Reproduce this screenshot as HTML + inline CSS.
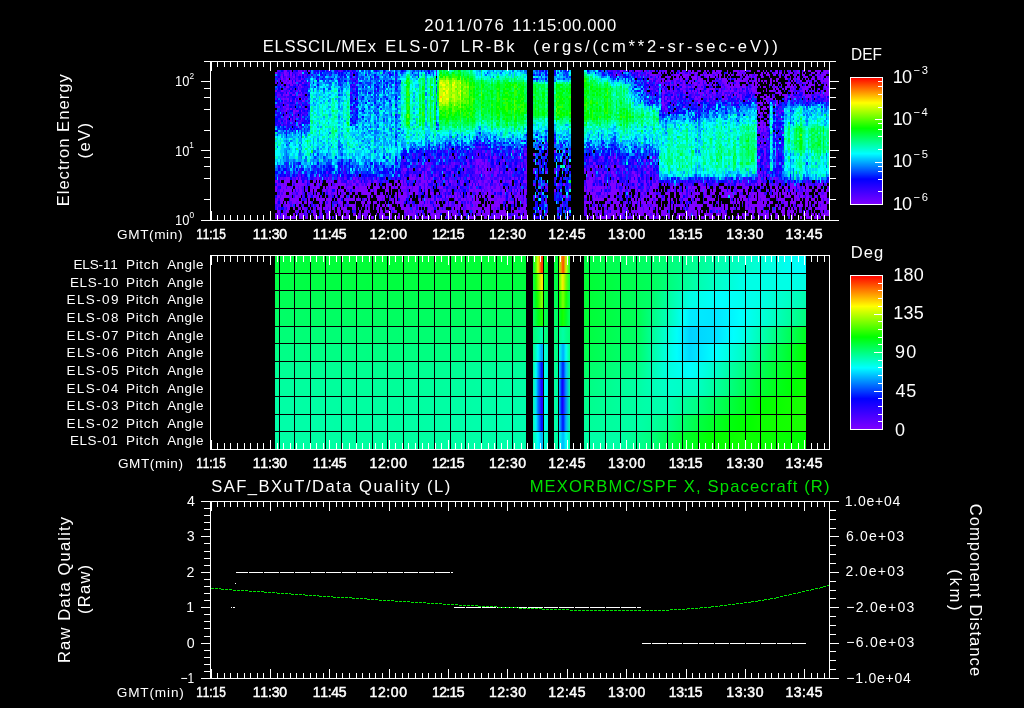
<!DOCTYPE html>
<html lang="en"><head><meta charset="utf-8"><title>ELS plot</title>
<style>html,body{margin:0;padding:0;background:#000;overflow:hidden}svg{display:block}text{font-family:"Liberation Sans",sans-serif;font-kerning:none;white-space:pre}</style>
</head><body>
<svg width="1024" height="708" viewBox="0 0 1024 708">
<rect width="1024" height="708" fill="#000"/><g fill="#fff">
<g shape-rendering="crispEdges" fill="none">
<path stroke="#8000ff" stroke-width="2" d="M284 71h2h1m11 0h1m2 0h1m2 0h1m3 0h2m310 0h2h1m8 0h1m3 0h2h1h2m4 0h2m3 0h1m2 0h1m12 0h2m4 0h2m9 0h1m5 0h1h2m1 0h2m4 0h2m4 0h2m7 0h2m1 0h2h1h2m6 0h1m5 0h1h2h1h2m1 0h2h1h2m4 0h2m6 0h1h2m3 0h1m2 0h1m9 0h2m9 0h1m2 0h1m6 0h2m4 0h2m3 0h1h2m4 0h2m1 0h2h1m3 0h2h1h2M275 73h2m7 0h2m4 0h2m7 0h2h1m50 0h1m83 0h1m209 0h1m2 0h1m8 0h1h2m4 0h2m9 0h1m2 0h1h2m6 0h1m2 0h1h2m1 0h2h1m5 0h1m2 0h1m5 0h1h2h1m2 0h1h2m6 0h1m2 0h1m6 0h2h1m5 0h1m8 0h1m6 0h2m1 0h2m1 0h2m3 0h1m3 0h2m1 0h2h1m2 0h1m5 0h1h2m4 0h2h1m2 0h1m2 0h1m5 0h1h2h1m2 0h1h2m3 0h1h2h1M284 75h2h1m3 0h2m6 0h1m2 0h1m315 0h2m19 0h2m6 0h1m3 0h2h1h2h1m18 0h2h1h2h1m3 0h2h1h2h1m6 0h2m3 0h1h2m1 0h2m1 0h2h1h2m3 0h1h2m1 0h2m3 0h1m3 0h2m1 0h2m3 0h1h2m1 0h2m1 0h2m1 0h2m1 0h2h1m3 0h2h1m2 0h1h2m3 0h1h2h1m3 0h2h1m3 0h2m4 0h2h1h2m3 0h1m2 0h1m5 0h1h2m6 0h1m5 0h1m3 0h2h1h2M281 77h2m3 0h1m6 0h2m354 0h1m6 0h2m1 0h2m4 0h2h1h2h1m2 0h1m3 0h2m1 0h2m1 0h2h1m2 0h1m2 0h1h2h1h2m1 0h2m6 0h1h2m1 0h2m1 0h2m4 0h2m3 0h1m20 0h1h2h1m2 0h1m2 0h1m6 0h2m6 0h1m9 0h2m4 0h2m3 0h1m6 0h2m6 0h1h2m4 0h2m3 0h1h2m1 0h2m3 0h1M281 79h2m3 0h1h2m12 0h1m347 0h1h2h1m5 0h1m3 0h2m9 0h1m2 0h1h2m1 0h2m4 0h2m4 0h2h1h2m1 0h2h1h2m12 0h1m3 0h2m1 0h2h1h2m3 0h1m6 0h2h1m3 0h2h1h2m7 0h2m1 0h2m10 0h2m4 0h2h1m6 0h2h1m2 0h1m2 0h1m3 0h2h1m5 0h1m2 0h1m2 0h1h2m4 0h2m1 0h2m1 0h2h1h2M283 81h1m2 0h1m2 0h1h2m1 0h2m4 0h2m3 0h1m347 0h1m3 0h2m4 0h2m1 0h2m1 0h2h1m3 0h2m4 0h2m1 0h2m4 0h2m7 0h2h1h2m1 0h2m1 0h2m3 0h1m9 0h2h1h2h1m6 0h2h1h2h1h2h1h2m4 0h2m3 0h1h2m1 0h2m1 0h2m1 0h2h1m3 0h2m1 0h2m1 0h2m13 0h2m1 0h2m4 0h2m4 0h2m6 0h1m6 0h2h1h2h1h2M284 83h2m1 0h2h1h2m1 0h2h1m6 0h2m343 0h2m12 0h1m8 0h1m3 0h2m7 0h2m3 0h1h2m1 0h2h1h2m3 0h1h2m1 0h2m3 0h1m2 0h1m2 0h1m8 0h1h2m3 0h1h2m3 0h1h2m7 0h2m4 0h2m1 0h2h1m5 0h1m2 0h1m3 0h2m6 0h1m6 0h2h1h2h1m11 0h1h2m1 0h2m1 0h2h1m5 0h1m3 0h2m4 0h2M281 85h2m7 0h2h1m6 0h2m354 0h1m11 0h1m2 0h1m3 0h2h1m3 0h2m1 0h2m9 0h1h2m1 0h2h1h2m3 0h1h2m4 0h2h1m5 0h1m3 0h2h1m3 0h2m1 0h2h1h2h1m2 0h1h2m6 0h1h2m1 0h2m1 0h2m9 0h1m3 0h2m3 0h1m2 0h1m5 0h1h2m1 0h2m1 0h2m3 0h1m5 0h1m3 0h2h1h2h1m3 0h2m4 0h2m1 0h2M283 87h1m2 0h1h2m9 0h1m2 0h1m359 0h1m2 0h1m5 0h1m6 0h2m3 0h1h2h1m2 0h1h2m1 0h2m6 0h1m2 0h1m11 0h1m5 0h1m5 0h1h2h1h2h1m2 0h1h2h1m2 0h1h2h1m6 0h2h1h2m3 0h1m2 0h1h2m9 0h1m9 0h2h1m2 0h1h2h1m2 0h1m5 0h1m2 0h1h2h1h2m13 0h2h1M298 89h1m363 0h2m6 0h1m9 0h2m16 0h2h1h2m4 0h2m1 0h2h1h2m4 0h2m7 0h2m1 0h2m7 0h2m3 0h1m2 0h1m2 0h1h2h1m11 0h1m6 0h2m1 0h2h1m6 0h2m3 0h1m2 0h1m8 0h1h2h1h2m3 0h1m2 0h1m3 0h2m6 0h1h2M275 91h2m4 0h2m6 0h1m9 0h2m355 0h2m4 0h2h1m2 0h1m15 0h2h1m3 0h2m1 0h2m1 0h2m9 0h1h2m4 0h2m4 0h2m3 0h1h2h1m2 0h1h2h1m3 0h2m4 0h2h1m6 0h2h1h2m6 0h1m2 0h1m2 0h1h2h1m5 0h1m11 0h1h2m10 0h2m1 0h2m9 0h1m3 0h2m3 0h1h2M287 93h2m6 0h1m5 0h1m350 0h1m9 0h2h1m8 0h1m11 0h1m8 0h1m3 0h2h1h2h1m2 0h1m5 0h1h2h1m6 0h2m6 0h1m3 0h2h1m18 0h2h1h2h1m15 0h2h1h2h1m15 0h2m4 0h2m6 0h1m5 0h1m6 0h2h1h2M283 95h1m2 0h1h2m3 0h1h2m3 0h1h2m372 0h1m14 0h1m11 0h1m21 0h2m1 0h2m1 0h2m4 0h2m1 0h2m1 0h2m9 0h1m5 0h1m6 0h2h1m5 0h1m9 0h2h1h2m3 0h1h2m10 0h2m1 0h2h1h2m9 0h1h2m3 0h1h2M662 97h2m1 0h2m4 0h2h1m2 0h1m6 0h2m10 0h2m1 0h2h1m9 0h2m19 0h2m4 0h2m1 0h2m9 0h1m2 0h1h2m3 0h1h2h1m2 0h1h2h1m15 0h2h1m2 0h1m2 0h1m8 0h1m2 0h1h2h1h2m3 0h1m11 0h1M283 99h1m3 0h2m6 0h1m2 0h1m2 0h1m2 0h1m360 0h2m21 0h1m6 0h2h1m2 0h1m12 0h2m7 0h2m3 0h1m8 0h1m3 0h2m7 0h2m12 0h1h2h1m3 0h2h1m2 0h1m9 0h2m24 0h1M283 101h1m6 0h2m3 0h1m6 0h2m348 0h1m9 0h2m3 0h1h2m28 0h2m7 0h2m51 0h1m5 0h1m9 0h2m28 0h2M283 103h1m11 0h1m366 0h2m34 0h2m57 0h1h2h1h2m1 0h2m1 0h2m7 0h2M287 105h2m12 0h1m360 0h2h1m92 0h1m18 0h2M283 107h1m399 0h2m72 0h1h2m3 0h1h2m1 0h2M286 109h1h2m1 0h2m373 0h2m90 0h1h2m1 0h2h1h2h1M286 111h1m6 0h2m1 0h2h1m2 0h1m365 0h1m90 0h2m22 0h2M293 113h2m463 0h2h1h2m1 0h2h1M301 115h1m455 0h1m18 0h2M286 117h1m473 0h1m6 0h2M286 119h1m3 0h2m9 0h1m458 0h1m20 0h1M286 121h1m470 0h1m3 0h2m4 0h2M286 123h1m5 0h1m465 0h2h1h2m1 0h2M298 125h1m458 0h1m2 0h1h2m1 0h2M758 127h2h1h2h1h2M758 129h2m1 0h2m1 0h2M760 131h1h2m1 0h2M757 133h1m2 0h1M763 135h1M764 137h2M758 139h2M761 143h2M764 145h2M760 147h1M449 149h2m307 0h2m4 0h2"/>
<path stroke="#8000ff" stroke-width="3" d="M512 151.5h2m40 0h2m208 0h2M485 154.5h2m37 0h2m7 0h2m229 0h2M490 157.5h1m2 0h1h2m22 0h2m1 0h2m78 0h1m6 0h2m4 0h2m144 0h1M466 160.5h1m9 0h2h1h2h1m3 0h2m16 0h2m84 0h1m21 0h2m4 0h2m25 0h2m111 0h1h2M418 163.5h1m6 0h2m27 0h1m12 0h2m7 0h2h1m2 0h1h2m1 0h2m7 0h2m97 0h2m168 0h1M421 166.5h1m21 0h2m34 0h2m3 0h1h2m9 0h1m20 0h1m3 0h2m3 0h1m14 0h1m53 0h1h2m13 0h2h1m3 0h2m28 0h2m118 0h2M403 169.5h1h2h1m12 0h2m6 0h1h2m46 0h2m4 0h2m1 0h2m4 0h2m4 0h2m10 0h2m15 0h1m6 0h2m27 0h1m21 0h2m6 0h1m29 0h1m2 0h1m18 0h2m6 0h1M422 172.5h2m1 0h2m24 0h1h2m21 0h1h2m1 0h2m3 0h1h2h1m6 0h2h1m3 0h2m6 0h1m2 0h1m12 0h2h1m18 0h2m40 0h2m3 0h1m11 0h1m6 0h2h1m8 0h1m9 0h2h1m12 0h2m108 0h1m2 0h1m3 0h2M403 175.5h1m6 0h2m3 0h1m5 0h1h2m1 0h2m6 0h1m2 0h1m14 0h1m33 0h2m7 0h2h1m90 0h2m4 0h2m6 0h1h2m9 0h1h2m18 0h1h2m1 0h2m118 0h2m7 0h2M286 178.5h1h2h1m6 0h2m1 0h2m16 0h2m9 0h1m9 0h2m13 0h2m54 0h1h2h1h2m3 0h1m2 0h1h2m3 0h1m3 0h2m6 0h1m2 0h1h2m22 0h2h1m5 0h1m11 0h1h2m9 0h1m12 0h2m3 0h1m2 0h1m68 0h1h2m6 0h1h2m1 0h2m13 0h2m12 0h1h2m1 0h2m3 0h1m11 0h1m105 0h2h1m3 0h2m9 0h1M275 181.5h2h1m6 0h2h1h2h1m8 0h1h2h1m3 0h2m6 0h1m3 0h2m1 0h2m4 0h2m3 0h1m6 0h2h1m6 0h2m3 0h1m3 0h2h1m15 0h2h1m18 0h2m3 0h1h2m1 0h2m15 0h1h2h1h2m1 0h2h1m5 0h1m12 0h2h1m8 0h1m2 0h1m8 0h1m5 0h1h2m3 0h1h2m3 0h1m2 0h1h2h1m2 0h1m3 0h2m4 0h2h1m6 0h2m3 0h1h2h1m59 0h1h2h1h2h1m9 0h2m7 0h2m1 0h2h1m14 0h1h2h1h2h1m6 0h2m3 0h1m2 0h1m3 0h2m84 0h1m15 0h2h1M277 184.5h1m3 0h2m1 0h2h1m5 0h1m2 0h1h2h1h2h1h2m6 0h1h2h1m3 0h2m1 0h2m6 0h1h2m4 0h2m1 0h2h1h2h1h2m6 0h1h2h1m3 0h2m3 0h1m2 0h1h2h1m2 0h1m2 0h1m9 0h2m1 0h2h1m2 0h1m2 0h1h2m1 0h2m3 0h1m8 0h1m3 0h2h1m3 0h2h1m5 0h1m5 0h1m6 0h2m3 0h1m9 0h2m7 0h2m1 0h2m1 0h2m1 0h2m3 0h1m3 0h2m7 0h2m1 0h2m12 0h1m42 0h2m4 0h2m22 0h2h1h2m3 0h1m14 0h1h2h1h2m4 0h2m13 0h2m1 0h2m4 0h2m6 0h1h2h1m2 0h1m3 0h2m9 0h1m2 0h1m21 0h2h1m24 0h2m9 0h1h2m1 0h2m1 0h2m10 0h2m1 0h2h1m3 0h2m9 0h1m11 0h1m2 0h1h2h1m3 0h2m7 0h2m10 0h2m1 0h2m3 0h1M275 187.5h2m4 0h2h1h2m1 0h2h1m5 0h1h2m1 0h2m12 0h1m2 0h1h2m4 0h2m1 0h2m1 0h2h1h2h1h2h1m6 0h2m1 0h2h1h2m3 0h1h2m1 0h2h1h2h1h2m1 0h2m4 0h2h1h2m4 0h2m1 0h2m3 0h1h2m1 0h2h1m3 0h2h1h2m3 0h1h2m1 0h2h1h2h1m2 0h1h2m1 0h2m12 0h1h2h1m15 0h2m9 0h1m3 0h2h1m8 0h1m2 0h1h2m1 0h2m3 0h1h2h1m17 0h1m29 0h1m36 0h2m1 0h2h1h2m1 0h2m1 0h2h1h2h1h2m1 0h2m4 0h2h1h2m7 0h2m10 0h2m7 0h2m4 0h2m1 0h2h1m8 0h1m6 0h2m6 0h1m3 0h2m3 0h1h2m1 0h2h1h2m4 0h2h1h2m1 0h2m6 0h1m5 0h1h2m6 0h1m5 0h1m8 0h1h2h1m3 0h2m6 0h1m9 0h2m3 0h1h2m6 0h1h2h1m2 0h1h2h1h2m1 0h2h1m2 0h1m3 0h2m9 0h1h2M275 190.5h2m3 0h1h2m1 0h2h1h2h1h2m1 0h2m1 0h2m1 0h2h1m8 0h1h2m1 0h2h1m6 0h2h1m2 0h1h2m4 0h2m1 0h2m1 0h2h1m2 0h1m2 0h1m2 0h1m2 0h1h2h1h2h1h2h1h2h1m3 0h2m1 0h2h1m8 0h1h2h1m2 0h1m21 0h2h1h2m4 0h2m1 0h2h1m15 0h2h1m2 0h1m20 0h1h2h1m2 0h1h2h1h2m1 0h2m4 0h2h1m2 0h1h2h1h2h1m2 0h1h2m1 0h2m4 0h2m1 0h2m1 0h2m4 0h2h1m20 0h1m6 0h2m28 0h2m1 0h2h1m5 0h1h2h1h2m1 0h2m7 0h2h1h2h1h2m3 0h1h2m3 0h1m6 0h2m1 0h2m4 0h2m3 0h1m2 0h1m2 0h1m2 0h1m2 0h1m9 0h2h1m9 0h2h1m2 0h1m2 0h1m2 0h1m2 0h1m2 0h1h2m1 0h2h1m3 0h2m1 0h2h1m6 0h2h1h2m1 0h2m7 0h2h1h2h1m2 0h1h2m3 0h1m6 0h2m6 0h1m5 0h1h2m1 0h2m4 0h2m3 0h1m2 0h1h2m1 0h2m3 0h1m3 0h2m1 0h2m1 0h2m4 0h2h1m3 0h2m3 0h1M280 193.5h1m2 0h1h2m3 0h1h2m6 0h1h2h1m5 0h1m9 0h2h1m8 0h1h2m3 0h1h2m1 0h2m4 0h2m4 0h2m3 0h1m6 0h2h1h2h1h2h1m3 0h2h1m5 0h1m2 0h1m9 0h2m1 0h2m3 0h1h2m3 0h1h2m3 0h1h2m7 0h2m3 0h1h2m4 0h2m3 0h1m8 0h1m2 0h1h2m4 0h2m4 0h2m7 0h2m6 0h1h2m1 0h2h1m2 0h1m2 0h1m5 0h1h2m4 0h2m6 0h1h2m4 0h2m61 0h2m1 0h2h1h2h1m5 0h1h2m1 0h2m1 0h2h1h2h1h2h1m2 0h1m2 0h1m5 0h1m2 0h1m5 0h1m3 0h2m3 0h1m2 0h1h2h1m12 0h2h1h2m4 0h2m3 0h1h2m1 0h2h1m2 0h1m6 0h2h1h2m4 0h2m6 0h1h2m4 0h2h1m3 0h2h1h2h1h2m1 0h2m3 0h1m6 0h2m1 0h2m1 0h2h1h2m1 0h2h1h2h1m5 0h1m6 0h2m1 0h2m1 0h2h1h2m1 0h2m1 0h2h1m3 0h2m6 0h1m8 0h1m5 0h1m3 0h2h1M277 196.5h1h2m1 0h2h1h2h1h2m6 0h1h2m1 0h2m7 0h2m3 0h1h2m1 0h2m6 0h1m9 0h2m3 0h1h2h1m5 0h1m3 0h2m3 0h1m9 0h2m7 0h2h1h2h1h2m10 0h2m1 0h2h1h2h1h2h1m26 0h1m2 0h1m5 0h1h2m1 0h2m1 0h2m1 0h2m1 0h2m1 0h2m7 0h2m4 0h2m1 0h2m1 0h2m1 0h2h1m3 0h2h1m3 0h2h1m2 0h1m2 0h1m6 0h2m4 0h2h1m2 0h1m3 0h2m37 0h2m3 0h1m15 0h2h1m2 0h1m3 0h2m1 0h2m7 0h2m4 0h2h1m11 0h1m2 0h1m5 0h1h2m6 0h1m2 0h1m2 0h1m2 0h1h2h1m2 0h1h2m3 0h1m3 0h2m4 0h2m4 0h2h1m5 0h1h2m1 0h2h1m2 0h1m6 0h2h1h2h1m12 0h2h1h2h1m2 0h1h2h1m5 0h1h2h1h2h1m5 0h1h2m1 0h2m1 0h2h1h2h1h2m4 0h2h1h2m1 0h2m6 0h1h2h1h2h1m3 0h2h1h2m1 0h2h1m3 0h2h1m6 0h2m3 0h1h2h1h2h1M277 199.5h1m2 0h1h2h1m6 0h2h1h2h1h2h1m2 0h1m6 0h2m3 0h1m2 0h1h2h1h2h1h2m1 0h2h1h2m6 0h1h2h1m3 0h2h1h2h1h2h1h2m1 0h2h1m5 0h1m3 0h2m7 0h2h1h2m1 0h2m6 0h1m3 0h2m3 0h1h2h1h2m4 0h2m7 0h2m4 0h2m1 0h2m1 0h2h1m2 0h1h2m1 0h2m6 0h1m6 0h2h1m3 0h2m1 0h2m3 0h1h2m1 0h2m1 0h2h1m9 0h2h1h2h1m3 0h2h1h2h1h2m3 0h1m6 0h2m1 0h2m4 0h2m63 0h1m3 0h2h1h2h1h2h1h2m3 0h1h2h1h2h1h2h1m14 0h1h2m4 0h2m1 0h2h1m6 0h2h1m2 0h1h2m10 0h2m1 0h2m3 0h1m6 0h2h1h2m3 0h1m3 0h2h1h2m7 0h2h1h2h1h2m3 0h1m11 0h1m3 0h2m1 0h2m1 0h2m1 0h2h1h2m1 0h2h1h2h1h2m1 0h2m1 0h2h1h2m12 0h1h2h1h2h1m6 0h2m1 0h2m1 0h2h1m2 0h1m2 0h1h2h1m2 0h1h2h1m2 0h1m3 0h2m1 0h2h1M275 202.5h2m4 0h2m1 0h2m1 0h2m3 0h1h2h1m2 0h1h2h1m2 0h1h2m1 0h2h1m9 0h2m3 0h1m2 0h1h2m7 0h2h1h2m4 0h2m6 0h1m5 0h1h2h1m2 0h1h2h1m2 0h1h2h1m8 0h1m6 0h2m1 0h2h1h2h1h2h1m15 0h2h1h2m1 0h2m1 0h2m4 0h2m1 0h2m7 0h2m1 0h2m7 0h2h1m5 0h1m2 0h1m2 0h1h2h1h2h1h2m3 0h1m2 0h1m2 0h1m3 0h2h1h2m1 0h2h1m5 0h1h2h1h2m10 0h2m58 0h2h1h2m1 0h2m6 0h1m6 0h2m6 0h1h2m1 0h2h1m5 0h1m6 0h2h1h2m1 0h2m1 0h2h1h2m1 0h2h1h2m1 0h2m6 0h1m6 0h2m3 0h1m2 0h1m8 0h1m6 0h2h1h2m7 0h2m1 0h2m3 0h1m5 0h1m11 0h1h2m1 0h2m1 0h2h1m2 0h1m3 0h2m1 0h2h1m5 0h1h2h1h2m1 0h2h1m2 0h1h2h1m8 0h1m2 0h1h2h1m2 0h1h2h1h2m4 0h2m3 0h1h2m1 0h2m3 0h1h2m1 0h2h1h2m3 0h1h2M280 205.5h1m5 0h1h2h1m2 0h1m3 0h2h1m14 0h1m3 0h2m1 0h2m4 0h2h1h2m3 0h1h2m4 0h2m6 0h1h2h1h2m7 0h2m1 0h2m6 0h1m3 0h2h1m2 0h1h2m1 0h2m1 0h2h1m5 0h1m2 0h1h2m3 0h1h2m3 0h1m2 0h1m2 0h1m2 0h1m2 0h1h2h1h2m6 0h1m2 0h1m5 0h1m3 0h2m4 0h2m1 0h2h1m5 0h1h2h1m3 0h2m1 0h2m4 0h2m3 0h1h2m1 0h2h1h2h1h2h1m6 0h2m16 0h2h1m62 0h1m5 0h1h2m6 0h1h2m4 0h2h1m2 0h1h2m4 0h2m7 0h2h1m3 0h2m3 0h1h2h1m2 0h1m2 0h1h2h1h2m3 0h1m9 0h2m3 0h1m2 0h1m2 0h1m6 0h2h1h2h1h2h1h2h1h2m4 0h2h1h2m6 0h1m2 0h1h2m1 0h2h1m8 0h1m2 0h1m5 0h1h2m1 0h2h1h2h1h2h1h2h1h2h1h2m3 0h1m5 0h1h2m7 0h2m3 0h1m2 0h1m3 0h2h1h2h1m2 0h1h2m6 0h1m3 0h2m1 0h2h1h2h1M277 208.5h1m9 0h2h1m3 0h2m3 0h1h2m1 0h2m6 0h1m6 0h2h1h2m1 0h2m1 0h2m1 0h2m1 0h2m3 0h1h2m1 0h2h1h2h1m5 0h1m2 0h1m2 0h1m9 0h2m3 0h1m3 0h2m1 0h2m3 0h1m3 0h2m1 0h2h1m6 0h2h1h2h1h2h1m3 0h2h1m2 0h1m5 0h1m3 0h2h1h2h1m2 0h1m2 0h1m12 0h2m1 0h2m1 0h2m1 0h2m4 0h2h1m2 0h1h2h1h2h1h2h1m2 0h1h2h1h2m1 0h2h1m2 0h1m6 0h2m12 0h1m2 0h1h2h1h2m60 0h1m5 0h1h2m1 0h2m3 0h1m8 0h1h2m9 0h1m3 0h2m3 0h1m2 0h1m2 0h1h2h1h2m1 0h2h1h2m1 0h2h1m3 0h2m1 0h2m3 0h1h2h1m6 0h2m4 0h2m3 0h1m3 0h2h1h2h1m3 0h2h1m8 0h1h2m3 0h1h2h1h2m1 0h2m1 0h2h1m2 0h1h2h1m5 0h1m5 0h1h2m1 0h2m1 0h2m3 0h1h2h1h2m6 0h1m2 0h1m2 0h1m3 0h2m1 0h2h1m3 0h2m1 0h2m3 0h1m8 0h1m3 0h2h1m3 0h2m1 0h2h1h2h1h2h1M277 211.5h1h2m6 0h1h2m6 0h1m5 0h1m11 0h1h2m4 0h2m6 0h1h2m3 0h1m2 0h1h2h1m2 0h1h2h1m2 0h1m9 0h2m3 0h1h2h1h2m7 0h2m1 0h2m4 0h2h1m2 0h1m2 0h1h2m7 0h2h1m2 0h1m3 0h2m3 0h1m2 0h1m5 0h1h2h1m5 0h1m3 0h2h1h2h1h2m6 0h1m8 0h1h2m7 0h2h1m2 0h1h2m4 0h2h1h2m3 0h1h2m3 0h1h2h1h2h1m8 0h1h2h1h2h1m3 0h2m13 0h2m24 0h1m27 0h2h1m2 0h1m2 0h1m3 0h2m4 0h2h1m2 0h1h2m4 0h2m3 0h1m3 0h2h1m2 0h1h2h1h2m1 0h2h1m2 0h1h2h1m3 0h2m3 0h1h2h1h2m7 0h2m9 0h1m2 0h1h2m3 0h1h2m1 0h2m1 0h2m3 0h1m2 0h1m5 0h1m2 0h1m2 0h1h2h1m6 0h2m15 0h1h2h1h2h1m2 0h1h2h1m2 0h1h2m6 0h1m2 0h1m5 0h1h2h1m2 0h1m2 0h1h2h1m2 0h1m2 0h1m6 0h2m6 0h1m6 0h2m4 0h2M275 214.5h2m1 0h2m1 0h2h1m2 0h1m6 0h2m4 0h2h1h2m9 0h1h2m4 0h2m4 0h2h1m6 0h2m1 0h2h1m2 0h1m2 0h1h2m4 0h2h1m2 0h1m3 0h2h1m2 0h1m2 0h1m9 0h2h1h2m4 0h2h1m6 0h2m6 0h1m2 0h1h2h1h2h1m3 0h2m10 0h2h1h2m1 0h2h1m6 0h2h1m3 0h2h1h2h1m6 0h2m12 0h1h2m1 0h2h1m2 0h1h2m6 0h1m2 0h1h2h1h2h1h2m9 0h1m6 0h2h1m18 0h2m39 0h1m2 0h1m2 0h1m2 0h1m3 0h2h1m6 0h2h1h2m1 0h2m1 0h2m1 0h2h1m12 0h2m1 0h2h1h2h1m2 0h1h2h1m2 0h1h2m1 0h2m3 0h1h2h1h2h1h2m3 0h1m3 0h2h1h2h1h2m3 0h1h2m4 0h2m1 0h2m4 0h2h1h2h1h2h1m3 0h2h1h2m1 0h2h1h2m10 0h2m3 0h1h2m3 0h1m9 0h2m1 0h2h1h2h1h2m1 0h2m4 0h2m4 0h2h1m2 0h1h2m1 0h2m1 0h2m7 0h2h1h2h1m2 0h1h2m1 0h2m4 0h2h1h2h1h2M275 217.5h2m1 0h2m3 0h1h2m6 0h1h2m6 0h1h2m3 0h1m6 0h2h1h2m1 0h2m4 0h2m1 0h2m10 0h2m1 0h2h1h2m7 0h2h1m6 0h2m1 0h2m1 0h2m7 0h2h1h2h1m3 0h2h1m5 0h1h2m4 0h2m3 0h1m5 0h1h2h1m2 0h1m3 0h2h1m3 0h2h1m2 0h1h2m6 0h1m2 0h1h2h1m8 0h1h2m6 0h1h2h1h2h1m5 0h1m2 0h1h2m3 0h1m2 0h1h2h1h2h1m2 0h1m2 0h1m3 0h2m7 0h2m1 0h2h1h2m61 0h2m1 0h2m4 0h2h1h2m1 0h2h1h2h1h2m3 0h1h2h1m3 0h2h1m2 0h1h2h1m2 0h1h2m3 0h1m6 0h2m3 0h1h2h1m3 0h2h1h2m7 0h2m7 0h2m3 0h1m2 0h1h2m1 0h2m4 0h2m4 0h2h1m5 0h1h2h1h2m3 0h1m3 0h2m4 0h2m7 0h2h1h2m10 0h2m4 0h2m4 0h2h1h2m6 0h1h2m6 0h1m6 0h2m7 0h2m4 0h2h1h2h1m2 0h1h2h1h2h1m2 0h1"/>
<path stroke="#6600ff" stroke-width="2" d="M290 71h2m7 0h2m39 0h1m288 0h2m9 0h1m12 0h2m4 0h2m1 0h2m36 0h1m6 0h2m66 0h1m5 0h1m2 0h1m11 0h1m20 0h1M286 73h1h2m9 0h1m314 0h1m18 0h2m13 0h2m1 0h2m18 0h1m11 0h1h2m24 0h1m30 0h2h1m32 0h1M281 75h2m4 0h2m4 0h2m9 0h1m131 0h1m173 0h1m3 0h2m27 0h1m5 0h1m6 0h2m31 0h2m15 0h1m5 0h1m8 0h1m11 0h1m5 0h1m54 0h2m19 0h2M290 77h2m9 0h1m2 0h1m47 0h1m282 0h2m16 0h2m21 0h1m9 0h2m24 0h1m3 0h2m9 0h1m2 0h1m9 0h2m13 0h2m37 0h2m3 0h1m3 0h2m18 0h1M292 79h1m3 0h2m361 0h2m3 0h1m9 0h2m6 0h1m51 0h2m12 0h1m2 0h1m42 0h2m6 0h1m11 0h1m5 0h1M284 81h2m10 0h2h1m359 0h1h2m31 0h2m3 0h1m47 0h1h2m4 0h2m57 0h1m3 0h2M275 83h2m3 0h1m27 0h2m345 0h1h2m4 0h2m13 0h2h1m17 0h1m24 0h2m69 0h1m3 0h2m6 0h1m18 0h2h1M296 85h2m54 0h1m296 0h1m12 0h2m1 0h2m4 0h2m9 0h1m2 0h1m24 0h2m12 0h1m3 0h2m70 0h2m6 0h1M658 87h1m35 0h1m3 0h2m22 0h2m1 0h2m7 0h2m12 0h1m8 0h1m14 0h1m3 0h2m3 0h1m6 0h2m10 0h2m1 0h2m9 0h1M277 89h1m6 0h2h1m3 0h2m61 0h2m294 0h1h2h1m14 0h1m14 0h1h2m3 0h1m8 0h1m11 0h1m15 0h2h1m9 0h2m16 0h2m25 0h2M283 91h1m12 0h2m372 0h1h2m1 0h2h1m11 0h1m9 0h2m22 0h2m4 0h2m10 0h2m7 0h2m22 0h2m4 0h2m19 0h2h1M284 93h2m4 0h2m58 0h2m306 0h1m24 0h2m4 0h2m16 0h2m9 0h1m18 0h2m6 0h1m3 0h2m1 0h2h1m36 0h2m22 0h2m1 0h2m1 0h2M277 95h1h2h1m3 0h2m15 0h1m360 0h2m12 0h1m2 0h1m6 0h2m6 0h1m6 0h2m1 0h2m1 0h2h1h2m1 0h2h1m23 0h1m5 0h1m23 0h1m9 0h2m6 0h1m36 0h2M277 97h1m8 0h1m11 0h1m350 0h1m42 0h2m13 0h2m15 0h1h2m45 0h1h2m19 0h2m3 0h1m15 0h2m4 0h2h1M281 99h2m1 0h2h1m20 0h1m48 0h2m300 0h1m2 0h1h2m7 0h2m3 0h1h2m15 0h1m3 0h2m7 0h2m15 0h1h2m66 0h1m32 0h1M287 101h2m15 0h1m462 0h2m57 0h1M298 103h1m8 0h1m353 0h1m3 0h2m6 0h1m2 0h1m12 0h2m3 0h1m42 0h2M286 105h1m384 0h2m27 0h1m24 0h2m34 0h2M277 107h1h2m4 0h2m1 0h2m13 0h2m48 0h1m309 0h2m1 0h2M295 109h1m9 0h2m360 0h1m110 0h1M284 111h2m9 0h1m378 0h2m87 0h1M779 113h2M287 115h2m471 0h1m6 0h2M283 117h1m3 0h2m4 0h2m1 0h2h1m2 0h1m456 0h2m1 0h2M284 119h2m7 0h2M283 121h1m6 0h2m468 0h1M280 123h1m17 0h1h2m462 0h1m3 0h2M281 125h2M286 127h1m12 0h2m456 0h1m9 0h2m12 0h1M766 129h1M766 133h1h2m9 0h1m3 0h2M766 135h1M760 137h1m6 0h2M764 139h2M757 141h1m2 0h1h2m1 0h2M479 143h2m64 0h2m211 0h2M760 145h1M439 147h1m39 0h2m280 0h2M500 149h2m21 0h1m2 0h1m236 0h1"/>
<path stroke="#6600ff" stroke-width="3" d="M469 151.5h1m12 0h2h1M412 154.5h1m17 0h1m20 0h1m3 0h2m19 0h2m12 0h1m3 0h2m30 0h1m18 0h2m67 0h2m33 0h1m107 0h1m18 0h2M425 157.5h2m6 0h1m6 0h2m7 0h2m45 0h1m105 0h2m49 0h2m109 0h2M404 160.5h2m61 0h2m6 0h1m11 0h1m6 0h2m28 0h2m42 0h1m17 0h1m3 0h2m10 0h2m160 0h2M412 163.5h1m17 0h1m20 0h1h2m19 0h2m4 0h2m7 0h2m10 0h2m10 0h2m7 0h2m3 0h1m38 0h1m29 0h1m14 0h1m2 0h1m20 0h1h2m12 0h1M422 166.5h2m4 0h2h1m5 0h1m12 0h2m1 0h2m7 0h2m4 0h2h1m5 0h1h2m3 0h1m6 0h2m7 0h2m19 0h2m70 0h2h1m26 0h1m17 0h1m14 0h1m104 0h1M409 169.5h1m2 0h1m33 0h2m1 0h2m6 0h1m6 0h2m9 0h1m20 0h1m114 0h2m1 0h2m33 0h1M326 172.5h2m73 0h2m1 0h2m37 0h2m19 0h2m12 0h1m3 0h2m4 0h2h1m6 0h2m3 0h1m2 0h1m48 0h2m28 0h2m3 0h1h2m7 0h2h1m3 0h2m19 0h2m18 0h1m2 0h1m128 0h1M298 175.5h1m18 0h2m90 0h1m3 0h2m42 0h1m11 0h1m8 0h1m3 0h2m3 0h1m2 0h1m17 0h1m2 0h1m53 0h1m23 0h1m32 0h1m21 0h2m3 0h1m2 0h1m3 0h2m103 0h2M280 178.5h1h2m1 0h2m6 0h1m32 0h1m18 0h2m10 0h2m9 0h1m9 0h2m6 0h1m18 0h2m9 0h1m3 0h2m4 0h2m3 0h1m18 0h2m7 0h2m1 0h2m16 0h2m4 0h2m6 0h1m6 0h2m1 0h2m6 0h1m3 0h2m7 0h2m60 0h1m5 0h1h2m19 0h2m28 0h2m9 0h1m2 0h1m111 0h2m1 0h2m1 0h2M280 181.5h1m11 0h1h2h1m18 0h2m13 0h2m1 0h2m16 0h2m10 0h2m4 0h2h1m26 0h1m18 0h2m27 0h1h2m4 0h2m1 0h2m4 0h2m7 0h2m9 0h1m5 0h1m18 0h2h1m116 0h1m78 0h2m9 0h1m12 0h2m1 0h2m4 0h2m18 0h1m20 0h1m14 0h1M278 184.5h2h1m2 0h1m20 0h1h2m30 0h1m11 0h1m11 0h1m15 0h2m25 0h2m3 0h1m6 0h2m4 0h2m30 0h1h2m3 0h1m8 0h1m11 0h1h2m9 0h1m2 0h1m5 0h1m6 0h2h1m14 0h1m6 0h2m10 0h2m51 0h1m18 0h2h1m8 0h1m17 0h1m2 0h1m6 0h2m7 0h2m24 0h1m9 0h2m12 0h1h2m12 0h1m11 0h1m8 0h1m11 0h1m5 0h1h2M290 187.5h2h1m5 0h1m2 0h1m8 0h1h2m1 0h2m24 0h1m17 0h1m14 0h1m5 0h1m20 0h1m5 0h1h2m19 0h2h1m6 0h2m46 0h2m6 0h1m8 0h1m2 0h1m35 0h1m3 0h2m22 0h2m21 0h1m2 0h1m12 0h2m7 0h2m12 0h1h2m3 0h1m14 0h1m3 0h2m12 0h1m48 0h2m22 0h2m18 0h1m15 0h2m22 0h2m3 0h1m3 0h2m13 0h2M305 190.5h2h1m23 0h1m66 0h2m1 0h2h1h2h1m3 0h2h1m5 0h1m11 0h1m18 0h2m6 0h1m2 0h1m5 0h1m6 0h2m10 0h2h1m33 0h2m67 0h2m1 0h2m34 0h2m12 0h1m6 0h2m12 0h1m3 0h2m7 0h2h1m41 0h1m11 0h1m23 0h1m27 0h2m21 0h1m2 0h1m11 0h1m3 0h2M293 193.5h2h1m15 0h2m12 0h1m6 0h2m9 0h1m12 0h2m22 0h2m9 0h1m8 0h1m5 0h1m5 0h1m14 0h1m5 0h1m2 0h1m21 0h2m9 0h1m11 0h1m9 0h2m19 0h2m129 0h1m9 0h2h1m36 0h2h1m15 0h2m39 0h1m21 0h2h1m18 0h2m3 0h1h2h1m3 0h2h1m9 0h2M289 196.5h1h2m6 0h1m30 0h2h1m14 0h1m24 0h2m3 0h1m9 0h2m72 0h1m8 0h1h2m15 0h1m9 0h2m4 0h2m3 0h1m9 0h2m1 0h2m13 0h2m54 0h1m6 0h2h1m2 0h1m5 0h1m5 0h1m14 0h1m12 0h2m1 0h2m12 0h1m53 0h1m5 0h1m57 0h2m22 0h2M275 199.5h2m54 0h1m2 0h1m24 0h2m4 0h2m25 0h2m24 0h1m8 0h1m35 0h1m3 0h2m15 0h1m9 0h2h1m23 0h1h2m22 0h2m88 0h2m9 0h1m2 0h1m12 0h2h1m14 0h1m86 0h1h2M280 202.5h1m15 0h2m21 0h1m59 0h1m30 0h2m42 0h1m44 0h1m21 0h2h1m21 0h2m15 0h1m30 0h2m13 0h2m6 0h1m65 0h1m5 0h1m17 0h1m38 0h1m2 0h1M284 205.5h2m22 0h2m6 0h1m8 0h1m14 0h1m5 0h1m8 0h1m12 0h2m49 0h2m9 0h1h2m1 0h2m1 0h2m4 0h2m1 0h2m15 0h1m11 0h1m84 0h2m22 0h2m6 0h1m17 0h1m9 0h2m3 0h1m38 0h1m3 0h2m4 0h2m1 0h2m1 0h2m1 0h2m48 0h1m50 0h1m2 0h1m21 0h2M304 208.5h1h2m6 0h1m11 0h1m8 0h1m18 0h2m6 0h1m3 0h2m9 0h1m35 0h1m27 0h2m1 0h2m12 0h1m8 0h1m3 0h2m22 0h2m3 0h1m11 0h1h2m55 0h2m13 0h2m3 0h1h2m12 0h1m3 0h2m3 0h1m3 0h2m49 0h2m1 0h2m15 0h1m8 0h1m14 0h1h2m22 0h2m9 0h1m45 0h2m3 0h1m17 0h1M296 211.5h2m7 0h2m18 0h1m21 0h2m33 0h1m2 0h1m21 0h2m1 0h2m4 0h2m15 0h1m3 0h2h1m11 0h1h2m1 0h2m12 0h1m12 0h2m27 0h1m9 0h2m3 0h1m20 0h1m36 0h2m6 0h1m3 0h2m6 0h1m9 0h2m3 0h1m2 0h1m8 0h1m3 0h2m6 0h1m3 0h2m42 0h1h2m73 0h2m4 0h2m13 0h2m10 0h2m9 0h1m12 0h2M284 214.5h2m21 0h1m8 0h1m42 0h2m4 0h2m9 0h1m2 0h1m27 0h2m15 0h1m11 0h1m12 0h2m15 0h1m6 0h2m1 0h2m7 0h2m6 0h1m3 0h2m15 0h1m90 0h2m6 0h1m18 0h2m24 0h1m27 0h2m4 0h2h1m51 0h2m4 0h2m21 0h1m42 0h2M277 217.5h1m3 0h2m4 0h2h1h2m3 0h1m3 0h2m4 0h2m36 0h1m15 0h2m3 0h1m21 0h2m6 0h1m27 0h2h1m3 0h2m4 0h2m3 0h1m14 0h1h2m51 0h1m17 0h1m39 0h2m24 0h1m8 0h1m27 0h2m22 0h2m81 0h1m6 0h2"/>
<path stroke="#4d00ff" stroke-width="2" d="M277 71h1h2m48 0h1m9 0h2m1 0h2m7 0h2m84 0h1m164 0h1m6 0h2h1m2 0h1h2h1m8 0h1m15 0h2m3 0h1m17 0h1m14 0h1m3 0h2h1m11 0h1m23 0h1m24 0h2m22 0h2m21 0h1h2m27 0h1M277 73h1m3 0h2h1m12 0h2m57 0h1m258 0h2m3 0h1m18 0h2h1m21 0h2m9 0h1m20 0h1m9 0h2m10 0h2m25 0h2m28 0h2m13 0h2m4 0h2h1m24 0h2m4 0h2M296 75h2m1 0h2m4 0h2m45 0h1m266 0h1m2 0h1m8 0h1m12 0h2m12 0h1h2h1m9 0h2h1m8 0h1m11 0h1m57 0h2m64 0h2h1M280 77h1m3 0h2m1 0h2m3 0h1m3 0h2m57 0h1m282 0h2m4 0h2m6 0h1m51 0h2m36 0h1m6 0h2m1 0h2m9 0h1m56 0h1m6 0h2M278 79h2m3 0h1h2m4 0h2m1 0h2m7 0h2m46 0h2m3 0h1m297 0h2m1 0h2m10 0h2m15 0h1m21 0h2m31 0h2m75 0h1M275 81h2m1 0h2m1 0h2m4 0h2m16 0h2m49 0h2m309 0h1m5 0h1m2 0h1m5 0h1m8 0h1m21 0h2h1h2h1m2 0h1m29 0h1m45 0h2m9 0h1h2M283 83h1m2 0h1m68 0h1m303 0h2m6 0h1m14 0h1m36 0h2h1m6 0h2m49 0h2M286 85h1h2m12 0h1m6 0h2m45 0h1m39 0h2m264 0h1m29 0h1h2m3 0h1m5 0h1m5 0h1m35 0h1m3 0h2m19 0h2M299 87h2m1 0h2m342 0h1m3 0h2h1m3 0h2m16 0h2m10 0h2m9 0h1m42 0h2m9 0h1m21 0h2m52 0h2M299 89h2m354 0h1m15 0h2m1 0h2h1m8 0h1m9 0h2m6 0h1m2 0h1m15 0h2m9 0h1m5 0h1m9 0h2m40 0h2m1 0h2m27 0h1h2M284 91h2m1 0h2m4 0h2m60 0h1m288 0h2m22 0h2m10 0h2m22 0h2m9 0h1m23 0h1m11 0h1m23 0h1m17 0h1m2 0h1m12 0h2m1 0h2h1M277 93h1h2m24 0h1h2m340 0h2m16 0h2m3 0h1h2m1 0h2m3 0h1m11 0h1h2m1 0h2m22 0h2m3 0h1m2 0h1m14 0h1h2m30 0h1m18 0h2m12 0h1m5 0h1M302 95h2m3 0h1m47 0h1m296 0h1m21 0h2m9 0h1m6 0h2m24 0h1m2 0h1m9 0h2m69 0h1m8 0h1m3 0h2m1 0h2M278 97h2h1h2h1m12 0h2m3 0h1m3 0h2m345 0h1m14 0h1m11 0h1m11 0h1m5 0h1m3 0h2m1 0h2h1m6 0h2h1m3 0h2h1m11 0h1m5 0h1m3 0h2m46 0h2m3 0h1m14 0h1m8 0h1M275 99h2m13 0h2m376 0h2m3 0h1m12 0h2m42 0h1m17 0h1m18 0h2h1m26 0h1m8 0h1h2m1 0h2m7 0h2m7 0h2M298 101h1m371 0h1m3 0h2m18 0h1h2m3 0h1h2m3 0h1m5 0h1m9 0h2m21 0h1h2m15 0h1m5 0h1m15 0h2m3 0h1m2 0h1m15 0h2m4 0h2m6 0h1h2M277 103h1m2 0h1m3 0h2h1m12 0h2m363 0h1m18 0h2m25 0h2m1 0h2m16 0h2m3 0h1m36 0h2m18 0h1M293 105h2m13 0h2m45 0h1m318 0h2m84 0h1m8 0h1m3 0h2m31 0h2M286 107h1m377 0h1m35 0h1m36 0h2m30 0h1m9 0h2h1M283 109h1h2m7 0h2m12 0h1m44 0h1m2 0h1m306 0h2m105 0h1m11 0h1M281 111h2h1m68 0h1m311 0h1h2m109 0h2m1 0h2h1M284 113h2m9 0h1m6 0h2m3 0h1m357 0h2m28 0h2m72 0h1M286 115h1m3 0h2m1 0h2m10 0h2m454 0h2m18 0h1M284 117h2M764 119h2h1m11 0h1h2M278 121h2h1m12 0h2m4 0h2h1m461 0h1M284 123h2M277 125h1m8 0h1M296 127h2m478 0h2M286 129h1m5 0h1m8 0h1m465 0h2h1M757 131h1h2m3 0h1m2 0h1M763 133h1h2m7 0h2M760 135h1h2m1 0h2M757 137h1m3 0h2m3 0h1M761 139h2m3 0h1m9 0h2M521 141h2m240 0h1m3 0h2M554 143h2m201 0h1m9 0h2m7 0h2m3 0h1M766 145h1m2 0h1M476 147h2h1m3 0h2h1m53 0h1m5 0h1m212 0h1m5 0h1m3 0h2h1M473 149h2m15 0h1m33 0h2m15 0h1m47 0h1m12 0h2m40 0h2m111 0h1"/>
<path stroke="#4d00ff" stroke-width="3" d="M439 151.5h1m6 0h2m16 0h2m10 0h2h1m8 0h1h2h1m24 0h2m7 0h2m21 0h1m14 0h1m213 0h2M418 154.5h1m17 0h1m42 0h2m6 0h1m15 0h2m7 0h2m3 0h1m21 0h2m220 0h2M413 157.5h2m16 0h2m10 0h2m6 0h1h2m1 0h2m18 0h1m2 0h1h2m6 0h1m20 0h1m35 0h1m44 0h1h2h1m6 0h2m10 0h2m9 0h1m26 0h1m2 0h1m2 0h1m120 0h2m4 0h2M403 160.5h1m17 0h1m5 0h1m8 0h1m5 0h1m8 0h1m20 0h1m9 0h2m6 0h1m9 0h2h1m11 0h1m11 0h1m38 0h1m26 0h1m5 0h1h2m33 0h1m3 0h2m3 0h1m3 0h2m1 0h2h1m5 0h1m104 0h1m2 0h1M415 163.5h1m3 0h2m6 0h1h2m1 0h2m9 0h1m2 0h1m9 0h2h1h2m9 0h1m2 0h1m2 0h1m8 0h1m2 0h1m18 0h2h1m9 0h2m4 0h2m63 0h1m26 0h1h2m25 0h2m115 0h2m4 0h2m7 0h2h1m2 0h1M403 166.5h1m21 0h2h1m14 0h1m3 0h2m3 0h1m2 0h1m9 0h2h1m15 0h2m3 0h1m2 0h1m9 0h2m3 0h1m6 0h2m52 0h2m1 0h2m16 0h2m10 0h2m1 0h2m4 0h2m10 0h2h1h2m4 0h2m12 0h1m5 0h1m8 0h1m105 0h2h1m2 0h1M401 169.5h2m7 0h2m6 0h1m6 0h2m21 0h1m17 0h1m6 0h2m4 0h2h1m6 0h2m4 0h2m6 0h1m44 0h1m6 0h2m1 0h2m28 0h2h1m3 0h2m1 0h2m3 0h1h2m16 0h2m10 0h2m4 0h2m3 0h1m6 0h2m106 0h2M283 172.5h1m14 0h1m44 0h1m51 0h2m6 0h1m8 0h1m5 0h1m14 0h1m2 0h1h2m6 0h1m45 0h2m13 0h2m1 0h2m1 0h2m3 0h1m15 0h2m58 0h2m13 0h2m4 0h2m15 0h1m3 0h2m1 0h2h1m2 0h1m8 0h1m2 0h1m105 0h2M286 175.5h1m12 0h2m1 0h2m9 0h1m15 0h2h1m6 0h2m4 0h2m42 0h1m38 0h1m6 0h2m1 0h2m16 0h2m6 0h1m8 0h1h2h1h2m10 0h2m3 0h1m5 0h1m9 0h2m10 0h2m1 0h2h1m9 0h2m52 0h2m12 0h1m6 0h2m3 0h1m6 0h2m6 0h1h2m21 0h1m2 0h1m105 0h2M283 178.5h1m9 0h2m19 0h2h1m12 0h2h1m2 0h1m5 0h1m5 0h1m8 0h1m3 0h2m13 0h2m18 0h1m2 0h1m3 0h2m13 0h2m33 0h1h2m3 0h1m18 0h2m6 0h1m5 0h1h2m4 0h2m9 0h1m17 0h1m33 0h2m3 0h1m21 0h2m7 0h2m3 0h1m26 0h1m8 0h1m11 0h1m6 0h2m87 0h1m32 0h1M304 181.5h1m3 0h2m18 0h1m20 0h1m5 0h1m3 0h2m12 0h1m3 0h2m4 0h2m1 0h2m6 0h1m15 0h2h1m5 0h1m18 0h2h1h2m12 0h1m20 0h1h2m4 0h2m4 0h2m7 0h2m94 0h2m3 0h1m9 0h2m3 0h1m15 0h2m10 0h2h1m3 0h2m9 0h1m5 0h1m21 0h2m7 0h2m1 0h2m43 0h2h1h2m1 0h2m10 0h2m1 0h2m9 0h1m3 0h2m6 0h1m2 0h1m15 0h2m7 0h2m4 0h2M316 184.5h1m15 0h2h1m12 0h2m1 0h2m6 0h1m3 0h2m24 0h1m14 0h1m14 0h1m29 0h1m3 0h2m31 0h2h1m6 0h2m22 0h2m1 0h2m15 0h1h2m18 0h1m24 0h2h1m5 0h1m9 0h2m1 0h2m16 0h2h1m5 0h1m2 0h1m35 0h1h2m4 0h2m4 0h2h1m2 0h1h2m16 0h2m4 0h2m9 0h1m2 0h1m11 0h1m8 0h1m3 0h2m19 0h2m1 0h2m3 0h1m23 0h1m2 0h1h2h1m3 0h2h1m2 0h1M277 187.5h1m24 0h2m1 0h2h1m11 0h1m8 0h1m17 0h1m5 0h1m35 0h1m23 0h1m14 0h1m17 0h1m3 0h2h1m3 0h2m7 0h2h1m5 0h1m5 0h1m3 0h2m6 0h1m3 0h2m4 0h2m4 0h2m4 0h2m4 0h2h1m3 0h2m78 0h1m21 0h2m1 0h2m15 0h1h2m25 0h2m15 0h1m8 0h1m12 0h2m19 0h2m6 0h1m23 0h1m53 0h1M278 190.5h2m3 0h1m14 0h1m3 0h2m18 0h1m3 0h2m12 0h1m6 0h2m4 0h2m15 0h1m60 0h2m7 0h2h1m41 0h1m15 0h2m39 0h1m26 0h1m17 0h1m20 0h1m11 0h1m20 0h1m5 0h1m23 0h1m3 0h2m13 0h2m1 0h2m36 0h1m3 0h2m31 0h2m9 0h1m21 0h2M277 193.5h1m3 0h2m9 0h1m9 0h2m4 0h2h1m3 0h2m15 0h1m9 0h2m18 0h1m26 0h1m18 0h2m9 0h1h2h1m18 0h2m1 0h2m1 0h2m9 0h1m14 0h1m2 0h1m2 0h1m29 0h1m12 0h2m3 0h1m14 0h1m62 0h1m15 0h2m13 0h2m21 0h1h2m21 0h1m6 0h2m12 0h1m2 0h1m17 0h1m11 0h1m3 0h2m79 0h2h1M280 196.5h1m21 0h2m6 0h1m5 0h1m3 0h2m45 0h1m21 0h2m16 0h2m6 0h1m9 0h2h1m3 0h2m15 0h1m51 0h2m3 0h1m8 0h1m18 0h2m30 0h1m29 0h1m6 0h2m16 0h2m18 0h1h2m42 0h1m5 0h1m18 0h2m6 0h1m30 0h2m58 0h2h1M305 199.5h2m75 0h1m6 0h2m39 0h1m8 0h1m3 0h2m1 0h2m6 0h1m11 0h1m38 0h1m3 0h2m55 0h2m16 0h2h1m33 0h2m45 0h1m12 0h2m21 0h1m56 0h1m8 0h1m6 0h2m18 0h1m30 0h2M277 202.5h1m12 0h2m135 0h1m5 0h1m8 0h1m8 0h1m11 0h1m51 0h2m72 0h1m17 0h1m15 0h2m1 0h2m27 0h1m47 0h1m12 0h2m3 0h1m60 0h2m39 0h1M277 205.5h1h2m3 0h1m18 0h2m40 0h2m57 0h1m5 0h1m12 0h2m27 0h1h2h1m2 0h1m6 0h2m4 0h2m12 0h1m30 0h2m3 0h1m2 0h1m123 0h2m1 0h2m15 0h1m44 0h1m54 0h2m10 0h2m31 0h2M284 208.5h2m28 0h2m12 0h1m62 0h1m29 0h1m23 0h1m18 0h2m31 0h2m48 0h1m57 0h2m12 0h1m3 0h2h1m17 0h1m77 0h1m12 0h2m18 0h1m23 0h1m21 0h2m6 0h1M283 211.5h1h2m12 0h1m5 0h1m107 0h1m2 0h1m3 0h2m10 0h2m15 0h1h2m21 0h1m50 0h1m17 0h1m15 0h2m9 0h1m17 0h1m12 0h2m6 0h1h2m16 0h2m58 0h2m25 0h2m111 0h1M277 214.5h1m27 0h2m3 0h1m93 0h2m16 0h2m3 0h1m2 0h1m32 0h1m6 0h2m19 0h2m1 0h2m15 0h1h2m1 0h2m4 0h2m61 0h2m10 0h2m9 0h1m11 0h1m3 0h2m1 0h2m1 0h2m19 0h2m108 0h1M280 217.5h1m5 0h1m35 0h1m5 0h1m3 0h2m39 0h1m38 0h1h2m52 0h2m22 0h2m18 0h1m5 0h1m2 0h1m15 0h2m1 0h2m45 0h1m51 0h2m36 0h1m27 0h2m27 0h1m20 0h1m8 0h1m24 0h2"/>
<path stroke="#3300ff" stroke-width="2" d="M283 71h1m5 0h1m3 0h2m7 0h2m1 0h2m13 0h2m12 0h1m23 0h1m180 0h2m70 0h2m6 0h1m3 0h2m1 0h2m22 0h2m21 0h1m3 0h2m33 0h1m26 0h1m8 0h1m30 0h2m7 0h2m12 0h1M280 73h1m11 0h1h2h1m8 0h1m78 0h2m4 0h2m226 0h2m15 0h1h2m6 0h1h2m39 0h1h2m1 0h2m42 0h1M308 75h2m1 0h2m16 0h2m19 0h2m43 0h2m216 0h1m21 0h2m3 0h1h2m70 0h2m39 0h1m27 0h2m25 0h2M275 77h2h1m27 0h2m6 0h1m299 0h1h2m25 0h2m4 0h2m48 0h1m86 0h1m29 0h1M295 79h1m2 0h1m18 0h2m33 0h1h2m40 0h2m237 0h1m26 0h1m5 0h1m11 0h1m38 0h1m2 0h1m6 0h2M346 81h1m5 0h1m278 0h1m8 0h1m3 0h2m3 0h1h2m3 0h1m15 0h2m4 0h2h1m23 0h1m15 0h2m9 0h1m57 0h2m9 0h1m20 0h1M278 83h2m18 0h1m5 0h1h2h1m48 0h2m12 0h1m275 0h1m3 0h2h1m5 0h1m5 0h1m8 0h1m2 0h1m8 0h1m12 0h2m6 0h1m3 0h2m22 0h2m12 0h1m47 0h1m2 0h1h2m12 0h1M278 85h2m13 0h2m58 0h2m283 0h2m13 0h2m13 0h2m3 0h1m5 0h1m6 0h2h1m15 0h2m16 0h2m24 0h1M289 87h1m2 0h1m3 0h2m7 0h2m1 0h2m40 0h2m3 0h1m291 0h2m4 0h2m24 0h1m11 0h1m9 0h2m6 0h1m2 0h1m11 0h1m21 0h2m21 0h1m24 0h2m27 0h1M287 89h2m4 0h2m6 0h1m2 0h1h2m337 0h2h1m6 0h2m1 0h2m7 0h2m19 0h2m28 0h2m3 0h1m12 0h2m7 0h2m54 0h1h2M280 91h1m5 0h1m17 0h1m347 0h1h2m3 0h1m18 0h2m3 0h1m11 0h1m6 0h2m6 0h1m11 0h1m12 0h2h1m5 0h1m5 0h1m35 0h1m3 0h2m4 0h2m3 0h1m11 0h1m11 0h1M283 93h1m8 0h1m6 0h2m51 0h1m300 0h2m12 0h1m8 0h1h2m9 0h1m15 0h2m4 0h2m9 0h1m3 0h2m1 0h2m1 0h2m7 0h2m4 0h2m39 0h1m11 0h1M289 95h1m5 0h1m357 0h2m3 0h1m5 0h1m5 0h1m20 0h1m3 0h2h1h2m12 0h1m3 0h2m1 0h2m3 0h1m2 0h1m14 0h1h2m7 0h2m19 0h2m21 0h1h2m6 0h1m6 0h2h1m8 0h1M284 97h2m1 0h2h1h2m10 0h2m46 0h2h1m3 0h2m300 0h1m9 0h2m12 0h1m11 0h1m8 0h1m5 0h1m6 0h2m9 0h1m8 0h1m47 0h1m12 0h2m1 0h2m22 0h2M305 99h2m45 0h1m296 0h1m2 0h1m11 0h1m18 0h2m25 0h2h1m5 0h1m15 0h2m3 0h1m2 0h1h2m39 0h1m6 0h2m4 0h2m21 0h1m3 0h2M284 101h2h1m6 0h2m1 0h2m10 0h2m355 0h2m9 0h1m11 0h1m2 0h1m5 0h1m15 0h2m1 0h2m3 0h1m2 0h1m2 0h1m8 0h1m3 0h2h1m9 0h2m25 0h2m3 0h1m9 0h2m7 0h2m9 0h1m5 0h1m6 0h2M281 103h2m4 0h2h1m11 0h1m2 0h1m362 0h1m18 0h2m67 0h2m22 0h2m4 0h2m16 0h2m3 0h1M275 105h2h1m2 0h1m9 0h2h1m6 0h2m6 0h1m357 0h2m18 0h1m6 0h2m3 0h1m3 0h2m9 0h1m18 0h2m45 0h1m47 0h1M275 107h2m4 0h2m9 0h1m392 0h1m9 0h2m1 0h2m1 0h2m4 0h2m1 0h2m114 0h1M280 109h1h2m6 0h1m8 0h1m2 0h1m2 0h1m45 0h2m312 0h1m8 0h1m2 0h1m21 0h2M275 111h2m10 0h2h1m15 0h2m48 0h1m306 0h2m73 0h2m39 0h1m11 0h1M281 113h2m4 0h2m7 0h2m3 0h1m2 0h1h2m355 0h2m7 0h2h1m102 0h2M277 115h1m6 0h2m10 0h2m6 0h1M295 117h1m480 0h2M280 119h1h2m12 0h1m6 0h2m51 0h1M284 121h2m1 0h2m9 0h1m3 0h2m472 0h2M283 123h1m24 0h2M284 125h2m3 0h1h2m1 0h2h1m8 0h1m458 0h1m9 0h2m6 0h1M301 127h1M760 129h1m2 0h1m12 0h2M295 131h1m485 0h1M286 133h1m471 0h2m1 0h2m18 0h1M767 135h2m7 0h2m1 0h2M758 137h2m13 0h2m1 0h2M758 141h2m18 0h1m2 0h1M482 143h2m282 0h1m2 0h1M475 145h1m84 0h2m199 0h2h1m14 0h1m2 0h1h2M455 147h2m18 0h1m9 0h2h1m12 0h2m15 0h1m6 0h2m232 0h2m4 0h2M445 149h1m32 0h1h2m13 0h2m51 0h1m21 0h2m48 0h1m147 0h2h1m6 0h2m3 0h1"/>
<path stroke="#3300ff" stroke-width="3" d="M421 151.5h1m3 0h2m10 0h2m6 0h1m9 0h2m1 0h2m13 0h2h1m3 0h2m12 0h1m14 0h1m9 0h2m6 0h1m38 0h1m47 0h1m144 0h2m21 0h1M407 154.5h2m4 0h2m4 0h2m7 0h2m24 0h1m14 0h1m3 0h2m7 0h2m4 0h2m10 0h2m6 0h1m56 0h1m45 0h2m22 0h2m142 0h2h1M418 157.5h1m2 0h1m14 0h1m8 0h1m15 0h2h1m5 0h1h2m4 0h2m6 0h1h2m10 0h2h1m3 0h2m4 0h2m4 0h2h1m8 0h1m38 0h1m44 0h1m2 0h1m3 0h2m144 0h1m3 0h2M401 160.5h2m42 0h1m2 0h1m3 0h2m3 0h1m15 0h2m33 0h1m9 0h2m3 0h1m9 0h2m9 0h1m18 0h2m36 0h1m6 0h2m3 0h1m5 0h1m5 0h1m3 0h2h1m23 0h1m120 0h2M286 163.5h1m114 0h2m10 0h2m33 0h1h2m10 0h2m27 0h1m11 0h1m14 0h1m2 0h1m15 0h2m1 0h2m57 0h1m2 0h1m3 0h2m4 0h2m18 0h1m126 0h2m4 0h2M286 166.5h1m14 0h1m39 0h2m58 0h2m1 0h2m6 0h1m5 0h1m18 0h2h1h2m3 0h1m12 0h2m3 0h1m8 0h1m21 0h2m3 0h1m8 0h1m5 0h1m9 0h2m60 0h1m2 0h1m14 0h1m5 0h1m27 0h2m1 0h2m1 0h2m135 0h1M299 169.5h2m12 0h1m27 0h2m1 0h2m69 0h1h2m3 0h1m9 0h2m3 0h1m2 0h1h2h1m8 0h1m17 0h1h2h1m5 0h1m5 0h1m8 0h1m6 0h2m6 0h1m3 0h2m4 0h2h1m18 0h2m4 0h2m12 0h1m38 0h1h2m9 0h1m2 0h1m2 0h1m2 0h1m3 0h2m4 0h2m9 0h1m5 0h1h2m6 0h1m2 0h1m98 0h1m6 0h2h1m2 0h1m8 0h1M286 172.5h1h2m10 0h2m4 0h2m37 0h2m15 0h1m47 0h1h2m4 0h2m6 0h1m3 0h2h1m24 0h2m4 0h2m3 0h1h2m1 0h2m1 0h2m18 0h1m101 0h1m14 0h1m6 0h2m1 0h2m7 0h2m22 0h2m103 0h2m10 0h2m4 0h2M278 175.5h2m12 0h1m30 0h2m9 0h1m11 0h1m6 0h2m6 0h1m33 0h2m4 0h2m9 0h1m5 0h1m9 0h2h1m11 0h1m2 0h1m15 0h2m1 0h2m34 0h2h1h2h1h2m7 0h2m3 0h1m74 0h1m12 0h2m15 0h1m2 0h1h2m6 0h1m5 0h1m3 0h2m120 0h1m5 0h1M278 178.5h2m15 0h1m9 0h2m3 0h1m2 0h1m5 0h1h2m1 0h2m1 0h2m9 0h1m3 0h2m9 0h1m9 0h2m1 0h2m1 0h2h1m21 0h2m4 0h2m3 0h1m2 0h1m21 0h2m7 0h2m15 0h1m8 0h1m6 0h2m1 0h2m3 0h1m3 0h2m10 0h2h1m8 0h1h2m6 0h1m39 0h2m39 0h1m15 0h2m3 0h1m2 0h1m2 0h1h2m22 0h2m76 0h2m10 0h2m4 0h2m10 0h2M337 181.5h1m3 0h2h1m9 0h2m10 0h2h1m11 0h1m23 0h1m5 0h1m9 0h2m6 0h1m3 0h2h1m32 0h1m6 0h2m30 0h1m48 0h2m28 0h2m10 0h2m6 0h1h2m3 0h1m11 0h1m17 0h1m12 0h2h1m12 0h2m10 0h2m1 0h2m7 0h2m12 0h1m2 0h1h2m64 0h2m3 0h1h2m19 0h2m4 0h2m12 0h1M293 184.5h2m13 0h2m36 0h1m9 0h2m7 0h2m43 0h2m12 0h1m9 0h2m9 0h1m21 0h2m22 0h2m6 0h1m8 0h1m8 0h1m5 0h1h2m9 0h1m32 0h1m27 0h2m1 0h2m7 0h2m19 0h2m9 0h1m2 0h1m42 0h2m15 0h1m8 0h1m18 0h2h1m11 0h1h2m6 0h1m23 0h1m17 0h1m2 0h1m2 0h1m9 0h2m10 0h2M286 187.5h1m95 0h1m11 0h1m29 0h1m6 0h2m10 0h2m3 0h1m3 0h2h1m8 0h1m6 0h2m9 0h1m27 0h2m3 0h1m11 0h1m30 0h2m63 0h1m11 0h1m6 0h2m37 0h2m45 0h1m33 0h2m18 0h1m18 0h2M277 190.5h1m95 0h1m33 0h2m30 0h1m6 0h2m7 0h2m1 0h2m1 0h2m4 0h2m12 0h1m9 0h2m15 0h1h2m3 0h1m89 0h1m5 0h1m9 0h2m3 0h1h2m9 0h1m3 0h2m93 0h1m33 0h2m25 0h2m3 0h1m2 0h1M278 193.5h2m16 0h2m51 0h1m123 0h2m7 0h2m13 0h2h1m14 0h1h2m37 0h2m3 0h1h2m34 0h2h1m8 0h1m32 0h1m3 0h2m10 0h2m28 0h2m54 0h1m21 0h2M293 196.5h2m9 0h1m23 0h1m83 0h1m6 0h2m3 0h1m14 0h1m11 0h1m2 0h1m2 0h1m3 0h2m1 0h2h1m44 0h1m86 0h1m18 0h2h1m17 0h1m48 0h2m117 0h1m8 0h1m2 0h1M278 199.5h2m24 0h1m57 0h2m58 0h2m18 0h1m2 0h1m12 0h2h1m24 0h2m25 0h2m9 0h1m2 0h1m6 0h2m33 0h1m23 0h1m26 0h1m6 0h2m25 0h2m6 0h1m30 0h2m129 0h1M289 202.5h1m21 0h2m9 0h1m3 0h2m4 0h2h1h2m72 0h1m42 0h2m10 0h2m1 0h2m1 0h2m33 0h1m20 0h1m8 0h1m5 0h1m87 0h2m49 0h2m51 0h1m44 0h1M275 205.5h2m13 0h2m9 0h1m36 0h2m7 0h2m18 0h1m45 0h2m1 0h2m30 0h1m86 0h1m11 0h1m15 0h2m1 0h2m31 0h2m1 0h2m33 0h1m3 0h2m43 0h2m27 0h1m26 0h1m5 0h1m45 0h2m24 0h1M275 208.5h2m3 0h1m161 0h1m20 0h1m189 0h2m96 0h1M308 211.5h2m1 0h2m13 0h2m25 0h2h1m36 0h2m64 0h2m165 0h1m86 0h1m6 0h2m4 0h2m76 0h2m3 0h1m11 0h1M296 214.5h2m21 0h1m140 0h1m59 0h1m18 0h2h1m62 0h1M335 217.5h2m109 0h2m67 0h2m16 0h2m22 0h2m9 0h1m41 0h1m44 0h1m8 0h1"/>
<path stroke="#1a00ff" stroke-width="2" d="M287 71h2m6 0h1m18 0h2h1m9 0h2m1 0h2m4 0h2m16 0h2h1m18 0h2m27 0h1m150 0h2m61 0h2m13 0h2m22 0h2m3 0h1M278 73h2m25 0h2m3 0h1m3 0h2m1 0h2m16 0h2m13 0h2m36 0h1m213 0h2m16 0h2m102 0h1h2M278 75h2m3 0h1m5 0h1m2 0h1m9 0h2m16 0h2m22 0h2m9 0h1m9 0h2m187 0h2m46 0h2m7 0h2m19 0h2m3 0h1m9 0h2m18 0h1m29 0h1m5 0h1M283 77h1m5 0h1m5 0h1m2 0h1m8 0h1m15 0h2m15 0h1m3 0h2m10 0h2m12 0h1m3 0h2m1 0h2m237 0h1m6 0h2m12 0h1m12 0h2m48 0h1M277 79h1m2 0h1m18 0h2m3 0h1m33 0h2m16 0h2m175 0h2m111 0h1m8 0h1m32 0h1m8 0h1m18 0h2m15 0h1m54 0h2M301 81h1h2m34 0h2m13 0h2m280 0h2m6 0h1m9 0h2m30 0h1h2M292 83h1m6 0h2h1m59 0h1m272 0h1h2m4 0h2m1 0h2m19 0h2m1 0h2m10 0h2m21 0h1m35 0h1m83 0h1M277 85h1m2 0h1m14 0h1m6 0h2m36 0h1m9 0h2m292 0h2m4 0h2m4 0h2m61 0h2M281 87h2m1 0h2m4 0h2m12 0h1m2 0h1m45 0h2m1 0h2m12 0h1m20 0h1m252 0h2m9 0h1m6 0h2m1 0h2m37 0h2m4 0h2m37 0h2m28 0h2M280 89h1m15 0h2m4 0h2m3 0h1m69 0h2m16 0h2m267 0h1m14 0h1m9 0h2m1 0h2m21 0h1m2 0h1m27 0h2m60 0h1M277 91h1h2m12 0h1m2 0h1m5 0h1h2m1 0h2m45 0h1m21 0h2m1 0h2m259 0h2h1m5 0h1m3 0h2m3 0h1m9 0h2m6 0h1m5 0h1m6 0h2m3 0h1m5 0h1m20 0h1m27 0h2m49 0h2M275 93h2m3 0h1h2m10 0h2m3 0h1m3 0h2m51 0h1h2m288 0h1m2 0h1m11 0h1m6 0h2m10 0h2h1m26 0h1m23 0h1m66 0h2h1M275 95h2m4 0h2m21 0h1m45 0h2m294 0h1m3 0h2m4 0h2m3 0h1m5 0h1m14 0h1m6 0h2m39 0h1m15 0h2h1m44 0h1M299 97h2m3 0h1m2 0h1m77 0h1m270 0h2m6 0h1m5 0h1m3 0h2m1 0h2m10 0h2m27 0h1m9 0h2m12 0h1m6 0h2m66 0h1M289 99h1m2 0h1m3 0h2m4 0h2m46 0h2m292 0h2m24 0h1m3 0h2m3 0h1h2h1m6 0h2m1 0h2m9 0h1h2h1m21 0h2m3 0h1m3 0h2m48 0h1h2m9 0h1m3 0h2m7 0h2m1 0h2h1m3 0h2M278 101h2m9 0h1m9 0h2h1m50 0h1m15 0h2m279 0h1h2m9 0h1m2 0h1m8 0h1m5 0h1h2m1 0h2h1m24 0h2m3 0h1m2 0h1m9 0h2h1h2h1h2m1 0h2m10 0h2m19 0h2h1h2m22 0h2m18 0h1h2m1 0h2M278 103h2m13 0h2m10 0h2m43 0h2m298 0h2h1h2m3 0h1m12 0h2m1 0h2m12 0h1m2 0h1m3 0h2m12 0h1m2 0h1m2 0h1m18 0h2m9 0h1m35 0h1m9 0h2m4 0h2m27 0h1M278 105h2m1 0h2m1 0h2m12 0h1m5 0h1h2m49 0h2m309 0h1m11 0h1m8 0h1m5 0h1h2m13 0h2m1 0h2h1m17 0h1m2 0h1m12 0h2m30 0h1M289 107h1m3 0h2m3 0h1m2 0h1m2 0h1m3 0h2m351 0h1m5 0h1m5 0h1m2 0h1h2m7 0h2m3 0h1h2m21 0h1m60 0h2h1m42 0h2M292 109h1m6 0h2m1 0h2m52 0h2m319 0h2m21 0h1m5 0h1m2 0h1m2 0h1h2m10 0h2m46 0h2M280 111h1m21 0h2m364 0h2m6 0h1m11 0h1m9 0h2m1 0h2m4 0h2m6 0h1m57 0h2M275 113h2h1h2m18 0h1m51 0h2h1m317 0h1m3 0h2m4 0h2m16 0h2m7 0h2m72 0h1h2M278 115h2h1h2m6 0h1m9 0h2m1 0h2m87 0h1m3 0h2m301 0h2m73 0h2M275 117h2h1m2 0h1m9 0h2m7 0h2m3 0h1m357 0h2m31 0h2m81 0h1h2M299 119h2m3 0h1m51 0h2m336 0h1m87 0h2M289 121h1m2 0h1m3 0h2m6 0h1h2m43 0h2M275 123h2h1h2m7 0h2h1m3 0h2m9 0h1h2h1m44 0h1h2m421 0h2h1m2 0h1M275 125h2m1 0h2m3 0h1m3 0h2m3 0h1m8 0h1m467 0h1m6 0h2h1M287 127h2h1m5 0h1m470 0h1m6 0h2m7 0h2M287 129h2m15 0h1m131 0h1m341 0h1h2M286 131h1m11 0h1m468 0h2m10 0h2M304 133h1M778 135h1M476 137h2m303 0h1h2M554 139h2m201 0h1m2 0h1m12 0h2M479 141h2m3 0h1m3 0h2m46 0h2m3 0h1m224 0h1m2 0h1m3 0h2M475 143h1m8 0h1m5 0h1m8 0h1m11 0h1m270 0h2M449 145h2m22 0h2m3 0h1m3 0h2m10 0h2m18 0h1m9 0h2m9 0h1m2 0h1m5 0h1m2 0h1m39 0h2m12 0h1m165 0h2M428 147h2m18 0h1m15 0h2m3 0h1m27 0h2m27 0h1m18 0h2m13 0h2m40 0h2m10 0h2m19 0h2m129 0h1m6 0h2m1 0h2m1 0h2h1M419 149h2m7 0h2m9 0h1m2 0h1m8 0h1m3 0h2h1m12 0h2m4 0h2m3 0h1h2h1m2 0h1m8 0h1m11 0h1h2m4 0h2m3 0h1m18 0h2m46 0h2m6 0h1m164 0h1h2m3 0h1"/>
<path stroke="#1a00ff" stroke-width="3" d="M403 151.5h1m2 0h1m12 0h2m6 0h1h2m1 0h2m7 0h2m1 0h2m36 0h1m14 0h1m2 0h1m2 0h1h2m4 0h2m6 0h1m5 0h1m42 0h2m21 0h1h2m3 0h1m8 0h1m6 0h2m24 0h1m128 0h1m6 0h2m3 0h1M415 154.5h1m30 0h2m1 0h2m7 0h2m6 0h1h2m1 0h2m25 0h2m15 0h1m6 0h2m33 0h1m39 0h2h1m2 0h1h2m1 0h2m12 0h1m2 0h1m14 0h1m120 0h2m6 0h1h2M395 157.5h2m7 0h2m6 0h1m14 0h1h2h1m6 0h2m18 0h1m6 0h2m7 0h2m6 0h1h2m7 0h2m13 0h2m16 0h2m9 0h1m18 0h2m6 0h1m21 0h2m1 0h2m9 0h1m32 0h1m5 0h1m3 0h2m118 0h2m3 0h1M341 160.5h2m6 0h1m45 0h2m22 0h2m10 0h2h1h2m4 0h2m13 0h2m1 0h2m3 0h1h2m3 0h1m14 0h1m8 0h1m11 0h1m5 0h1h2m1 0h2h1m2 0h1m18 0h2m1 0h2m3 0h1m11 0h1m24 0h2m1 0h2m4 0h2m1 0h2m6 0h1m5 0h1m3 0h2h1m3 0h2m10 0h2m1 0h2m130 0h2h1m3 0h2m4 0h2M298 163.5h1m50 0h1m30 0h2m13 0h2m6 0h1m2 0h1h2m12 0h1m2 0h1m8 0h1h2m3 0h1m30 0h2m25 0h2m4 0h2m4 0h2h1m2 0h1m8 0h1m21 0h2m39 0h1h2m1 0h2h1m6 0h2m1 0h2m4 0h2m4 0h2m4 0h2m10 0h2m18 0h1h2m102 0h1m24 0h2M278 166.5h2m13 0h2m19 0h2m15 0h1m6 0h2m4 0h2m28 0h2m34 0h2m4 0h2m1 0h2m13 0h2m12 0h1m24 0h2m3 0h1m12 0h2h1m8 0h1h2m6 0h1m3 0h2m6 0h1m33 0h2m25 0h2m7 0h2m12 0h1m8 0h1m11 0h1m3 0h2m16 0h2m4 0h2m102 0h1m15 0h2h1M286 169.5h1m14 0h1m15 0h2m19 0h2m45 0h1h2m19 0h2m13 0h2h1m8 0h1m3 0h2m13 0h2h1m12 0h2m30 0h1m3 0h2h1m5 0h1m2 0h1m2 0h1m3 0h2m1 0h2m79 0h2m27 0h1m2 0h1m3 0h2m118 0h2m10 0h2m1 0h2m1 0h2h1M289 172.5h1m3 0h2m22 0h2m9 0h1m11 0h1m8 0h1m6 0h2m22 0h2m4 0h2m9 0h1m8 0h1m6 0h2h1m3 0h2m6 0h1m6 0h2m3 0h1h2m4 0h2h1m14 0h1m5 0h1m2 0h1m8 0h1m17 0h1m15 0h2m3 0h1m2 0h1m15 0h2m16 0h2m7 0h2m1 0h2m27 0h1m3 0h2m21 0h1m11 0h1m12 0h2m6 0h1m104 0h1m2 0h1m14 0h1M281 175.5h2h1m3 0h2h1m6 0h2m6 0h1m6 0h2m3 0h1m39 0h2m6 0h1m6 0h2m1 0h2m9 0h1m14 0h1m3 0h2h1m9 0h2m22 0h2m6 0h1h2m15 0h1m3 0h2m7 0h2m3 0h1m12 0h2m15 0h1m2 0h1h2m3 0h1m74 0h1h2m4 0h2m10 0h2h1h2m24 0h1m3 0h2m1 0h2m105 0h1m15 0h2M275 178.5h2m21 0h1m2 0h1h2h1m6 0h2m30 0h1m5 0h1m8 0h1m12 0h2m10 0h2m6 0h1m44 0h1m9 0h2h1m11 0h1m5 0h1m5 0h1m29 0h1m6 0h2m7 0h2m16 0h2m66 0h1h2m1 0h2m15 0h1m3 0h2m10 0h2h1m9 0h2m22 0h2m16 0h2m1 0h2m10 0h2m37 0h2h1m5 0h1m5 0h1m3 0h2m12 0h1m8 0h1m17 0h1M278 181.5h2m27 0h1m14 0h1m21 0h2h1m24 0h2m7 0h2m3 0h1m20 0h1m35 0h1m21 0h2m36 0h1m11 0h1m2 0h1m2 0h1m21 0h2m51 0h1m5 0h1m17 0h1h2m1 0h2m1 0h2m22 0h2m7 0h2m4 0h2h1m3 0h2m3 0h1m2 0h1m5 0h1m3 0h2h1m5 0h1m2 0h1h2m10 0h2m3 0h1h2m3 0h1h2m9 0h1m15 0h2h1h2m6 0h1m8 0h1m35 0h1m18 0h2M275 184.5h2m151 0h2h1h2m7 0h2m15 0h1h2m3 0h1m8 0h1m2 0h1m2 0h1m11 0h1m24 0h2m48 0h1h2m48 0h1m9 0h2m19 0h2m19 0h2m9 0h1m12 0h2m10 0h2m4 0h2m16 0h2m19 0h2m6 0h1m24 0h2M278 187.5h2m181 0h2m48 0h1m3 0h2m25 0h2m12 0h1m3 0h2m24 0h1m23 0h1m8 0h1h2m18 0h1m8 0h1m8 0h1m96 0h2M295 190.5h1m54 0h2m81 0h1m17 0h1m2 0h1m65 0h1m15 0h2m6 0h1m12 0h2m33 0h1m15 0h2m37 0h2m18 0h1m12 0h2m4 0h2m64 0h2m6 0h1M304 193.5h1m21 0h2m117 0h1m2 0h1h2m55 0h2m31 0h2m45 0h1m12 0h2m165 0h1m3 0h2M275 196.5h2m30 0h1m24 0h2m60 0h1m23 0h1m15 0h2m1 0h2m84 0h1m17 0h1m12 0h2m51 0h1m54 0h2m84 0h1m50 0h1M289 199.5h1m12 0h2m94 0h2m7 0h2m25 0h2m36 0h1m33 0h2m33 0h1h2m10 0h2m1 0h2m63 0h1m17 0h1m41 0h1m48 0h2m15 0h1M337 202.5h1m8 0h1m41 0h1m15 0h2m1 0h2m3 0h1h2m16 0h2m12 0h1m2 0h1m12 0h2m40 0h2m37 0h2m19 0h2m72 0h1m33 0h2m13 0h2M311 205.5h2m1 0h2m187 0h2m7 0h2m22 0h2m1 0h2h1m51 0h2m33 0h1M278 208.5h2m6 0h1m20 0h1m108 0h2m9 0h1m23 0h1m54 0h2m10 0h2m13 0h2m24 0h1h2m121 0h2m1 0h2M280 211.5h1m38 0h1m102 0h2m112 0h2m21 0h1m206 0h1M304 214.5h1m17 0h1m93 0h2m40 0h2m48 0h1h2m22 0h2M379 217.5h1m8 0h1m99 0h2m45 0h1m83 0h1m3 0h2m99 0h1"/>
<path stroke="#0000ff" stroke-width="2" d="M281 71h2m13 0h2m12 0h1m6 0h2m3 0h1h2m12 0h1m5 0h1h2m1 0h2m3 0h1m23 0h1m6 0h2m16 0h2m18 0h1m6 0h2m112 0h2m1 0h2m18 0h1m2 0h1m18 0h2m10 0h2m6 0h1M289 73h1m30 0h2m9 0h1m6 0h2m1 0h2m3 0h1m6 0h2m1 0h2m37 0h2m15 0h1m15 0h2m115 0h2m7 0h2m39 0h1m12 0h2h1h2m18 0h1m5 0h1m39 0h2M295 75h1m11 0h1m14 0h1m2 0h1m12 0h2m1 0h2m13 0h2m16 0h2m13 0h2h1m141 0h2m4 0h2m4 0h2m57 0h1m18 0h2h1m2 0h1m5 0h1m143 0h1M278 77h2m19 0h2m1 0h2m13 0h2m31 0h2m66 0h1m191 0h1m14 0h1h2h1m5 0h1m23 0h1M316 79h1m5 0h1m8 0h1m104 0h1m99 0h2m7 0h2m66 0h1m3 0h2m6 0h1m5 0h1m5 0h1h2h1h2m1 0h2m85 0h2m90 0h1M292 81h1m2 0h1m21 0h2m25 0h2m9 0h1m27 0h2m6 0h1m8 0h1m227 0h1m167 0h1M313 83h1m38 0h1m6 0h2m18 0h1m6 0h2m7 0h2m39 0h1m212 0h1m68 0h1m14 0h1M283 85h1m5 0h1m8 0h1m5 0h1h2m10 0h2m55 0h2m264 0h1m5 0h1h2m3 0h1m36 0h2m25 0h2m85 0h2m15 0h1M278 87h2m13 0h2h1m56 0h1m9 0h2m12 0h1h2m4 0h2m12 0h1m236 0h1h2m6 0h1m27 0h2m3 0h1m3 0h2M278 89h2m9 0h1m2 0h1m63 0h2m283 0h2m15 0h1m2 0h1m15 0h2m12 0h1m12 0h2m24 0h1m5 0h1m5 0h1m74 0h1M290 91h2m15 0h1m48 0h2m279 0h1m65 0h1m6 0h2m108 0h1M286 93h1m66 0h2m13 0h2h1m272 0h1m6 0h2m4 0h2m58 0h2m21 0h1m8 0h1m2 0h1m68 0h1M290 95h2m16 0h2m46 0h2m283 0h2m22 0h2m4 0h2m7 0h2m24 0h1m29 0h1m12 0h2m3 0h1m33 0h2m4 0h2m3 0h1h2M292 97h1h2h1m66 0h2m31 0h2m264 0h1m18 0h2m3 0h1m2 0h1m41 0h1m14 0h1h2h1m63 0h2m4 0h2m7 0h2M277 99h1m15 0h2m91 0h2m7 0h2m258 0h1h2m9 0h1m17 0h1m5 0h1m17 0h1m5 0h1m3 0h2m10 0h2m18 0h1m71 0h1M275 101h2h1m3 0h2m9 0h1m57 0h2m1 0h2h1m33 0h2m249 0h1m15 0h2m45 0h1h2m49 0h2m30 0h1m20 0h1m3 0h2M290 103h2h1m62 0h1h2m7 0h2m7 0h2m271 0h2m19 0h2m10 0h2h1m2 0h1m14 0h1h2m1 0h2h1m15 0h2h1h2m16 0h2m1 0h2h1h2m18 0h1m2 0h1m11 0h1m11 0h1m9 0h2m7 0h2m1 0h2m1 0h2M295 105h1m6 0h2m49 0h2m36 0h1m3 0h2m252 0h1m18 0h2m12 0h1h2m22 0h2h1m9 0h2m13 0h2m1 0h2m6 0h1m33 0h2m4 0h2m6 0h1m8 0h1m2 0h1m2 0h1M280 107h1m9 0h2m15 0h1m42 0h2m1 0h2m22 0h2m291 0h1m8 0h1m2 0h1m26 0h1m8 0h1h2m15 0h1m2 0h1M296 109h2m10 0h2m54 0h1m296 0h1m6 0h2h1m9 0h2m9 0h1h2h1h2m10 0h2m9 0h1m17 0h1m39 0h2M290 111h2h1m6 0h2m3 0h1m2 0h1m48 0h2m4 0h2m297 0h1m9 0h2m4 0h2m4 0h2m4 0h2m13 0h2m10 0h2m51 0h1M283 113h1m15 0h2m55 0h2m318 0h1h2h1m2 0h1h2h1m39 0h2M295 115h1m11 0h1m47 0h1m303 0h2m1 0h2h1m3 0h2m3 0h1m2 0h1m18 0h2m3 0h1m42 0h2m37 0h2M278 117h2m12 0h1m59 0h1m3 0h2m4 0h2m31 0h2m301 0h2m63 0h1m9 0h2M275 119h2h1m9 0h2m3 0h1m14 0h1m42 0h2m324 0h1m96 0h2m1 0h2M275 121h2h1m3 0h2m25 0h2m42 0h1m2 0h1M295 123h1m6 0h2m51 0h1m80 0h1m336 0h2h1m3 0h2m1 0h2M280 125h1m18 0h2m49 0h2m427 0h2M278 127h2m3 0h1m9 0h2m477 0h1M283 129h1h2m4 0h2m1 0h2m1 0h2h1m458 0h1m15 0h2M275 131h2h1m14 0h1m476 0h1m6 0h2M301 133h1m177 0h2m288 0h1M286 135h1m239 0h1m9 0h2m16 0h2m213 0h1m3 0h2m6 0h1M395 137h2m144 0h1m3 0h2m231 0h1h2M476 139h2m9 0h1m281 0h1m5 0h1m6 0h2M457 141h1m17 0h1m18 0h2m28 0h2m19 0h2m7 0h2m220 0h2m4 0h2M445 143h1m3 0h2m25 0h2m25 0h2m7 0h2m25 0h2m22 0h2m37 0h2m159 0h1M428 145h2m9 0h1m5 0h1m11 0h1m18 0h2m1 0h2m4 0h2m1 0h2h1m71 0h1m2 0h1m2 0h1m42 0h2h1m143 0h1h2m13 0h2m1 0h2m1 0h2M433 147h1m11 0h1m5 0h1h2m3 0h1h2m6 0h1h2m21 0h1m5 0h1m5 0h1h2m3 0h1h2m10 0h2m18 0h1m47 0h1m35 0h1m8 0h1m11 0h1M403 149h1m9 0h2m6 0h1m15 0h2m22 0h2m6 0h1m15 0h2m1 0h2m3 0h1m17 0h1m5 0h1m26 0h1m20 0h1m39 0h2m1 0h2m1 0h2m1 0h2h1"/>
<path stroke="#0000ff" stroke-width="3" d="M404 151.5h2m4 0h2h1m3 0h2h1m15 0h2m15 0h1h2h1m5 0h1m2 0h1m3 0h2m3 0h1m21 0h2m1 0h2m21 0h1m20 0h1h2m58 0h2m4 0h2m9 0h1m12 0h2h1m11 0h1m2 0h1m5 0h1m101 0h1m2 0h1h2m6 0h1M401 154.5h2h1h2h1m14 0h1h2m1 0h2h1m9 0h2h1h2m3 0h1m11 0h1m14 0h1m2 0h1m5 0h1m2 0h1m8 0h1m8 0h1m2 0h1m3 0h2m4 0h2m6 0h1m30 0h2m7 0h2m19 0h2m1 0h2m1 0h2m3 0h1m11 0h1h2m3 0h1m3 0h2m7 0h2h1m11 0h1m2 0h1m8 0h1m2 0h1m2 0h1m104 0h1m5 0h1m8 0h1M383 157.5h2m16 0h2m6 0h1m5 0h1m3 0h2m18 0h1m48 0h2m10 0h2m12 0h1m8 0h1m45 0h2m15 0h1m8 0h1h2m7 0h2h1m11 0h1h2m1 0h2h1m6 0h2h1m8 0h1m113 0h1m20 0h1h2h1M406 160.5h1m5 0h1h2h1m9 0h2m22 0h2m19 0h2m19 0h2m4 0h2h1m95 0h1m9 0h2m21 0h1m12 0h2m3 0h1m2 0h1m110 0h1h2m15 0h1m2 0h1M299 163.5h2m16 0h2m19 0h2m1 0h2m3 0h1m23 0h1h2m24 0h1m6 0h2m3 0h1m30 0h2m1 0h2m15 0h1m3 0h2h1m24 0h2h1m2 0h1m18 0h2m25 0h2m24 0h1m27 0h2m6 0h1m20 0h1m2 0h1h2m6 0h1m2 0h1m119 0h1M323 166.5h2m3 0h1h2m9 0h1m8 0h1m2 0h1m14 0h1m8 0h1m6 0h2m7 0h2m6 0h1m5 0h1m17 0h1m30 0h2h1m51 0h2m9 0h1m21 0h2m1 0h2m12 0h1m65 0h1h2m27 0h1m105 0h2m16 0h2M278 169.5h2m3 0h1h2m10 0h2m4 0h2m22 0h2m1 0h2h1h2m15 0h1m2 0h1m17 0h1m6 0h2m4 0h2m4 0h2h1m3 0h2m1 0h2m34 0h2m7 0h2h1m9 0h2m3 0h1m102 0h2m21 0h1m8 0h1m8 0h1m12 0h2m9 0h1m2 0h1m3 0h2m16 0h2m1 0h2m109 0h2m6 0h1M275 172.5h2h1m3 0h2m28 0h2h1m6 0h2m1 0h2h1m3 0h2m7 0h2m6 0h1m8 0h1m11 0h1m11 0h1m2 0h1h2h1m2 0h1m3 0h2m4 0h2h1m6 0h2m12 0h1m27 0h2m3 0h1m5 0h1m42 0h2m16 0h2m18 0h1m23 0h1m75 0h2m129 0h1m2 0h1M280 175.5h1m3 0h2m7 0h2m6 0h1m3 0h2m3 0h1m11 0h1m2 0h1m2 0h1m8 0h1m3 0h2h1m3 0h2h1h2m10 0h2m1 0h2m1 0h2h1m2 0h1m2 0h1m17 0h1m12 0h2m22 0h2m6 0h1m18 0h2h1m74 0h1m21 0h2m3 0h1m78 0h2m120 0h1m2 0h1m5 0h1m6 0h2m9 0h1M290 178.5h2m15 0h1m39 0h2m15 0h1m11 0h1m3 0h2h1m12 0h2m3 0h1m33 0h2m4 0h2m3 0h1m35 0h1m39 0h2h1m44 0h1m44 0h1m6 0h2m12 0h1m3 0h2m6 0h1m20 0h1m3 0h2m1 0h2m13 0h2m16 0h2m22 0h2m3 0h1m47 0h1m42 0h2M302 181.5h2m57 0h1m2 0h1m83 0h1m9 0h2m7 0h2m22 0h2m22 0h2m4 0h2m36 0h1h2m4 0h2m31 0h2m37 0h2m6 0h1m14 0h1h2m18 0h1m5 0h1m18 0h2m3 0h1m8 0h1h2m10 0h2m3 0h1m11 0h1m14 0h1m3 0h2m16 0h2m4 0h2m6 0h1m15 0h2m6 0h1M307 184.5h1m72 0h2m25 0h2m3 0h1m36 0h2m15 0h1m36 0h2h1h2m46 0h2m6 0h1m30 0h2m6 0h1m30 0h2m7 0h2m7 0h2m9 0h1m47 0h1m8 0h1m15 0h2m48 0h1m3 0h2m24 0h1M280 187.5h1m138 0h2m13 0h2m10 0h2m12 0h1m18 0h2m78 0h1m6 0h2m48 0h1m21 0h2m156 0h1M332 190.5h2h1m84 0h2m3 0h1m38 0h1h2m45 0h1m5 0h1m27 0h2m54 0h1m3 0h2m120 0h1m60 0h2M322 193.5h1m99 0h2m36 0h1m3 0h2m28 0h2m4 0h2m54 0h1m11 0h1m56 0h1M311 196.5h2m24 0h1m102 0h2m3 0h1m60 0h2m30 0h1m3 0h2m15 0h1m2 0h1m63 0h2m1 0h2m52 0h2m18 0h1M341 199.5h2m63 0h1m152 0h1h2m3 0h1m3 0h2M278 202.5h2m144 0h1m5 0h1m105 0h2m27 0h1m44 0h1m78 0h2M433 205.5h1m77 0h1m30 0h2M281 208.5h2h1m150 0h2m100 0h2m4 0h2m1 0h2m16 0h2m3 0h1m194 0h1M352 211.5h1m128 0h1m78 0h2m48 0h1m99 0h2M280 214.5h1m159 0h2m93 0h1m33 0h2M538 217.5h1m20 0h1"/>
<path stroke="#0033ff" stroke-width="2" d="M280 71h1m32 0h1m35 0h1m11 0h1h2m4 0h2m7 0h2m6 0h1m9 0h2m7 0h2m7 0h2m3 0h1m5 0h1m2 0h1m3 0h2m103 0h2m3 0h1m18 0h2m1 0h2m1 0h2m30 0h1m48 0h2M307 73h1m5 0h1m9 0h2h1h2h1h2m3 0h1m5 0h1m2 0h1m24 0h2h1m21 0h2m6 0h1h2m15 0h1m6 0h2m6 0h1m53 0h1m51 0h2m16 0h2m6 0h1h2m36 0h1m24 0h2m10 0h2M277 75h1m2 0h1m35 0h1m6 0h2m6 0h1m8 0h1m2 0h1m38 0h1m9 0h2m3 0h1m17 0h1m2 0h1m14 0h1m102 0h2m9 0h1m15 0h2m1 0h2m37 0h2m1 0h2m10 0h2m177 0h1M308 77h2h1m5 0h1m17 0h1m6 0h2m3 0h1m14 0h1h2m12 0h1m8 0h1m3 0h2m4 0h2m144 0h1m24 0h2m1 0h2m40 0h2m6 0h1m9 0h2m1 0h2m12 0h1m8 0h1M275 79h2m28 0h2m1 0h2m10 0h2m1 0h2h1m2 0h1h2m1 0h2m3 0h1m3 0h2m16 0h2m1 0h2m3 0h1m2 0h1h2m1 0h2m1 0h2m184 0h2m49 0h2m6 0h1m5 0h1m125 0h1m41 0h1M308 81h2m13 0h2m3 0h1m11 0h1h2m6 0h1h2m18 0h1m5 0h1m3 0h2m7 0h2m1 0h2m1 0h2m228 0h1m20 0h1m48 0h2M329 83h2m7 0h2h1m24 0h2h1h2m6 0h1h2m6 0h1m5 0h1h2m3 0h1h2h1m224 0h1m11 0h1h2m13 0h2m16 0h2M307 85h1m30 0h2m1 0h2m19 0h2m4 0h2h1m6 0h2m4 0h2m1 0h2m1 0h2m246 0h1m3 0h2m15 0h1M277 87h1m36 0h2m49 0h2m7 0h2m10 0h2m7 0h2m243 0h1M275 89h2m6 0h1m39 0h2m3 0h1h2m10 0h2m7 0h2h1m21 0h2m7 0h2m51 0h1m195 0h2m90 0h1M298 91h1m39 0h2m10 0h2m1 0h2m4 0h2m1 0h2m1 0h2m16 0h2m6 0h1m3 0h2h1m38 0h1m197 0h1h2M289 93h1m17 0h1h2m55 0h2m7 0h2h1m6 0h2m3 0h1m266 0h1m41 0h1M338 95h2m13 0h2m19 0h2m1 0h2m16 0h2m241 0h2m7 0h2m19 0h2m7 0h2m4 0h2m132 0h1M275 97h2m31 0h2m45 0h1m15 0h2m1 0h2m7 0h2m255 0h1m3 0h2m13 0h2m51 0h1m21 0h2m16 0h2m49 0h2M280 99h1m80 0h1h2m10 0h2m1 0h2m1 0h2m16 0h2m246 0h1h2m4 0h2m66 0h1m23 0h1h2m4 0h2h1h2m25 0h2m16 0h2M305 101h2m49 0h2m3 0h1m12 0h2m277 0h2m16 0h2m4 0h2m7 0h2m1 0h2m18 0h1m44 0h1m20 0h1m15 0h2m6 0h1h2h1m2 0h1M302 103h2m48 0h1m5 0h1m24 0h2m51 0h1m207 0h2m10 0h2m19 0h2m13 0h2m13 0h2m9 0h1m8 0h1m11 0h1m2 0h1m8 0h1m23 0h1m6 0h2m6 0h1m9 0h2h1m2 0h1m3 0h2h1m5 0h1m5 0h1m3 0h2M289 105h1m6 0h2m73 0h2m6 0h1m272 0h1m3 0h2m12 0h1m5 0h1m3 0h2m4 0h2m3 0h1m26 0h1m3 0h2h1m2 0h1h2m10 0h2m1 0h2m3 0h1m33 0h2h1m5 0h1h2m16 0h2m1 0h2m10 0h2m1 0h2M296 107h2m57 0h1m12 0h2m25 0h2m274 0h2m7 0h2m6 0h1h2m3 0h1m2 0h1m6 0h2m6 0h1m12 0h2m22 0h2m31 0h2h1m21 0h2M277 109h1h2m73 0h2m25 0h2m15 0h1m38 0h1m234 0h2m6 0h1m6 0h2m1 0h2m6 0h1m3 0h2m18 0h1h2m6 0h1m6 0h2h1m35 0h1m3 0h2m1 0h2m42 0h1M278 111h2m28 0h2m63 0h1m285 0h2m19 0h2h1m2 0h1m6 0h2m1 0h2m3 0h1m5 0h1m14 0h1m3 0h2m66 0h1M289 113h1h2h1m60 0h2h1m8 0h1m9 0h2m1 0h2m309 0h1m8 0h1m2 0h1m12 0h2m12 0h1m47 0h1m2 0h1M353 115h2m1 0h2m18 0h1m284 0h1m3 0h2m16 0h2m3 0h1m2 0h1m14 0h1m8 0h1m21 0h2h1m38 0h1h2M305 117h2m1 0h2m43 0h2h1m21 0h2m285 0h1m11 0h1m12 0h2m1 0h2m12 0h1h2m7 0h2m57 0h1M278 119h2m3 0h1m14 0h1m9 0h2m42 0h1h2m28 0h2m286 0h2m10 0h2h1m6 0h2m1 0h2m1 0h2m36 0h1M307 121h1m45 0h2m10 0h2m16 0h2m280 0h2m28 0h2m40 0h2m39 0h1h2M281 123h2m18 0h1m72 0h2m15 0h1m3 0h2m393 0h1M307 125h1m92 0h1m35 0h1h2M277 127h1m3 0h2m7 0h2m10 0h2m4 0h2m46 0h2m12 0h1m6 0h2m399 0h1h2M277 129h1h2h1h2m12 0h1m3 0h2m6 0h1h2m57 0h1m23 0h1m6 0h2m375 0h1m6 0h2M283 131h1m5 0h1h2m9 0h1m2 0h1m2 0h1m237 0h2m235 0h2M284 133h2m3 0h1m5 0h1m68 0h1m410 0h1m3 0h2M277 135h1m23 0h1m93 0h2m60 0h1m77 0h1M286 137h1m14 0h1m149 0h1m12 0h2m28 0h2m58 0h2m58 0h2m153 0h1M484 139h1m14 0h1m17 0h1m18 0h2m7 0h2m54 0h1m11 0h1h2m147 0h1m17 0h1M461 141h2m10 0h2m3 0h1m30 0h2m48 0h1m5 0h1h2m22 0h2m9 0h1h2m10 0h2m159 0h1m3 0h2M289 143h1m105 0h2m58 0h2m4 0h2m1 0h2m4 0h2m6 0h1m8 0h1m6 0h2m1 0h2m1 0h2m4 0h2h1m17 0h1m33 0h2m24 0h1h2h1m14 0h1m8 0h1h2m157 0h2m3 0h1M286 145h1m108 0h2m18 0h1m20 0h1m11 0h1m12 0h2h1m17 0h1m2 0h1m2 0h1m5 0h1m6 0h2m18 0h1m5 0h1m14 0h1m3 0h2m42 0h1m18 0h2h1m3 0h2m1 0h2m12 0h1m14 0h1m2 0h1M338 147h2h1m71 0h1m5 0h1m5 0h1m12 0h2m7 0h2m13 0h2m30 0h1h2m10 0h2m3 0h1h2m9 0h1m38 0h1m23 0h1m3 0h2m1 0h2m3 0h1m5 0h1m6 0h2h1m2 0h1m32 0h1m2 0h1m125 0h1m3 0h2M404 149h2m3 0h1h2m10 0h2m1 0h2m4 0h2m15 0h1m9 0h2m3 0h1h2h1m8 0h1m15 0h2m6 0h1m2 0h1m3 0h2m6 0h1m41 0h1m2 0h1m24 0h2h1m3 0h2h1m6 0h2h1m2 0h1m5 0h1m6 0h2m4 0h2m6 0h1m6 0h2h1m8 0h1h2m127 0h2m1 0h2"/>
<path stroke="#0033ff" stroke-width="3" d="M374 151.5h2m33 0h1m12 0h2m6 0h1m2 0h1m8 0h1m6 0h2m10 0h2m3 0h1m3 0h2m13 0h2m18 0h1h2m3 0h1m74 0h1h2m7 0h2h1h2m6 0h1m6 0h2m1 0h2m19 0h2m4 0h2m6 0h1m5 0h1m104 0h1m3 0h2m10 0h2M313 154.5h1m3 0h2m22 0h2m67 0h2m4 0h2m13 0h2m1 0h2m7 0h2m16 0h2m1 0h2m25 0h2m3 0h1m21 0h2m16 0h2h1m2 0h1m5 0h1m9 0h2h1h2m30 0h1m11 0h1m15 0h2m1 0h2h1m12 0h2m4 0h2h1m3 0h2m4 0h2m102 0h1m12 0h2m7 0h2M314 157.5h2m7 0h2m10 0h2m27 0h1m42 0h2m1 0h2m4 0h2m6 0h1m21 0h2h1m11 0h1m6 0h2m36 0h1m5 0h1m30 0h2m1 0h2m10 0h2h1m33 0h2m9 0h1m24 0h2m4 0h2m3 0h1m3 0h2h1m9 0h2M328 160.5h1m2 0h1m18 0h2m3 0h1m30 0h2m22 0h2m4 0h2m4 0h2m6 0h1m6 0h2m7 0h2m6 0h1m5 0h1h2m25 0h2m6 0h1m9 0h2m1 0h2m10 0h2m15 0h1m15 0h2m51 0h1m14 0h1h2m157 0h2M284 163.5h2m1 0h2m4 0h2m1 0h2m28 0h2h1h2m6 0h1m2 0h1m6 0h2m16 0h2m7 0h2h1m23 0h1m45 0h2m115 0h2m42 0h1m11 0h1m2 0h1m15 0h2m3 0h1m3 0h2m7 0h2m108 0h1m2 0h1m36 0h2M281 166.5h2h1m3 0h2m1 0h2m6 0h1m12 0h2h1m2 0h1m3 0h2m4 0h2m18 0h1m3 0h2m4 0h2h1m5 0h1m5 0h1m6 0h2m3 0h1m8 0h1m21 0h2h1m15 0h2h1m36 0h2m67 0h2m90 0h1m2 0h1h2m9 0h1m6 0h2m103 0h2m3 0h1m9 0h2M280 169.5h1m6 0h2h1m3 0h2m13 0h2m4 0h2h1m2 0h1h2m1 0h2h1m2 0h1m5 0h1m11 0h1h2m6 0h1h2m1 0h2m7 0h2m4 0h2m16 0h2m6 0h1m57 0h2m1 0h2m72 0h1h2m28 0h2m195 0h1m18 0h2M301 172.5h1m2 0h1m5 0h1m3 0h2m3 0h1m11 0h1m3 0h2m4 0h2m15 0h1m3 0h2h1h2m1 0h2h1m5 0h1h2m135 0h1m3 0h2m16 0h2m69 0h1m11 0h1m3 0h2m3 0h1m15 0h2m10 0h2m109 0h2m4 0h2m4 0h2M275 175.5h2m18 0h1m24 0h2m4 0h2m4 0h2m1 0h2m15 0h1m5 0h1m8 0h1m11 0h1m3 0h2m1 0h2m1 0h2h1m5 0h1m26 0h1m21 0h2m4 0h2m13 0h2m22 0h2m19 0h2m82 0h2m9 0h1m2 0h1m15 0h2m12 0h1m54 0h2m81 0h1m2 0h1M335 178.5h2m24 0h1m17 0h1m8 0h1h2m33 0h1m30 0h2m7 0h2m73 0h2m15 0h1m6 0h2m1 0h2m1 0h2m55 0h2m45 0h1m5 0h1m8 0h1m2 0h1h2m6 0h1h2m1 0h2h1m5 0h1h2m3 0h1m9 0h2h1m15 0h2h1m12 0h2m6 0h1m9 0h2m4 0h2h1m15 0h2m1 0h2M382 181.5h1m5 0h1m18 0h2m4 0h2m118 0h2h1m3 0h2m3 0h1m128 0h1m3 0h2m15 0h1m32 0h1m2 0h1m2 0h1m6 0h2m42 0h1m6 0h2m4 0h2m6 0h1m5 0h1M319 184.5h1m117 0h2m3 0h1m104 0h1m12 0h2m7 0h2m66 0h1m134 0h1M467 187.5h2m7 0h2m45 0h1m11 0h1m32 0h1m38 0h1m35 0h1m42 0h2m21 0h1M565 190.5h1h2m228 0h1M557 193.5h2M347 196.5h2m60 0h1m135 0h2m9 0h1h2m1 0h2m7 0h2M511 199.5h1m44 0h1M557 202.5h2m7 0h2M293 205.5h2m37 0h2m138 0h1m92 0h1M410 208.5h2m123 0h1m30 0h2m205 0h2M470 211.5h2m66 0h1m6 0h2m19 0h2m100 0h2m46 0h2M467 214.5h2m91 0h2M319 217.5h1m222 0h2m3 0h1"/>
<path stroke="#0066ff" stroke-width="2" d="M319 71h1m5 0h1m5 0h1m14 0h1m9 0h2m7 0h2m3 0h1m2 0h1m5 0h1m9 0h2h1m5 0h1m2 0h1m11 0h1m3 0h2m7 0h2m6 0h1m59 0h1m8 0h1m9 0h2m6 0h1m3 0h2h1m8 0h1m11 0h1m41 0h1m3 0h2m7 0h2m1 0h2m192 0h1M316 73h1m15 0h2m3 0h1m6 0h2m12 0h1h2m4 0h2m9 0h1m2 0h1m6 0h2m9 0h1m5 0h1m26 0h1m69 0h2m24 0h1m6 0h2m1 0h2m6 0h1m18 0h2m22 0h2h1m8 0h1m2 0h1m3 0h2h1m8 0h1m8 0h1m2 0h1M310 75h1m2 0h1h2m10 0h2h1m5 0h1m12 0h2h1m8 0h1m2 0h1m6 0h2m1 0h2h1m2 0h1m8 0h1h2m13 0h2m10 0h2m1 0h2m3 0h1m3 0h2m3 0h1m54 0h2m48 0h1m2 0h1m3 0h2m21 0h1m2 0h1m32 0h1m24 0h2m1 0h2M314 77h2m3 0h1h2h1m6 0h2m6 0h1h2m9 0h1m3 0h2m3 0h1h2m22 0h2m12 0h1h2m12 0h1m80 0h1m51 0h2m54 0h1h2m16 0h2h1m17 0h1M307 79h1m18 0h2m12 0h1m2 0h1h2h1m14 0h1m3 0h2m9 0h1m2 0h1m3 0h2h1h2m3 0h1m143 0h1m2 0h1m2 0h1h2m13 0h2h1m8 0h1m42 0h2m16 0h2M277 81h1m35 0h1m12 0h2m4 0h2m30 0h1h2m7 0h2m1 0h2m7 0h2h1m9 0h2m136 0h2m7 0h2h1m6 0h2m57 0h1m3 0h2m13 0h2m4 0h2m1 0h2M296 83h2m19 0h2m6 0h1h2h1m2 0h1m3 0h2m4 0h2h1m2 0h1m2 0h1h2m1 0h2m3 0h1m3 0h2m7 0h2m7 0h2m1 0h2m3 0h1m251 0h1m2 0h1M329 85h2h1m14 0h1m12 0h2h1m2 0h1m2 0h1m8 0h1m3 0h2m9 0h1m5 0h1h2m231 0h1m11 0h1M275 87h2m3 0h1m36 0h2m10 0h2m9 0h1h2m15 0h1h2m18 0h1m9 0h2m45 0h1m201 0h2m19 0h2M308 89h2m3 0h1m3 0h2m19 0h2m15 0h1m6 0h2m1 0h2h1m11 0h1h2h1m2 0h1m2 0h1m8 0h1m249 0h2M313 91h1m9 0h2m16 0h2m21 0h1m5 0h1h2m3 0h1m3 0h2m4 0h2m10 0h2h1m230 0h1m11 0h1M296 93h2m61 0h2m1 0h2h1m6 0h2m4 0h2h1m18 0h2m25 0h2m9 0h1m198 0h2m3 0h1m3 0h2M296 95h2m42 0h1h2m9 0h1m5 0h1m6 0h2m3 0h1m2 0h1m11 0h1m5 0h1h2h1m3 0h2m25 0h2m207 0h1m9 0h2m3 0h1m9 0h2m42 0h1M353 97h2m4 0h2h1m8 0h1m5 0h1h2m7 0h2m3 0h1m5 0h1m245 0h1m2 0h1m3 0h2m1 0h2h1m132 0h2M278 99h2m28 0h2m28 0h2m13 0h2m4 0h2m6 0h1m5 0h1m9 0h2m256 0h2m7 0h2M280 101h1m26 0h1m20 0h1m9 0h2m31 0h2h1m6 0h2m1 0h2m10 0h2h1m236 0h1m8 0h1h2m1 0h2m33 0h1m36 0h2m4 0h2m12 0h1m11 0h1m44 0h1m14 0h1M296 103h2m10 0h2m3 0h1m48 0h2m15 0h1m9 0h2m4 0h2m243 0h1m5 0h1m8 0h1m23 0h1m17 0h1m5 0h1m12 0h2m1 0h2m7 0h2m10 0h2m12 0h1m32 0h1m6 0h2m3 0h1m12 0h2h1m9 0h2M350 105h2m7 0h2m9 0h1m3 0h2h1h2m1 0h2m1 0h2m4 0h2m45 0h1m207 0h2m1 0h2m1 0h2m6 0h1m2 0h1m42 0h2h1m23 0h1m8 0h1m54 0h2m1 0h2m1 0h2m1 0h2m9 0h1h2M299 107h2m37 0h2m22 0h2m12 0h1m6 0h2m4 0h2m261 0h1m5 0h1m15 0h2m37 0h2m12 0h1h2h1h2m1 0h2m6 0h1m3 0h2h1m2 0h1h2m1 0h2m28 0h2m4 0h2m3 0h1m12 0h2m13 0h2M358 109h1m2 0h1h2m4 0h2m4 0h2h1m305 0h1m20 0h1h2m4 0h2m3 0h1m8 0h1m3 0h2m1 0h2m13 0h2m42 0h1m12 0h2m1 0h2m6 0h1M277 111h1m75 0h2m4 0h2h1m12 0h2m1 0h2m6 0h1m9 0h2h1m272 0h1m8 0h1m14 0h1m2 0h1m12 0h2m15 0h1m2 0h1h2m3 0h1m3 0h2m12 0h1m20 0h1m15 0h2m18 0h1m9 0h2m1 0h2h1M308 113h2m52 0h2m4 0h2h1m5 0h1m6 0h2m6 0h1m267 0h2h1m5 0h1m23 0h1m9 0h2h1h2h1m8 0h1m2 0h1m3 0h2m6 0h1m2 0h1m3 0h2h1m53 0h1M275 115h2m31 0h2m40 0h2m18 0h1m14 0h1h2m9 0h1h2m267 0h1m3 0h2m4 0h2m22 0h2m1 0h2m1 0h2m3 0h1h2m1 0h2m4 0h2m6 0h1m38 0h1m15 0h2m3 0h1m12 0h2m1 0h2m3 0h1m14 0h1M281 117h2m6 0h1m12 0h2m3 0h1m30 0h2m21 0h1m8 0h1m20 0h1m6 0h2m259 0h2h1m3 0h2m4 0h2h1h2m1 0h2m18 0h1m3 0h2m1 0h2m7 0h2m6 0h1m5 0h1m41 0h1m12 0h2m6 0h1m17 0h1M296 119h2m7 0h2m51 0h1h2m1 0h2m4 0h2m7 0h2m7 0h2m7 0h2h1m261 0h2h1h2m3 0h1m2 0h1m20 0h1m32 0h1h2m42 0h1m5 0h1m17 0h1m32 0h1M356 121h2m1 0h2m7 0h2m4 0h2m1 0h2m7 0h2m3 0h1h2m1 0h2m1 0h2h1m258 0h2m9 0h1m18 0h2m7 0h2m69 0h1m3 0h2m6 0h1m8 0h1m15 0h2M290 123h2m58 0h2m4 0h2m39 0h1m267 0h2m27 0h1m3 0h2m57 0h1m11 0h1m23 0h1M305 125h2m46 0h2h1m6 0h2m6 0h1m6 0h2m16 0h2m301 0h2m72 0h1m2 0h1m6 0h2m9 0h1M284 127h2m19 0h2m48 0h1m9 0h2m25 0h2m1 0h2m268 0h2m28 0h2M305 129h2m45 0h1m2 0h1m6 0h2m12 0h1m6 0h2m4 0h2m9 0h1m36 0h2m40 0h2M281 131h2m10 0h2m7 0h2m1 0h2m1 0h2m58 0h2m1 0h2m1 0h2h1m14 0h1m3 0h2m6 0h1m143 0h1m152 0h1m74 0h1M278 133h2h1h2m4 0h2m4 0h2m3 0h1m6 0h2m22 0h2m39 0h1m3 0h2h1h2m4 0h2m10 0h2m1 0h2m1 0h2m75 0h1m57 0h2m7 0h2m7 0h2m42 0h1m15 0h2m49 0h2M305 135h2m79 0h2m3 0h1m5 0h1m71 0h1m9 0h2m3 0h1m5 0h1m5 0h1m27 0h2m63 0h1m8 0h1m2 0h1M298 137h1m75 0h2m51 0h1m5 0h1m15 0h2m6 0h1m11 0h1m11 0h1m3 0h2h1m2 0h1m2 0h1m18 0h2m12 0h1m12 0h2m3 0h1m18 0h2m1 0h2m30 0h1m2 0h1m11 0h1m86 0h1M364 139h1m9 0h2m9 0h1m9 0h2m6 0h1m21 0h2m28 0h2m12 0h1m8 0h1h2m4 0h2m6 0h1m9 0h2m3 0h1h2m9 0h1m5 0h1m6 0h2m52 0h2m22 0h2m22 0h2m7 0h2h1m5 0h1m42 0h2m70 0h2m9 0h1M286 141h1m3 0h2m46 0h2m22 0h2m10 0h2m45 0h1m6 0h2m15 0h1h2m1 0h2m3 0h1m15 0h2m4 0h2m7 0h2m3 0h1m9 0h2m21 0h1m2 0h1m11 0h1m24 0h2m30 0h1m2 0h1m12 0h2m36 0h1M301 143h1m36 0h2h1m27 0h2m43 0h2m6 0h1m3 0h2m1 0h2m1 0h2m6 0h1m3 0h2m3 0h1m24 0h2m6 0h1m9 0h2h1m2 0h1m8 0h1m9 0h2m1 0h2m27 0h1m11 0h1m5 0h1m2 0h1m21 0h2m9 0h1m8 0h1h2m3 0h1m14 0h1m2 0h1m3 0h2M287 145h2m10 0h2m30 0h1m6 0h2m1 0h2m48 0h1m9 0h2m7 0h2m1 0h2m10 0h2m10 0h2m3 0h1m3 0h2m3 0h1m3 0h2m1 0h2m6 0h1m3 0h2h1m23 0h1m2 0h1m2 0h1m5 0h1h2m1 0h2m1 0h2h1h2m1 0h2m13 0h2m1 0h2m1 0h2m10 0h2m1 0h2h1m24 0h2m7 0h2m3 0h1m3 0h2m1 0h2m13 0h2h1m11 0h1h2m7 0h2m1 0h2m3 0h1m119 0h1M277 147h1m81 0h2m7 0h2m40 0h2m3 0h1m6 0h2m1 0h2m3 0h1h2m1 0h2h1m5 0h1m6 0h2m9 0h1m11 0h1m8 0h1m17 0h1m15 0h2m16 0h2h1h2m16 0h2h1h2m9 0h1h2m25 0h2m1 0h2m9 0h1m6 0h2m1 0h2m4 0h2m12 0h1m2 0h1h2m4 0h2M289 149h1m11 0h1m15 0h2m9 0h1m9 0h2m1 0h2m40 0h2m27 0h1m2 0h1h2m16 0h2m7 0h2m1 0h2m55 0h2h1m6 0h2m4 0h2m16 0h2m7 0h2m13 0h2h1h2m28 0h2m18 0h1m20 0h1h2h1m15 0h2h1"/>
<path stroke="#0066ff" stroke-width="3" d="M286 151.5h1m12 0h2m12 0h1h2m24 0h1m60 0h2m10 0h2h1m8 0h1m11 0h1m11 0h1m8 0h1m33 0h2m7 0h2m12 0h1m6 0h2m16 0h2m27 0h1h2m13 0h2m19 0h2m13 0h2m1 0h2h1m2 0h1m11 0h1m6 0h2m1 0h2m43 0h2m1 0h2m82 0h2M286 154.5h1m12 0h2m9 0h1m15 0h2m12 0h1m42 0h2m1 0h2m1 0h2m9 0h1m8 0h1m23 0h1m8 0h1m5 0h1m50 0h1m6 0h2m61 0h2m22 0h2m21 0h1m17 0h1m6 0h2m4 0h2m4 0h2m135 0h1m35 0h1M283 157.5h1m2 0h1h2m12 0h1m3 0h2m9 0h1m8 0h1m63 0h2m15 0h1m15 0h2m10 0h2m6 0h1m15 0h2m52 0h2m22 0h2m3 0h1m24 0h2m48 0h1m9 0h2m10 0h2m129 0h1m2 0h1h2h1M286 160.5h1h2m4 0h2m9 0h1h2m6 0h1m3 0h2m4 0h2h1m3 0h2m7 0h2h1m2 0h1m2 0h1m18 0h2m1 0h2m4 0h2m22 0h2m9 0h1m147 0h2m216 0h1m14 0h1m2 0h1M277 163.5h1m12 0h2m3 0h1m14 0h1m2 0h1m6 0h2m9 0h1m12 0h2m6 0h1h2h1m2 0h1m5 0h1m12 0h2m4 0h2m31 0h2m19 0h2m24 0h1m74 0h1m45 0h2m37 0h2m16 0h2m3 0h1m126 0h2M277 166.5h1m6 0h2m9 0h1m6 0h2m3 0h1m9 0h2m3 0h1m2 0h1m6 0h2h1m8 0h1m3 0h2m4 0h2m10 0h2m12 0h1h2m4 0h2h1m6 0h2h1m9 0h2m97 0h2m60 0h1m36 0h2m33 0h1m185 0h1M275 169.5h2h1m3 0h2m22 0h2h1m3 0h2m24 0h1m5 0h1m18 0h2h1h2m6 0h1m2 0h1m11 0h1m8 0h1m32 0h1m125 0h1m11 0h1m38 0h1m18 0h2m165 0h1M278 172.5h2h1m9 0h2m3 0h1h2m9 0h1h2m12 0h1m24 0h2m4 0h2m4 0h2m10 0h2m1 0h2m13 0h2m40 0h2m24 0h1m84 0h2m3 0h1m68 0h1m152 0h1m23 0h1M277 175.5h1m12 0h2m15 0h1m47 0h1m21 0h2m190 0h2m123 0h1m5 0h1m26 0h1m8 0h1h2h1m12 0h2m1 0h2h1m12 0h2m1 0h2m7 0h2m9 0h1m9 0h2m21 0h1M308 178.5h2m22 0h2m16 0h2m21 0h1m59 0h1m101 0h1m71 0h1m51 0h2m3 0h1h2m1 0h2m15 0h1m8 0h1m2 0h1m17 0h1m8 0h1m2 0h1m12 0h2h1m9 0h2m18 0h1m9 0h2m9 0h1m3 0h2m6 0h1m15 0h2m3 0h1M443 181.5h2m93 0h1m131 0h1m45 0h2m51 0h1m15 0h2m13 0h2m15 0h1m6 0h2M542 184.5h2h1M521 187.5h2m42 0h1m257 0h1M703 190.5h1M505 193.5h1m227 0h1M472 196.5h1m71 0h1M544 202.5h1M544 205.5h1m17 0h1M541 208.5h1m2 0h1m12 0h2M563 211.5h2M544 214.5h1m12 0h2m132 0h1M466 217.5h1"/>
<path stroke="#0099ff" stroke-width="2" d="M311 71h2m19 0h2m33 0h1m12 0h2m4 0h2h1m3 0h2m4 0h2m6 0h1m3 0h2m3 0h1m3 0h2m1 0h2m6 0h1m48 0h2m7 0h2m27 0h1m3 0h2m10 0h2m3 0h1m5 0h1m12 0h2m31 0h2M311 73h2m6 0h1m2 0h1m24 0h2h1m12 0h2m7 0h2m1 0h2m9 0h1m5 0h1m12 0h2m4 0h2m1 0h2m16 0h2m51 0h1m3 0h2m6 0h1m12 0h2m13 0h2m12 0h1m2 0h1h2m18 0h1m5 0h1m27 0h2m1 0h2m22 0h2M275 75h2m40 0h2m13 0h2m1 0h2h1m21 0h2m1 0h2m13 0h2h1h2m1 0h2m25 0h2m144 0h1m2 0h1h2m36 0h1h2M311 77h2m15 0h1m2 0h1h2m9 0h1m20 0h1h2h1m3 0h2m6 0h1m6 0h2h1m3 0h2h1m18 0h2h1m9 0h2m6 0h1m56 0h1m47 0h1m8 0h1m6 0h2h1m2 0h1m3 0h2h1m2 0h1m35 0h1h2m24 0h1m11 0h1M313 79h1h2m3 0h1m15 0h2m10 0h2h1m23 0h1m6 0h2h1m5 0h1h2m6 0h1m18 0h2m7 0h2m112 0h2m3 0h1m9 0h2m4 0h2h1m2 0h1h2m1 0h2m39 0h1m8 0h1h2M310 81h1m20 0h1m2 0h1m8 0h1m3 0h2m9 0h1m3 0h2m3 0h1h2m1 0h2h1m20 0h1m2 0h1m141 0h2m1 0h2m24 0h1m42 0h2m10 0h2m9 0h1m2 0h1m9 0h2M310 83h1m5 0h1m2 0h1h2m1 0h2m19 0h2m18 0h1m9 0h2m13 0h2m34 0h2m199 0h2m1 0h2h1h2M311 85h2m3 0h1m2 0h1h2m3 0h1m9 0h2m7 0h2m10 0h2m7 0h2m4 0h2m6 0h1m38 0h1m213 0h2h1h2M311 87h2h1m12 0h2h1m5 0h1m8 0h1h2m1 0h2m12 0h1m5 0h1m12 0h2m3 0h1m6 0h2h1m3 0h2h1m228 0h2m1 0h2m3 0h1M320 89h2m18 0h1m5 0h1m14 0h1m2 0h1m3 0h2h1h2m18 0h1m6 0h2h1m24 0h2m213 0h1m2 0h1m15 0h2M310 91h1m6 0h2m9 0h1m29 0h1m2 0h1m5 0h1h2m9 0h1m8 0h1h2m3 0h1m264 0h2M323 93h2m13 0h2m1 0h2m37 0h2m4 0h2m3 0h1m2 0h1h2h1m15 0h2m217 0h2h1m24 0h2m162 0h1M316 95h1m2 0h1m9 0h2m13 0h2m13 0h2h1m2 0h1m3 0h2m13 0h2m3 0h1h2m6 0h1m2 0h1m239 0h1m2 0h1M316 97h1m6 0h2m3 0h1m17 0h1m17 0h1m2 0h1h2m9 0h1m2 0h1m5 0h1m3 0h2m6 0h1m12 0h2m18 0h1m2 0h1m194 0h1m3 0h2m4 0h2M313 99h1h2m13 0h2m4 0h2m3 0h1m23 0h1m3 0h2h1h2m3 0h1m5 0h1m2 0h1m2 0h1h2h1m2 0h1m5 0h1m35 0h1m197 0h1m2 0h1h2h1m153 0h2M316 101h1m6 0h2m4 0h2m10 0h2h1m14 0h1m3 0h2m1 0h2m3 0h1m5 0h1m9 0h2h1m24 0h2m10 0h2m9 0h1m200 0h1m8 0h1m8 0h1m2 0h1m89 0h1m39 0h2M275 103h2m43 0h2m16 0h2m13 0h2m4 0h2m3 0h1m5 0h1m5 0h1h2m3 0h1m2 0h1m5 0h1m6 0h2h1m24 0h2m211 0h2m9 0h1m9 0h2m60 0h1m8 0h1m2 0h1m54 0h2m30 0h1M314 105h2m22 0h2m22 0h2h1m2 0h1h2m27 0h1m236 0h1m20 0h1m21 0h2m24 0h1m17 0h1m20 0h1m3 0h2m4 0h2m1 0h2m13 0h2h1m14 0h1h2m6 0h1m14 0h1m5 0h1m2 0h1h2M328 107h1h2m10 0h2m13 0h2m12 0h1m3 0h2m6 0h1m3 0h2m3 0h1m5 0h1m38 0h1m212 0h1m6 0h2m10 0h2m36 0h1m14 0h1m18 0h2m1 0h2h1m8 0h1m17 0h1m2 0h1m11 0h1m2 0h1m2 0h1h2m7 0h2m12 0h1h2m7 0h2M338 109h2h1h2m27 0h1h2m4 0h2m4 0h2m1 0h2h1h2h1m6 0h2h1m12 0h2m10 0h2m222 0h1m2 0h1m30 0h2h1m33 0h2m19 0h2h1h2h1m3 0h2h1m2 0h1h2m34 0h2m22 0h2m4 0h2m1 0h2m1 0h2M350 111h2m18 0h1m5 0h1m12 0h2h1m8 0h1m311 0h1h2m3 0h1h2m1 0h2h1m8 0h1m8 0h1m2 0h1h2m24 0h1m30 0h2m3 0h1m3 0h2m1 0h2M280 113h1m77 0h1m6 0h2m4 0h2m16 0h2m4 0h2h1m15 0h2m21 0h1m227 0h1m29 0h1m24 0h2h1m2 0h1m3 0h2m1 0h2m1 0h2h1m5 0h1h2m4 0h2m21 0h1m11 0h1m5 0h1h2m12 0h1h2m1 0h2m3 0h1m6 0h2m1 0h2M292 115h1m36 0h2m7 0h2m12 0h1m6 0h2m16 0h2h1m3 0h2m4 0h2m9 0h1m273 0h2m13 0h2m6 0h1m11 0h1m11 0h1m2 0h1h2h1m17 0h1m2 0h1m35 0h1m6 0h2m16 0h2m10 0h2M323 117h2m25 0h2m13 0h2h1h2m4 0h2m6 0h1h2m1 0h2m4 0h2m3 0h1m38 0h1m231 0h2h1m8 0h1h2m3 0h1m8 0h1m5 0h1m11 0h1m9 0h2h1m12 0h2h1m2 0h1m6 0h2m21 0h1m12 0h2m19 0h2m18 0h1M338 119h2m1 0h2m24 0h1m2 0h1m3 0h2m15 0h1m21 0h2m21 0h1m236 0h1h2m1 0h2h1h2m7 0h2m9 0h1m2 0h1m2 0h1h2h1m5 0h1m14 0h1m6 0h2h1m15 0h2m28 0h2m3 0h1m15 0h2M344 121h2m15 0h1m18 0h2m15 0h1m38 0h1m225 0h2m3 0h1m14 0h1h2m7 0h2m6 0h1h2m6 0h1h2m1 0h2m27 0h1m32 0h1m6 0h2m13 0h2m6 0h1m18 0h2M296 123h2m30 0h1m9 0h2m22 0h2h1m3 0h2h1m12 0h2h1h2m27 0h1m9 0h2m10 0h2m220 0h2m12 0h1h2m24 0h1m24 0h2m12 0h1m44 0h1m6 0h2m13 0h2m18 0h1M296 125h2m10 0h2m42 0h1m5 0h1m15 0h2h1m9 0h2m1 0h2m21 0h1m12 0h2m127 0h2m9 0h1h2m94 0h2m1 0h2m7 0h2m4 0h2m54 0h1m69 0h2m16 0h2M275 127h2m3 0h1m17 0h1m5 0h1m2 0h1m9 0h2m1 0h2m16 0h2m22 0h2h1m3 0h2m1 0h2m1 0h2h1m6 0h2m1 0h2m1 0h2m36 0h1m9 0h2m39 0h1h2m133 0h2m28 0h2m16 0h2m10 0h2m22 0h2m69 0h1m5 0h1M289 129h1m12 0h2m37 0h2m13 0h2m37 0h2h1m15 0h2m109 0h2m42 0h1m44 0h1m38 0h1m12 0h2m9 0h1m21 0h2m1 0h2m3 0h1M280 131h1m3 0h2m1 0h2m10 0h2m57 0h1m11 0h1m6 0h2h1m9 0h2m1 0h2m81 0h1m60 0h2h1m5 0h1m9 0h2m12 0h1m32 0h1m42 0h2m18 0h1m33 0h2m30 0h1M277 133h1m12 0h2m49 0h2m15 0h1m2 0h1h2m4 0h2m10 0h2m3 0h1m5 0h1m5 0h1m5 0h1m72 0h2m4 0h2m4 0h2m10 0h2m7 0h2m15 0h1m6 0h2m3 0h1h2m25 0h2h1m44 0h1m26 0h1m59 0h1m71 0h1M275 135h2m4 0h2m1 0h2m3 0h1h2m1 0h2h1m3 0h2m27 0h1m9 0h2m1 0h2m10 0h2m6 0h1h2m1 0h2m4 0h2h1h2h1m23 0h1m3 0h2m7 0h2m3 0h1m6 0h2m1 0h2m3 0h1m3 0h2m10 0h2m10 0h2m13 0h2m4 0h2m1 0h2m13 0h2m10 0h2m6 0h1m18 0h2m4 0h2m10 0h2m1 0h2m6 0h1h2m31 0h2m4 0h2h1h2m1 0h2m82 0h2m70 0h2h1M281 137h2m1 0h2m1 0h2h1h2h1m12 0h2m31 0h2m12 0h1m2 0h1m2 0h1m3 0h2m13 0h2h1m2 0h1h2m7 0h2m4 0h2m25 0h2m12 0h1m3 0h2m10 0h2m16 0h2h1m2 0h1h2m1 0h2m39 0h1h2m16 0h2m16 0h2m27 0h1m45 0h2m7 0h2m129 0h1M286 139h1m6 0h2m4 0h2h1m11 0h1m3 0h2m9 0h1m27 0h2m9 0h1m2 0h1m6 0h2m4 0h2m6 0h1m5 0h1m41 0h1m2 0h1m3 0h2m1 0h2h1h2m7 0h2m10 0h2m15 0h1m3 0h2h1m3 0h2h1m3 0h2m3 0h1m3 0h2m18 0h1m5 0h1m2 0h1m17 0h1m6 0h2m39 0h1m20 0h1m2 0h1m14 0h1m87 0h2m33 0h1M284 141h2m1 0h2m3 0h1m6 0h2h1m11 0h1m3 0h2m1 0h2m36 0h1m2 0h1m5 0h1h2m6 0h1h2h1m3 0h2h1m3 0h2h1m3 0h2m1 0h2m1 0h2m22 0h2h1m5 0h1m2 0h1m3 0h2m6 0h1m2 0h1m6 0h2m21 0h1m5 0h1m5 0h1m2 0h1h2m3 0h1h2m1 0h2m4 0h2m1 0h2h1h2h1m18 0h2m3 0h1m11 0h1m3 0h2m7 0h2m16 0h2m16 0h2h1m2 0h1m11 0h1h2m1 0h2m1 0h2m1 0h2m3 0h1m6 0h2m6 0h1m2 0h1m2 0h1m36 0h2m1 0h2M286 143h1h2m9 0h1m14 0h1m9 0h2m3 0h1m36 0h2m7 0h2m4 0h2m1 0h2m1 0h2m1 0h2h1m9 0h2h1h2m4 0h2h1m5 0h1h2m9 0h1m2 0h1m2 0h1h2m3 0h1m8 0h1m2 0h1m2 0h1m5 0h1m2 0h1m2 0h1m2 0h1m12 0h2m15 0h1m14 0h1m15 0h2h1h2h1m30 0h2m27 0h1m18 0h2m1 0h2h1m12 0h2m3 0h1m2 0h1h2m6 0h1m9 0h2M283 145h1m11 0h1m14 0h1m29 0h1m5 0h1m14 0h1m5 0h1m2 0h1m3 0h2m3 0h1h2m1 0h2m1 0h2h1m14 0h1h2m15 0h1m11 0h1m6 0h2m1 0h2m7 0h2m10 0h2m1 0h2h1m21 0h2m4 0h2m4 0h2h1h2m3 0h1m11 0h1m9 0h2m21 0h1m12 0h2m21 0h1m6 0h2m15 0h1m8 0h1m3 0h2m1 0h2m4 0h2m3 0h1m9 0h2m1 0h2M287 147h2m10 0h2h1m15 0h2m3 0h1h2m4 0h2m10 0h2m3 0h1m2 0h1m15 0h2m10 0h2m12 0h1m3 0h2h1m3 0h2h1h2m7 0h2m1 0h2m1 0h2h1m5 0h1m15 0h2m9 0h1m15 0h2m1 0h2m13 0h2m15 0h1m12 0h2h1m26 0h1m11 0h1m3 0h2h1h2m19 0h2m3 0h1m8 0h1m6 0h2m12 0h1h2m7 0h2m3 0h1h2m1 0h2m15 0h1m116 0h1M284 149h2h1h2m6 0h1m17 0h1m6 0h2m21 0h1m9 0h2m7 0h2m4 0h2h1m3 0h2h1h2m9 0h1m8 0h1m29 0h1m8 0h1m3 0h2m12 0h1m5 0h1m11 0h1m24 0h2m22 0h2m15 0h1m18 0h2m9 0h1m29 0h1m8 0h1m14 0h1m3 0h2h1m3 0h2m9 0h1m2 0h1h2m3 0h1m5 0h1m36 0h2m75 0h1h2m3 0h1"/>
<path stroke="#0099ff" stroke-width="3" d="M284 151.5h2m31 0h2m9 0h1m9 0h2m1 0h2m27 0h1h2m6 0h1m3 0h2h1m11 0h1m194 0h1m17 0h1m5 0h1m5 0h1m12 0h2m6 0h1m12 0h2M284 154.5h2m1 0h2m9 0h1m2 0h1h2m16 0h2h1m6 0h2m7 0h2m4 0h2m3 0h1m2 0h1m2 0h1m2 0h1m9 0h2h1m6 0h2m16 0h2h1m62 0h1m2 0h1m71 0h1m63 0h2m9 0h1m18 0h2h1h2m66 0h1m71 0h1m12 0h2m6 0h1M284 157.5h2m12 0h1h2m12 0h1m3 0h2m1 0h2m4 0h2m13 0h2m3 0h1m5 0h1h2m7 0h2m6 0h1m5 0h1h2h1m5 0h1m11 0h1m122 0h1m107 0h1m29 0h1m99 0h2m24 0h1m21 0h2m18 0h1M280 160.5h1m2 0h1h2m3 0h1h2h1m2 0h1m2 0h1h2h1m8 0h1h2m1 0h2h1m9 0h2m9 0h1m6 0h2m1 0h2m4 0h2m6 0h1h2m3 0h1m2 0h1m2 0h1m11 0h1m2 0h1m3 0h2m6 0h1m6 0h2m34 0h2m181 0h2m12 0h1m12 0h2m1 0h2m112 0h2m12 0h1M280 163.5h1m23 0h1h2m9 0h1m2 0h1m2 0h1h2h1m9 0h2m6 0h1m6 0h2m4 0h2m10 0h2m12 0h1m2 0h1m2 0h1h2m3 0h1m3 0h2m10 0h2m10 0h2m12 0h1m107 0h1m110 0h1m119 0h1m3 0h2m9 0h1m24 0h2M275 166.5h2m3 0h1m8 0h1m6 0h2m10 0h2m9 0h1m35 0h1m3 0h2h1h2m4 0h2m1 0h2m12 0h1m3 0h2m7 0h2m9 0h1m50 0h1m237 0h2m75 0h1m6 0h2h1m5 0h1m14 0h1M292 169.5h1m2 0h1m2 0h1m23 0h1m17 0h1m38 0h1h2m141 0h1m18 0h2m21 0h1m129 0h2m48 0h1m44 0h1m14 0h1M284 172.5h2m6 0h1m23 0h1m15 0h2m3 0h1m12 0h2m39 0h1m2 0h1m201 0h2m72 0h1m12 0h2m10 0h2m31 0h2h1m6 0h2m10 0h2h1m30 0h2h1m5 0h1m15 0h2m18 0h1M308 175.5h2m4 0h2m64 0h2h1m15 0h2m81 0h1m104 0h1m74 0h1m2 0h1h2h1m5 0h1m8 0h1m5 0h1m9 0h2m4 0h2m1 0h2m4 0h2m10 0h2m13 0h2m4 0h2m3 0h1m2 0h1m29 0h1h2m9 0h1h2m7 0h2h1m6 0h2m10 0h2M662 178.5h2m12 0h1m3 0h2m1 0h2m1 0h2m15 0h1m5 0h1m6 0h2m3 0h1h2m9 0h1m20 0h1m33 0h2m1 0h2m3 0h1m2 0h1m9 0h2h1m3 0h2m1 0h2m3 0h1h2M541 181.5h1m26 0h1m134 0h1m92 0h1m2 0h1M541 184.5h1m14 0h1m117 0h2m118 0h2M538 187.5h1h2M560 190.5h2M538 193.5h1m87 0h2M566 196.5h2M424 199.5h1m113 0h1M520 202.5h1M388 205.5h1m156 0h2M565 214.5h1"/>
<path stroke="#00ccff" stroke-width="2" d="M382 71h1m24 0h2m25 0h2m40 0h2h1m8 0h1m2 0h1h2m3 0h1h2h1h2m1 0h2m4 0h2m7 0h2m42 0h1m6 0h2m21 0h1m2 0h1M302 73h2m57 0h1m5 0h1m5 0h1m3 0h2m3 0h1m15 0h2m15 0h1h2m3 0h1m5 0h1m48 0h2m1 0h2m9 0h1m2 0h1h2m3 0h1m5 0h1m6 0h2m1 0h2m4 0h2h1m11 0h1m11 0h1m11 0h1h2m28 0h2h1m33 0h2M346 75h1m17 0h1m5 0h1m17 0h1m5 0h1m3 0h2m3 0h1h2m6 0h1m14 0h1h2m1 0h2m43 0h2m1 0h2m3 0h1m3 0h2h1m5 0h1m3 0h2h1m5 0h1h2m1 0h2m1 0h2m3 0h1m5 0h1m17 0h1m17 0h1m32 0h1h2m9 0h1M325 77h1h2m7 0h2m31 0h2m10 0h2m18 0h1h2h1h2m106 0h2m10 0h2m9 0h1m3 0h2m1 0h2h1m12 0h2m1 0h2h1m36 0h2m7 0h2m7 0h2M310 79h1m23 0h1m29 0h1m3 0h2m22 0h2m4 0h2m10 0h2m1 0h2h1m131 0h1m53 0h1m6 0h2m13 0h2m1 0h2m4 0h2M311 81h2m6 0h1m2 0h1m6 0h2m6 0h1m21 0h2m24 0h1m27 0h2m10 0h2m9 0h1m96 0h2m28 0h2h1h2m33 0h1m6 0h2m4 0h2h1m3 0h2h1m3 0h2m1 0h2M311 83h2m1 0h2m6 0h1m11 0h1m38 0h1m8 0h1m11 0h1m216 0h2h1m8 0h1h2m3 0h1M313 85h1m8 0h1m5 0h1m5 0h1m2 0h1m5 0h1m3 0h2h1m8 0h1m14 0h1m8 0h1m2 0h1m8 0h1m5 0h1m2 0h1m11 0h1h2m7 0h2m9 0h1m176 0h1m45 0h2M310 87h1m8 0h1m3 0h2m10 0h2h1h2m6 0h1m24 0h2h1m41 0h1h2h1m6 0h2m204 0h1m9 0h2M316 89h1m2 0h1m2 0h1m8 0h1m11 0h1m3 0h2m9 0h1h2m12 0h1m2 0h1m12 0h2m1 0h2h1m38 0h1m194 0h1h2m3 0h1m2 0h1h2M308 91h2m6 0h1m9 0h2m1 0h2m9 0h1m5 0h1m26 0h1m18 0h2m24 0h1m210 0h2m1 0h2m7 0h2M316 93h1h2m1 0h2m9 0h1h2m6 0h1m3 0h2m43 0h2m9 0h1m32 0h1m195 0h2m6 0h1h2m1 0h2M313 95h1h2m1 0h2m1 0h2h1m2 0h1m2 0h1m6 0h2m9 0h1m15 0h2m18 0h1m20 0h1m9 0h2m13 0h2m6 0h1m194 0h1h2m1 0h2M317 97h2m7 0h2m10 0h2h1h2m15 0h1m6 0h2m6 0h1m6 0h2m7 0h2m243 0h1m2 0h1h2M310 99h1m6 0h2m1 0h2h1m2 0h1m11 0h1m3 0h2m3 0h1m11 0h1m6 0h2m25 0h2m3 0h1m15 0h2m10 0h2m204 0h1m11 0h1m15 0h2M313 101h1m3 0h2m21 0h1m5 0h1m12 0h2m3 0h1m12 0h2m3 0h1m8 0h1m2 0h1m5 0h1m231 0h2m4 0h2m19 0h2M314 103h2h1m6 0h2m4 0h2m9 0h1m20 0h1m9 0h2h1m6 0h2m10 0h2m3 0h1m5 0h1m14 0h1m215 0h1h2m6 0h1M310 105h1h2h1m3 0h2m9 0h1m12 0h2m9 0h1m29 0h1m3 0h2h1m9 0h2h1m14 0h1m9 0h2m208 0h2h1m8 0h1m12 0h2m90 0h1m2 0h1m20 0h1m23 0h1m23 0h1M313 107h1m3 0h2m27 0h1m11 0h1h2h1m2 0h1m14 0h1m5 0h1m2 0h1m11 0h1m12 0h2m1 0h2m7 0h2m217 0h2h1m56 0h1m18 0h2h1m63 0h2m7 0h2m3 0h1m9 0h2h1h2M313 109h1h2m1 0h2m7 0h2h1m36 0h2m6 0h1m8 0h1m2 0h1m9 0h2m237 0h1m9 0h2m9 0h1m71 0h1m5 0h1m14 0h1m3 0h2m18 0h1m12 0h2h1h2m4 0h2m9 0h1m2 0h1m3 0h2m6 0h1M313 111h1m3 0h2m4 0h2m4 0h2m9 0h1h2m3 0h1m11 0h1m5 0h1h2h1h2m16 0h2h1m3 0h2h1m30 0h2m9 0h1m212 0h1m6 0h2m28 0h2m3 0h1m11 0h1m5 0h1m18 0h2m4 0h2m7 0h2m4 0h2h1m33 0h2m7 0h2m3 0h1m5 0h1h2m1 0h2m6 0h1m2 0h1m6 0h2M313 113h1m3 0h2m10 0h2m7 0h2m21 0h1m17 0h1m20 0h1m24 0h2m259 0h2m1 0h2m18 0h1h2h1m27 0h2m3 0h1h2h1m3 0h2m1 0h2m28 0h2h1h2m12 0h1h2m7 0h2m1 0h2m1 0h2m3 0h1m2 0h1h2M313 115h1m3 0h2h1m8 0h1m2 0h1m8 0h1h2m3 0h1m11 0h1m2 0h1h2m3 0h1h2m4 0h2m6 0h1m5 0h1m36 0h2m9 0h1m243 0h2h1m2 0h1h2m4 0h2m9 0h1m6 0h2m6 0h1m12 0h2m7 0h2m4 0h2m1 0h2h1h2h1h2m13 0h2h1m2 0h1m11 0h1m20 0h1m6 0h2m1 0h2h1M329 117h2m10 0h2m16 0h2m3 0h1m8 0h1m5 0h1h2m3 0h1m2 0h1h2m25 0h2m7 0h2m10 0h2m243 0h1h2m1 0h2h1m14 0h1m5 0h1h2m13 0h2m13 0h2m13 0h2m27 0h1m2 0h1h2m3 0h1m5 0h1m11 0h1m2 0h1h2m3 0h1m6 0h2M317 119h2m1 0h2m1 0h2m3 0h1m17 0h1m14 0h1m3 0h2m6 0h1m6 0h2m3 0h1m6 0h2m4 0h2m37 0h2m226 0h2m15 0h1m5 0h1m12 0h2m7 0h2m1 0h2m7 0h2m3 0h1m3 0h2m1 0h2m7 0h2h1m3 0h2m33 0h1m3 0h2m1 0h2m6 0h1m5 0h1m6 0h2h1h2m10 0h2M313 121h1m24 0h2h1m17 0h1m3 0h2h1m8 0h1m2 0h1m2 0h1m2 0h1m5 0h1m26 0h1m9 0h2m237 0h1m3 0h2m1 0h2m1 0h2m4 0h2m9 0h1m14 0h1h2m6 0h1m14 0h1h2m1 0h2h1m12 0h2m34 0h2m4 0h2m15 0h1M313 123h1m3 0h2m21 0h1h2m15 0h1h2m4 0h2h1m3 0h2m3 0h1h2h1m8 0h1h2m1 0h2m4 0h2m13 0h2m219 0h1m27 0h2h1m2 0h1h2h1h2m4 0h2h1m3 0h2m4 0h2m1 0h2m1 0h2m9 0h1m8 0h1m6 0h2m6 0h1m5 0h1h2m4 0h2h1m6 0h2m1 0h2m28 0h2m34 0h2m1 0h2M313 125h1m3 0h2m9 0h1m12 0h2m24 0h1m3 0h2m10 0h2m12 0h1h2m10 0h2m6 0h1m14 0h1m99 0h2m1 0h2m30 0h1m44 0h1m47 0h1m26 0h1m3 0h2m1 0h2m3 0h1h2m10 0h2h1m6 0h2m13 0h2m46 0h2m3 0h1m12 0h2h1m20 0h1M334 127h1m17 0h1m5 0h1m2 0h1m11 0h1m6 0h2m9 0h1m5 0h1h2m3 0h1m21 0h2m1 0h2m3 0h1m2 0h1m47 0h1h2m54 0h1m2 0h1h2m7 0h2m57 0h1m17 0h1m3 0h2m9 0h1m3 0h2h1m11 0h1m3 0h2m16 0h2m6 0h1m5 0h1m5 0h1m18 0h2m60 0h1m2 0h1M275 129h2m51 0h1h2m7 0h2m18 0h1h2m4 0h2m3 0h1m3 0h2m6 0h1m20 0h1m14 0h1m2 0h1m6 0h2m45 0h1m11 0h1m2 0h1m3 0h2m16 0h2m25 0h2h1m3 0h2h1m6 0h2m43 0h2m7 0h2h1h2m1 0h2m43 0h2m12 0h1m3 0h2m1 0h2m6 0h1m6 0h2m3 0h1m2 0h1m9 0h2m22 0h2m33 0h1m8 0h1M278 131h2m37 0h2m6 0h1m2 0h1m9 0h2m12 0h1m2 0h1m6 0h2m1 0h2m6 0h1m6 0h2m1 0h2m15 0h1h2m22 0h2h1h2m19 0h2h1m24 0h2h1h2m1 0h2h1m17 0h1m14 0h1m15 0h2m25 0h2m1 0h2h1h2m22 0h2m3 0h1m6 0h2m7 0h2h1m11 0h1m5 0h1m2 0h1h2m12 0h1h2m6 0h1m6 0h2m13 0h2m6 0h1h2m1 0h2m1 0h2m7 0h2m7 0h2m16 0h2m39 0h1m20 0h1M283 133h1m12 0h2m1 0h2m1 0h2m3 0h1h2m6 0h1m21 0h2h1m5 0h1m3 0h2h1h2h1h2m7 0h2h1m11 0h1m6 0h2m6 0h1m15 0h2m3 0h1m9 0h2h1h2h1m5 0h1m12 0h2h1m3 0h2m4 0h2m12 0h1m8 0h1h2h1m2 0h1m2 0h1m2 0h1m5 0h1m5 0h1m14 0h1m11 0h1m6 0h2m18 0h1h2m22 0h2m1 0h2h1m9 0h2m12 0h1h2m12 0h1m15 0h2h1m5 0h1m6 0h2m3 0h1m8 0h1m18 0h2m1 0h2m6 0h1m18 0h2m63 0h1M278 135h2m3 0h1m3 0h2m7 0h2m6 0h1m2 0h1m2 0h1m6 0h2m1 0h2h1m27 0h2h1m2 0h1m3 0h2m6 0h1m2 0h1m6 0h2h1h2m1 0h2h1m3 0h2m1 0h2m18 0h1m26 0h1m11 0h1m6 0h2m15 0h1m2 0h1m8 0h1h2m1 0h2h1h2m6 0h1m8 0h1m5 0h1m23 0h1m2 0h1m2 0h1m11 0h1m2 0h1m3 0h2m19 0h2m7 0h2m19 0h2m7 0h2m7 0h2h1h2m3 0h1h2m3 0h1h2h1m3 0h2m4 0h2h1h2h1m5 0h1m15 0h2m9 0h1m12 0h2m12 0h1m47 0h1m6 0h2M277 137h1m15 0h2h1h2m1 0h2m12 0h1h2m1 0h2m22 0h2h1m12 0h2m1 0h2h1m6 0h2m6 0h1m9 0h2h1h2h1m5 0h1m2 0h1h2h1m6 0h2h1m23 0h1h2m3 0h1m2 0h1h2m10 0h2m1 0h2m4 0h2m15 0h1m11 0h1h2h1h2m7 0h2m4 0h2h1m2 0h1m12 0h2m3 0h1m8 0h1m8 0h1h2m6 0h1m2 0h1h2m16 0h2m3 0h1h2h1m6 0h2m1 0h2m1 0h2m1 0h2m3 0h1m2 0h1m2 0h1h2m6 0h1m6 0h2h1m2 0h1m5 0h1h2h1m3 0h2m1 0h2m15 0h1m17 0h1m3 0h2m15 0h1m21 0h2m33 0h1M277 139h1m5 0h1h2m1 0h2m3 0h1m2 0h1m2 0h1m5 0h1m5 0h1m12 0h2m4 0h2m4 0h2m1 0h2h1m2 0h1m2 0h1m8 0h1m2 0h1h2h1m3 0h2m1 0h2m1 0h2m7 0h2m6 0h1m3 0h2h1m3 0h2h1h2m1 0h2m4 0h2m3 0h1m2 0h1m2 0h1m6 0h2m6 0h1h2m1 0h2m3 0h1m2 0h1m5 0h1m5 0h1m3 0h2h1m8 0h1m5 0h1h2m4 0h2m1 0h2m19 0h2m4 0h2m1 0h2h1h2m13 0h2m6 0h1m9 0h2h1m3 0h2h1m2 0h1m15 0h2m10 0h2m4 0h2m1 0h2m9 0h1h2m18 0h1m2 0h1m2 0h1m11 0h1h2m7 0h2m7 0h2m22 0h2h1m12 0h2h1m6 0h2m3 0h1M275 141h2m3 0h1m2 0h1m9 0h2h1m2 0h1m29 0h1m15 0h2h1m6 0h2m9 0h1h2m3 0h1m15 0h2m15 0h1h2m3 0h1m27 0h2m3 0h1h2m7 0h2m1 0h2m3 0h1m5 0h1m41 0h1m2 0h1m50 0h1m5 0h1m20 0h1m3 0h2m1 0h2m1 0h2m7 0h2m3 0h1m3 0h2h1m5 0h1m2 0h1m5 0h1h2m3 0h1m15 0h2m7 0h2h1m5 0h1m26 0h1h2m69 0h1M277 143h1m6 0h2m7 0h2h1m14 0h1m6 0h2m3 0h1m6 0h2m13 0h2h1m2 0h1m8 0h1m3 0h2h1m5 0h1m5 0h1h2m6 0h1m6 0h2m12 0h1m2 0h1m5 0h1m11 0h1m18 0h2m10 0h2m28 0h2m30 0h1m20 0h1m14 0h1m9 0h2m16 0h2m6 0h1h2h1h2m1 0h2m4 0h2m1 0h2m13 0h2h1h2m1 0h2m1 0h2m15 0h1h2m4 0h2h1m17 0h1m21 0h2h1h2m69 0h1m17 0h1M277 145h1m3 0h2m10 0h2m18 0h1m3 0h2h1h2m1 0h2h1m2 0h1m8 0h1m6 0h2m9 0h1m2 0h1h2m1 0h2h1m8 0h1m3 0h2m6 0h1m6 0h2m3 0h1m9 0h2h1m6 0h2m1 0h2m6 0h1m2 0h1h2m130 0h2m1 0h2m18 0h1m9 0h2m6 0h1m14 0h1m3 0h2m15 0h1h2m12 0h1m3 0h2m1 0h2m9 0h1m15 0h2m4 0h2m3 0h1h2m22 0h2m10 0h2m36 0h1m17 0h1M281 147h2h1m2 0h1m2 0h1m8 0h1m5 0h1m8 0h1m2 0h1m11 0h1m27 0h2m9 0h1m8 0h1m6 0h2m1 0h2h1m17 0h1m2 0h1m30 0h2m21 0h1m27 0h2m49 0h2m61 0h2m12 0h1m11 0h1m15 0h2m4 0h2m1 0h2m7 0h2m31 0h2m7 0h2m4 0h2m57 0h1M281 149h2h1m6 0h2m6 0h1h2m9 0h1m5 0h1m6 0h2m4 0h2m1 0h2m1 0h2m7 0h2h1m5 0h1m20 0h1m6 0h2m24 0h1m23 0h1m36 0h2m66 0h1m6 0h2m52 0h2m22 0h2m34 0h2m40 0h2m1 0h2m72 0h1m30 0h2"/>
<path stroke="#00ccff" stroke-width="3" d="M280 151.5h1h2h1m3 0h2h1h2m3 0h1m5 0h1m2 0h1m11 0h1m2 0h1m2 0h1m6 0h2m15 0h1m8 0h1h2h1h2h1m2 0h1m11 0h1h2m1 0h2m13 0h2m3 0h1m155 0h1m6 0h2m36 0h1m24 0h2m3 0h1m21 0h2m4 0h2m28 0h2m84 0h1m9 0h2h1m2 0h1m2 0h1M281 154.5h2m6 0h1m3 0h2m16 0h2m3 0h1m2 0h1m3 0h2m3 0h1m2 0h1m3 0h2m6 0h1m2 0h1m3 0h2m4 0h2m1 0h2m3 0h1h2h1m6 0h2m12 0h1m2 0h1m6 0h2m295 0h2m1 0h2m70 0h2m3 0h1m15 0h2m4 0h2m6 0h1h2m1 0h2M278 157.5h2m1 0h2m7 0h2h1h2m16 0h2m6 0h1m2 0h1m5 0h1h2h1m2 0h1m3 0h2h1m3 0h2m3 0h1m5 0h1m2 0h1h2m4 0h2m1 0h2m4 0h2m6 0h1m9 0h2m4 0h2m72 0h1m87 0h2m88 0h2m138 0h1m30 0h2M275 160.5h2h1m3 0h2m13 0h2m4 0h2m16 0h2m10 0h2h1h2m15 0h1m5 0h1m5 0h1m11 0h1h2m1 0h2m9 0h1m5 0h1m26 0h1m14 0h1m120 0h2m75 0h1m147 0h2m4 0h2m10 0h2h1m20 0h1M278 163.5h2m1 0h2h1m8 0h1m8 0h1h2m3 0h1h2m4 0h2m18 0h1m27 0h2m3 0h1m18 0h2m3 0h1h2m141 0h1m114 0h2m43 0h2m1 0h2m37 0h2m33 0h1m18 0h2h1m11 0h1m3 0h2m13 0h2h1M299 166.5h2m4 0h2m3 0h1m26 0h1m324 0h2m31 0h2m3 0h1m27 0h2m76 0h2m10 0h2M290 169.5h2m12 0h1m5 0h1m24 0h2m16 0h2m3 0h1m2 0h1m9 0h2m9 0h1m11 0h1m275 0h1m5 0h1m15 0h2m4 0h2h1h2m1 0h2m19 0h2m9 0h1h2m10 0h2m21 0h1m15 0h2m1 0h2m13 0h2m1 0h2m1 0h2m1 0h2M302 172.5h2m48 0h1m89 0h1m119 0h1m96 0h2h1m9 0h2m7 0h2m6 0h1m11 0h1m11 0h1m2 0h1m6 0h2m1 0h2m4 0h2h1h2m3 0h1m6 0h2m7 0h2m28 0h2h1m9 0h2m10 0h2M319 175.5h1m20 0h1m51 0h2m162 0h1m102 0h2m1 0h2m10 0h2m16 0h2m3 0h1m11 0h1m8 0h1m3 0h2m4 0h2m1 0h2m12 0h1m3 0h2m36 0h1m3 0h2m16 0h2m1 0h2m6 0h1M277 178.5h1m44 0h1m218 0h1m128 0h1m63 0h2m3 0h1m62 0h1m9 0h2M607 181.5h1m66 0h2m72 0h1M535 193.5h1m6 0h2M728 196.5h2M562 199.5h1M556 202.5h1M535 211.5h1"/>
<path stroke="#00ffff" stroke-width="2" d="M359 71h2m3 0h1m6 0h2m21 0h1m42 0h2m34 0h2h1m6 0h2h1h2m7 0h2m10 0h2h1m2 0h1m3 0h2m6 0h1m32 0h1m2 0h1m24 0h2h1m9 0h2M364 73h1m41 0h1h2m10 0h2m3 0h1m9 0h2m1 0h2m36 0h1m2 0h1m3 0h2m1 0h2m15 0h1h2m1 0h2m3 0h1m5 0h1h2m36 0h1m12 0h2M319 75h1m114 0h2m1 0h2m39 0h1m3 0h2m3 0h1m3 0h2m6 0h1m3 0h2m12 0h1h2m37 0h2m30 0h1m3 0h2M347 77h2m33 0h1m8 0h1m18 0h2m7 0h2m6 0h1h2m46 0h2m1 0h2m13 0h2m30 0h1m6 0h2m58 0h2m3 0h1m8 0h1M311 79h2m45 0h1m41 0h1h2h1h2m6 0h1m5 0h1m65 0h1m32 0h1m6 0h2h1m29 0h1m45 0h2h1h2m9 0h1M307 81h1m12 0h2m3 0h1m9 0h2m24 0h1m17 0h1m2 0h1m32 0h1h2m15 0h1m59 0h1m41 0h1m5 0h1m15 0h2m1 0h2h1m47 0h1M337 83h1m65 0h1m9 0h2h1h2m127 0h2m51 0h1m11 0h1m5 0h1M310 85h1m3 0h2m7 0h2m1 0h2m4 0h2m58 0h2m10 0h2m4 0h2m1 0h2m16 0h2h1m177 0h2m1 0h2m1 0h2h1m2 0h1M316 87h1m3 0h2h1m2 0h1m5 0h1m17 0h1m14 0h1m3 0h2m12 0h1m5 0h1m21 0h2m1 0h2m18 0h1m188 0h1M311 89h2m1 0h2m9 0h1h2m4 0h2m3 0h1m6 0h2m40 0h2m22 0h2m1 0h2m3 0h1m9 0h2m201 0h1m3 0h2M320 91h2h1m14 0h1m5 0h1h2m3 0h1m32 0h1m2 0h1m27 0h2h1m9 0h2m6 0h1M310 93h1h2m1 0h2m3 0h1m5 0h1h2m1 0h2m4 0h2m12 0h1m8 0h1m8 0h1m5 0h1m8 0h1m9 0h2m22 0h2m210 0h1M323 95h2m1 0h2m4 0h2h1m8 0h1m23 0h1m3 0h2m3 0h1m3 0h2m4 0h2m22 0h2m4 0h2m15 0h1m179 0h1m15 0h2m6 0h1M310 97h1m2 0h1m15 0h2h1h2m10 0h2m3 0h1m44 0h1m3 0h2m12 0h1m5 0h1m6 0h2m202 0h2m1 0h2m13 0h2M316 99h1m6 0h2m1 0h2h1m5 0h1m8 0h1h2m33 0h1m23 0h1m6 0h2m6 0h1m206 0h1m2 0h1m6 0h2M310 101h1m9 0h2h1m2 0h1m5 0h1m2 0h1m2 0h1m29 0h1m11 0h1m5 0h1m6 0h2m7 0h2h1m6 0h2m6 0h1m209 0h1m2 0h1m3 0h2m4 0h2M311 103h2m4 0h2m3 0h1m5 0h1m2 0h1m3 0h2m4 0h2m1 0h2h1m2 0h1m17 0h1h2m16 0h2h1m12 0h2m7 0h2m4 0h2m15 0h1m194 0h1m2 0h1m5 0h1m114 0h2m16 0h2M316 105h1m3 0h2m3 0h1m3 0h2m4 0h2h1m2 0h1m20 0h1m3 0h2m6 0h1m11 0h1m32 0h1m9 0h2m3 0h1m197 0h1m11 0h1m72 0h2m100 0h2M310 107h1m5 0h1m3 0h2m1 0h2h1m9 0h2h1m2 0h1m3 0h2m19 0h2h1m3 0h2m7 0h2m36 0h1m14 0h1m197 0h1m2 0h1m3 0h2h1m2 0h1m9 0h2h1m3 0h2m55 0h2m15 0h1m36 0h2m33 0h1m5 0h1m8 0h1m2 0h1M316 109h1m6 0h2h1m3 0h2m3 0h1m24 0h2m6 0h1m11 0h1m12 0h2h1m20 0h1m2 0h1m14 0h1m222 0h2h1m57 0h2m16 0h2m34 0h2m12 0h1m8 0h1m5 0h1m9 0h2M314 111h2h1m9 0h2m10 0h2m9 0h1m21 0h2m10 0h2m13 0h2m3 0h1h2m9 0h1h2h1m18 0h2m195 0h1m15 0h2m87 0h1m8 0h1m3 0h2m1 0h2m13 0h2m12 0h1m2 0h1m8 0h1h2m3 0h1m15 0h2m3 0h1M311 113h2m3 0h1m2 0h1m3 0h2m1 0h2h1m5 0h1m5 0h1h2m16 0h2m6 0h1m5 0h1m6 0h2h1m2 0h1h2m27 0h1h2h1m18 0h2m205 0h2m6 0h1m39 0h2m22 0h2m33 0h1m2 0h1m39 0h2m12 0h1M314 115h2m4 0h2m15 0h1m6 0h2m18 0h1h2m36 0h1m11 0h1m21 0h2m211 0h2m18 0h1m48 0h2m12 0h1m59 0h1m3 0h2m1 0h2h1m2 0h1m8 0h1m8 0h1M313 117h1m14 0h1m2 0h1m39 0h2m3 0h1m17 0h1m5 0h1m2 0h1m14 0h1m14 0h1m233 0h1m23 0h1m23 0h1m2 0h1h2m9 0h1h2m1 0h2h1m6 0h2h1m6 0h2h1m15 0h2m9 0h1m9 0h2m1 0h2h1m8 0h1m3 0h2m1 0h2m3 0h1h2m1 0h2h1M313 119h1h2m6 0h1m17 0h1m2 0h1m5 0h1m14 0h1m6 0h2m3 0h1m11 0h1h2m12 0h1m14 0h1m6 0h2m118 0h2m97 0h2m3 0h1m14 0h1m21 0h2m16 0h2m6 0h1m5 0h1m2 0h1m6 0h2m3 0h1m6 0h2h1m3 0h2h1m2 0h1h2h1m39 0h2m6 0h1h2m3 0h1m2 0h1m12 0h2M320 121h2m1 0h2m3 0h1h2m4 0h2h1m3 0h2m24 0h1m3 0h2m16 0h2m22 0h2m18 0h1m3 0h2m106 0h2m7 0h2m96 0h1m8 0h1m11 0h1m2 0h1h2m6 0h1h2h1m8 0h1m6 0h2m6 0h1m5 0h1m3 0h2h1h2h1m12 0h2m3 0h1m5 0h1m18 0h2h1m11 0h1m2 0h1h2m3 0h1m18 0h2m1 0h2m4 0h2m3 0h1h2M310 123h1m5 0h1m6 0h2m1 0h2m1 0h2m13 0h2m3 0h1m30 0h2h1m11 0h1m5 0h1m9 0h2h1m5 0h1m14 0h1m45 0h2m55 0h2h1h2h1m5 0h1m6 0h2m31 0h2m25 0h2m21 0h1m6 0h2m6 0h1m8 0h1m18 0h2h1m3 0h2h1m2 0h1m9 0h2m4 0h2h1h2h1h2m1 0h2h1m12 0h2m1 0h2m6 0h1m3 0h2m1 0h2h1m20 0h1m14 0h1m6 0h2m1 0h2m10 0h2m1 0h2h1h2m1 0h2m7 0h2M302 125h2m10 0h2m4 0h2m12 0h1m2 0h1h2h1m3 0h2h1m9 0h2m3 0h1m2 0h1h2m1 0h2m9 0h1h2m6 0h1m2 0h1h2m9 0h1m24 0h2m49 0h2m58 0h2h1m3 0h2m64 0h2m1 0h2m15 0h1m8 0h1m2 0h1m2 0h1m8 0h1m3 0h2m3 0h1m8 0h1m2 0h1m2 0h1m5 0h1m3 0h2m13 0h2h1h2m1 0h2m6 0h1m5 0h1h2m3 0h1h2m7 0h2m7 0h2m19 0h2m12 0h1m2 0h1m3 0h2m6 0h1m20 0h1h2M313 127h1m2 0h1m6 0h2m12 0h1m3 0h2m1 0h2m3 0h1h2m1 0h2m4 0h2m6 0h1m14 0h1m2 0h1m8 0h1m20 0h1m5 0h1m35 0h1m68 0h1m6 0h2m1 0h2m1 0h2m19 0h2h1m3 0h2m19 0h2m1 0h2m4 0h2m12 0h1h2m6 0h1m8 0h1m20 0h1m5 0h1h2h1h2m9 0h1m2 0h1m2 0h1h2m1 0h2h1h2m3 0h1m12 0h2m1 0h2m1 0h2m1 0h2h1m9 0h2m3 0h1m2 0h1h2m1 0h2m1 0h2M313 129h1m3 0h2h1m3 0h2m1 0h2m6 0h1m5 0h1m9 0h2m1 0h2m6 0h1m2 0h1m3 0h2m3 0h1m3 0h2m6 0h1m15 0h2m1 0h2h1m18 0h2h1m5 0h1m44 0h1m5 0h1h2m9 0h1m6 0h2m28 0h2h1h2m4 0h2h1m12 0h2m1 0h2m3 0h1m3 0h2m31 0h2m13 0h2m12 0h1m2 0h1h2h1h2h1m2 0h1h2m3 0h1h2m12 0h1m17 0h1h2m4 0h2m3 0h1m12 0h2h1m5 0h1m6 0h2m3 0h1m2 0h1m5 0h1m33 0h2m18 0h1m15 0h2M296 131h2m15 0h1m6 0h2m4 0h2m12 0h1m3 0h2m3 0h1h2m1 0h2m1 0h2m3 0h1m2 0h1m17 0h1m2 0h1h2m6 0h1m2 0h1m6 0h2m3 0h1m2 0h1m6 0h2m15 0h1m29 0h1h2m16 0h2m1 0h2h1m2 0h1h2m1 0h2m1 0h2m22 0h2h1m8 0h1m3 0h2h1m47 0h1m6 0h2h1h2m4 0h2m7 0h2h1m3 0h2m6 0h1m3 0h2m9 0h1m2 0h1m5 0h1m3 0h2m1 0h2h1m11 0h1h2h1m2 0h1m21 0h2m6 0h1m5 0h1m8 0h1h2h1m9 0h2h1m5 0h1m9 0h2m28 0h2M313 133h1m3 0h2m1 0h2m1 0h2h1m2 0h1m14 0h1m15 0h2m10 0h2h1m14 0h1h2m13 0h2h1m5 0h1m5 0h1m2 0h1m9 0h2m4 0h2h1m2 0h1h2h1h2h1m5 0h1m2 0h1m5 0h1m6 0h2h1h2m16 0h2m1 0h2m3 0h1m12 0h2h1m2 0h1h2h1m23 0h1m2 0h1m9 0h2h1h2m3 0h1m23 0h1m5 0h1m9 0h2m1 0h2h1h2m15 0h1m5 0h1h2m1 0h2m4 0h2h1m5 0h1m3 0h2h1m15 0h2m1 0h2m9 0h1h2m1 0h2h1m6 0h2m4 0h2m4 0h2m22 0h2m52 0h2M292 135h1m5 0h1m3 0h2m7 0h2m10 0h2m10 0h2m12 0h1m8 0h1m5 0h1m3 0h2m28 0h2m1 0h2m6 0h1m5 0h1m6 0h2m3 0h1m3 0h2m3 0h1m3 0h2h1m2 0h1m2 0h1m3 0h2m6 0h1m2 0h1m2 0h1h2m1 0h2m36 0h1h2m7 0h2m1 0h2m10 0h2m3 0h1m3 0h2m19 0h2m21 0h1m6 0h2m18 0h1m2 0h1m2 0h1m8 0h1m2 0h1m2 0h1m5 0h1h2m4 0h2m4 0h2m4 0h2m16 0h2h1h2m6 0h1m3 0h2m1 0h2m4 0h2m4 0h2m3 0h1m11 0h1m6 0h2m4 0h2h1m45 0h2m3 0h1m15 0h2M275 137h2m1 0h2h1m2 0h1m20 0h1m3 0h2h1m8 0h1h2m3 0h1m2 0h1m11 0h1m6 0h2m4 0h2m10 0h2h1m2 0h1h2h1m6 0h2m22 0h2m7 0h2m3 0h1m2 0h1m6 0h2m10 0h2m24 0h1m3 0h2m16 0h2m1 0h2m13 0h2m10 0h2m1 0h2m12 0h1h2m48 0h1m12 0h2m16 0h2m10 0h2m1 0h2h1m2 0h1m8 0h1m8 0h1m6 0h2m1 0h2m3 0h1m2 0h1h2m7 0h2m3 0h1m3 0h2m7 0h2m10 0h2m7 0h2m3 0h1m3 0h2m57 0h1m15 0h2M278 139h2m1 0h2m6 0h1m12 0h2m1 0h2m4 0h2m3 0h1m2 0h1h2m3 0h1m5 0h1m5 0h1m3 0h2m33 0h1m9 0h2m24 0h1m6 0h2m3 0h1m5 0h1m2 0h1m9 0h2m13 0h2m3 0h1m3 0h2m1 0h2h1m24 0h2m15 0h1m23 0h1m17 0h1m3 0h2m4 0h2m18 0h1m3 0h2m1 0h2m3 0h1h2m3 0h1m3 0h2m12 0h1h2m1 0h2m1 0h2m1 0h2m13 0h2m1 0h2m10 0h2m12 0h1m12 0h2m3 0h1m9 0h2h1m18 0h2m9 0h1m18 0h2m34 0h2M302 141h2h1m6 0h2m3 0h1m5 0h1h2h1m3 0h2m3 0h1m5 0h1h2m6 0h1m2 0h1m2 0h1h2m1 0h2m19 0h2h1m5 0h1m3 0h2h1m11 0h1h2m1 0h2m1 0h2h1h2h1h2m1 0h2m6 0h1m3 0h2m28 0h2m1 0h2m3 0h1m9 0h2m7 0h2m6 0h1m5 0h1m8 0h1m27 0h2m40 0h2h1m5 0h1m11 0h1m11 0h1m14 0h1m9 0h2h1m2 0h1h2m1 0h2m7 0h2m1 0h2m12 0h1m6 0h2h1m2 0h1m3 0h2m10 0h2m1 0h2m4 0h2m15 0h1h2m37 0h2m34 0h2M281 143h2h1m6 0h2h1m9 0h2m1 0h2m4 0h2m1 0h2m9 0h1m5 0h1m3 0h2m13 0h2h1m2 0h1h2m13 0h2m6 0h1m2 0h1m5 0h1m5 0h1m2 0h1h2h1m15 0h2m4 0h2m10 0h2m4 0h2m10 0h2m6 0h1m6 0h2m40 0h2m3 0h1m6 0h2h1h2m18 0h1m17 0h1m44 0h1m11 0h1m8 0h1m8 0h1m8 0h1h2m6 0h1m3 0h2m3 0h1h2m6 0h1m3 0h2m1 0h2m1 0h2h1m6 0h2m1 0h2m10 0h2m4 0h2h1m6 0h2m1 0h2m4 0h2m3 0h1h2m36 0h1m3 0h2m45 0h1M284 145h2m4 0h2h1m3 0h2h1m2 0h1m2 0h1h2m7 0h2h1m9 0h2m6 0h1m8 0h1m9 0h2m10 0h2m1 0h2m6 0h1m12 0h2m9 0h1m5 0h1m5 0h1m5 0h1m3 0h2h1m29 0h1m5 0h1m129 0h2m3 0h1m11 0h1m20 0h1m8 0h1m12 0h2m6 0h1m15 0h2h1m11 0h1m3 0h2m4 0h2m6 0h1m6 0h2m7 0h2m7 0h2m37 0h2m13 0h2m3 0h1m15 0h2M278 147h2m4 0h2m6 0h1h2h1h2m7 0h2m3 0h1m9 0h2m3 0h1h2m6 0h1h2m6 0h1m11 0h1m2 0h1m5 0h1m5 0h1h2m6 0h1m5 0h1m3 0h2m1 0h2m4 0h2h1m6 0h2m105 0h1m80 0h1m11 0h1m20 0h1h2m24 0h1m6 0h2h1m2 0h1m6 0h2m18 0h1m5 0h1m27 0h2m1 0h2m3 0h1h2m31 0h2m13 0h2m19 0h2M277 149h1h2m13 0h2m9 0h1m3 0h2m4 0h2m10 0h2m12 0h1m9 0h2m3 0h1m2 0h1h2m3 0h1h2h1m11 0h1m5 0h1m3 0h2m1 0h2h1h2m1 0h2m1 0h2m21 0h1m8 0h1m195 0h2m28 0h2m3 0h1h2m9 0h1m12 0h2m1 0h2h1m11 0h1m6 0h2m70 0h2m3 0h1"/>
<path stroke="#00ffff" stroke-width="3" d="M275 151.5h2h1h2m12 0h1h2m1 0h2m7 0h2m3 0h1m9 0h2m1 0h2h1h2m3 0h1m3 0h2m6 0h1h2m1 0h2m3 0h1m9 0h2m1 0h2m1 0h2m19 0h2h1h2m4 0h2m7 0h2m150 0h1m69 0h2m10 0h2m21 0h1h2m21 0h1m15 0h2m1 0h2m4 0h2m12 0h1m8 0h1h2m31 0h2m33 0h1h2m1 0h2m15 0h1M275 154.5h2h1h2m3 0h1m6 0h2m3 0h1h2m6 0h1m9 0h2m9 0h1m11 0h1m15 0h2m6 0h1h2m12 0h1m2 0h1h2h1m2 0h1m8 0h1m125 0h1m144 0h2m6 0h1m2 0h1m12 0h2m16 0h2m75 0h1m2 0h1h2m22 0h2m7 0h2m4 0h2M304 157.5h1m2 0h1m2 0h1m26 0h1m5 0h1m3 0h2m7 0h2m3 0h1m5 0h1m3 0h2m7 0h2m12 0h1m270 0h2m6 0h1m6 0h2m1 0h2m9 0h1h2m1 0h2h1m6 0h2m4 0h2h1m6 0h2m1 0h2h1m2 0h1h2m4 0h2m31 0h2m13 0h2m4 0h2h1h2m1 0h2m3 0h1m2 0h1m2 0h1h2m3 0h1m5 0h1m3 0h2M278 160.5h2m76 0h2m1 0h2m10 0h2m6 0h1m2 0h1h2m184 0h2m88 0h2m12 0h1h2m9 0h1m6 0h2m4 0h2h1h2m3 0h1m2 0h1m5 0h1m6 0h2m13 0h2h1m15 0h2m15 0h1m14 0h1m6 0h2m6 0h1m3 0h2m1 0h2m10 0h2m1 0h2M275 163.5h2m34 0h2m19 0h2m25 0h2h1m11 0h1m5 0h1m176 0h1m102 0h2h1h2m9 0h1m12 0h2m12 0h1m5 0h1h2m4 0h2m1 0h2m4 0h2m3 0h1m2 0h1m5 0h1m48 0h2h1h2m18 0h1m3 0h2m7 0h2M292 166.5h1m11 0h1m30 0h2m327 0h1h2m4 0h2m1 0h2m1 0h2m13 0h2h1m9 0h2m3 0h1m12 0h2m13 0h2h1m15 0h2m15 0h1m12 0h2m1 0h2m1 0h2h1h2m6 0h1h2m4 0h2m9 0h1h2m1 0h2M350 169.5h2m15 0h1m297 0h2h1m6 0h2m13 0h2m18 0h1h2h1m2 0h1m3 0h2m9 0h1h2m6 0h1m11 0h1m32 0h1h2h1m6 0h2m1 0h2m4 0h2m3 0h1m9 0h2h1h2h1m2 0h1h2M535 172.5h1m20 0h1m107 0h1h2h1m5 0h1h2m1 0h2m13 0h2m4 0h2m1 0h2m1 0h2h1m2 0h1m3 0h2m12 0h1m8 0h1m66 0h2h1m2 0h1m5 0h1m3 0h2m1 0h2h1h2m1 0h2M668 175.5h2h1h2m3 0h1m6 0h2m4 0h2m10 0h2h1m6 0h2h1m3 0h2m1 0h2h1m2 0h1m9 0h2m6 0h1h2m54 0h1m2 0h1m2 0h1m5 0h1m2 0h1m2 0h1M661 178.5h1m158 0h1M547 181.5h1m272 0h1M566 193.5h2M535 196.5h1M539 199.5h2M538 208.5h1M544 211.5h1m24 0h2M565 217.5h1"/>
<path stroke="#00ffcc" stroke-width="2" d="M409 71h1m39 0h2h1m17 0h1m35 0h1m8 0h1M394 73h1m14 0h1m12 0h2m45 0h1m3 0h2m16 0h2m4 0h2m9 0h1m11 0h1m65 0h1m6 0h2M367 75h1m32 0h1m5 0h1m12 0h2m54 0h1m17 0h1h2m9 0h1m15 0h2m1 0h2m15 0h1m27 0h2m16 0h2m1 0h2M373 77h1m47 0h1m8 0h1h2m4 0h2m36 0h1m2 0h1m3 0h2h1h2h1h2m1 0h2m6 0h1h2h1h2m1 0h2m1 0h2m7 0h2m1 0h2m13 0h2m51 0h1m6 0h2M394 79h1m33 0h2m3 0h1m3 0h2m37 0h2m1 0h2m4 0h2m1 0h2h1m3 0h2m4 0h2m87 0h1m3 0h2m3 0h1m8 0h1M314 81h2h1m84 0h2h1h2m6 0h1m8 0h1m6 0h2m79 0h2m13 0h2h1m11 0h1m17 0h1m2 0h1m9 0h2m18 0h1m9 0h2m1 0h2h1h2m12 0h1M332 83h2m13 0h2m63 0h1m5 0h1m2 0h1m6 0h2m3 0h1m56 0h1m48 0h2m1 0h2m3 0h1m6 0h2m9 0h1m2 0h1m33 0h2m10 0h2m1 0h2h1h2M388 85h1m32 0h1m6 0h2m195 0h1h2h1h2M332 87h2m67 0h2h1m8 0h1m8 0h1m191 0h1h2m9 0h1h2M310 89h1m23 0h1h2m12 0h1m51 0h2h1m12 0h2m204 0h1M311 91h2m1 0h2m9 0h1m6 0h2m13 0h2m52 0h2h1m6 0h2h1m15 0h2m192 0h1m2 0h1M313 93h1m8 0h1m5 0h1m5 0h1m2 0h1m5 0h1m3 0h2m12 0h1m23 0h1m17 0h1h2m9 0h1m2 0h1m8 0h1m126 0h2m58 0h2m6 0h1m2 0h1M310 95h1h2m18 0h1m5 0h1m41 0h1m21 0h2m15 0h1m195 0h2m6 0h1m2 0h1h2h1M314 97h2m4 0h2h1m2 0h1m8 0h1m8 0h1m3 0h2m52 0h2h1h2m4 0h2m3 0h1h2m10 0h2m1 0h2m184 0h2m7 0h2M311 99h2m18 0h1m15 0h2m52 0h2m18 0h1m6 0h2m1 0h2h1m188 0h1m9 0h2M311 101h2m1 0h2m3 0h1m6 0h2m21 0h1m48 0h2m4 0h2m9 0h1m197 0h1m11 0h1M310 103h1m8 0h1m6 0h2m66 0h1m17 0h1h2h1m12 0h2M319 105h1m2 0h1h2m1 0h2m4 0h2m10 0h2h1m2 0h1m8 0h1m33 0h2m7 0h2h1h2m4 0h2m4 0h2m214 0h2m6 0h1h2m10 0h2M314 107h2m10 0h2m3 0h1m11 0h1m5 0h1m23 0h1m18 0h2h1m3 0h2m4 0h2m4 0h2m3 0h1m5 0h1m6 0h2m184 0h2m16 0h2m1 0h2h1m3 0h2m4 0h2m151 0h2m6 0h1M310 109h1m8 0h1h2h1m12 0h2h1m5 0h1h2h1m2 0h1m53 0h1h2m4 0h2m25 0h2m189 0h1m6 0h2h1m2 0h1m2 0h1m3 0h2m1 0h2m7 0h2m135 0h1h2m3 0h1m8 0h1m5 0h1h2M310 111h1m8 0h1h2m6 0h1m2 0h1m12 0h2m33 0h1h2h1m18 0h2m7 0h2h1h2m16 0h2m205 0h2h1m3 0h2h1h2m6 0h1m132 0h2m24 0h1M320 113h2m3 0h1m5 0h1h2m3 0h1m6 0h2m3 0h1m38 0h1m3 0h2m9 0h1h2m4 0h2h1m20 0h1m183 0h2m15 0h1m5 0h1m9 0h2m3 0h1m114 0h2m24 0h1m2 0h1m11 0h1m5 0h1M335 115h2m12 0h1m21 0h2h1m6 0h2m10 0h2m19 0h2m18 0h1m45 0h2m163 0h2m6 0h1m2 0h1h2m21 0h1m14 0h1m33 0h2m6 0h1m5 0h1m45 0h2m4 0h2h1m15 0h2m13 0h2M311 117h2m3 0h1h2h1h2h1m9 0h2m3 0h1m6 0h2h1m11 0h1m53 0h1h2h1m218 0h1m17 0h1m80 0h1m14 0h1m2 0h1m50 0h1h2m19 0h2M310 119h1h2m3 0h1m2 0h1m5 0h1h2m1 0h2m4 0h2h1m6 0h2m33 0h1m14 0h1m5 0h1h2m25 0h2m49 0h2m58 0h2h1m5 0h1m65 0h1m36 0h2m16 0h2m27 0h1m18 0h2m1 0h2m51 0h1m14 0h1m8 0h1h2m10 0h2m7 0h2m1 0h2h1M314 121h2h1h2m3 0h1m2 0h1m5 0h1m2 0h1m8 0h1m5 0h1m20 0h1m14 0h1m8 0h1m6 0h2m7 0h2h1m5 0h1m63 0h2m9 0h1m32 0h1m6 0h2h1h2m4 0h2m13 0h2m9 0h1m42 0h2h1m23 0h1m8 0h1h2m1 0h2m3 0h1m23 0h1m23 0h1m15 0h2h1m6 0h2m13 0h2m1 0h2m7 0h2m37 0h2h1m2 0h1m2 0h1m6 0h2h1m8 0h1m2 0h1M320 123h2h1m8 0h1h2h1h2m24 0h1m11 0h1m27 0h2h1m24 0h2m46 0h2m6 0h1h2m6 0h1h2m12 0h1m8 0h1m24 0h2m1 0h2m10 0h2m7 0h2h1m42 0h2m22 0h2m12 0h1h2m4 0h2m18 0h1m8 0h1m18 0h2m15 0h1m5 0h1m5 0h1m6 0h2m6 0h1m5 0h1m15 0h2m27 0h1m2 0h1h2h1m2 0h1m2 0h1m8 0h1m2 0h1M310 125h1h2m6 0h1m2 0h1m2 0h1h2m1 0h2h1h2m1 0h2m22 0h2m12 0h1m8 0h1m11 0h1m18 0h2h1h2m3 0h1m54 0h2m4 0h2h1h2m3 0h1m2 0h1h2m28 0h2m21 0h1m9 0h2h1m3 0h2m4 0h2m16 0h2m4 0h2m3 0h1m2 0h1h2m4 0h2m12 0h1m2 0h1m6 0h2h1h2m1 0h2m4 0h2m3 0h1m2 0h1m3 0h2m9 0h1h2h1h2m10 0h2m9 0h1m2 0h1m11 0h1m2 0h1m6 0h2h1m5 0h1h2m4 0h2m3 0h1m3 0h2m1 0h2m4 0h2m40 0h2m12 0h1h2h1m6 0h2m3 0h1m3 0h2M314 127h2m3 0h1m8 0h1m2 0h1m8 0h1m5 0h1h2m30 0h1m8 0h1m11 0h1m3 0h2m4 0h2m7 0h2m18 0h1m3 0h2m4 0h2h1m9 0h2m6 0h1m5 0h1h2m10 0h2h1m2 0h1m6 0h2m7 0h2m1 0h2m3 0h1m3 0h2m1 0h2m9 0h1m6 0h2m3 0h1m8 0h1m2 0h1m3 0h2h1m2 0h1m20 0h1m14 0h1m12 0h2m13 0h2h1m3 0h2h1m6 0h2m12 0h1m5 0h1m3 0h2m16 0h2h1h2m19 0h2h1m2 0h1h2m12 0h1m2 0h1m2 0h1m5 0h1m9 0h2m28 0h2m4 0h2h1h2m10 0h2h1h2m13 0h2h1h2M311 129h2m1 0h2h1m8 0h1m5 0h1m11 0h1h2m33 0h1h2m4 0h2h1m23 0h1m2 0h1h2m1 0h2m3 0h1m18 0h2m6 0h1h2m3 0h1m3 0h2m1 0h2m3 0h1m3 0h2m1 0h2m4 0h2m4 0h2m3 0h1m5 0h1h2h1m5 0h1h2m6 0h1m3 0h2m3 0h1m11 0h1m24 0h2m19 0h2m3 0h1m2 0h1m2 0h1m2 0h1m5 0h1h2m9 0h1m8 0h1m2 0h1h2m10 0h2m4 0h2m6 0h1m5 0h1m5 0h1m6 0h2m9 0h1m6 0h2m10 0h2m4 0h2m4 0h2h1h2m3 0h1h2m4 0h2m6 0h1m2 0h1m8 0h1m2 0h1h2m28 0h2h1m3 0h2m12 0h1m20 0h1M310 131h1m5 0h1m5 0h1h2m4 0h2m6 0h1m3 0h2h1m2 0h1m12 0h2m6 0h1m20 0h1m9 0h2m6 0h1m3 0h2m1 0h2h1h2h1m2 0h1h2m6 0h1h2m7 0h2h1h2h1h2m7 0h2h1h2m9 0h1h2m1 0h2m6 0h1m5 0h1m8 0h1m6 0h2m3 0h1h2m1 0h2m1 0h2m3 0h1h2m33 0h1h2h1m2 0h1m6 0h2m13 0h2m1 0h2m3 0h1m11 0h1m3 0h2h1m6 0h2h1m2 0h1m6 0h2m9 0h1m6 0h2m13 0h2m27 0h1m2 0h1m2 0h1m8 0h1h2m1 0h2h1m3 0h2m1 0h2h1h2m12 0h1m12 0h2m1 0h2m16 0h2m15 0h1m2 0h1h2m13 0h2M292 133h1m21 0h2m6 0h1m3 0h2m7 0h2h1m6 0h2m1 0h2m33 0h1m9 0h2m6 0h1m8 0h1m3 0h2m7 0h2m9 0h1m6 0h2m10 0h2m4 0h2m4 0h2h1m2 0h1m11 0h1m15 0h2m4 0h2m6 0h1m3 0h2m7 0h2m30 0h1m12 0h2m15 0h1m9 0h2m1 0h2h1m2 0h1m14 0h1h2h1m2 0h1m6 0h2m3 0h1m5 0h1m6 0h2m9 0h1m11 0h1m5 0h1m2 0h1h2h1m17 0h1h2m4 0h2m3 0h1m2 0h1m2 0h1h2h1m3 0h2h1h2h1h2m4 0h2m1 0h2m10 0h2m28 0h2m6 0h1m12 0h2m10 0h2m1 0h2m1 0h2M280 135h1m32 0h1h2h1m8 0h1h2m1 0h2h1m5 0h1m2 0h1m3 0h2h1h2m7 0h2m24 0h1m5 0h1m5 0h1m8 0h1m3 0h2m10 0h2m3 0h1m5 0h1m12 0h2m1 0h2m6 0h1m17 0h1h2m22 0h2h1m6 0h2m7 0h2m6 0h1m41 0h1m18 0h2m4 0h2m3 0h1m3 0h2m3 0h1h2h1m14 0h1h2h1m3 0h2m1 0h2m24 0h1m12 0h2m1 0h2h1m5 0h1m2 0h1m5 0h1m2 0h1m9 0h2h1m2 0h1h2m3 0h1h2m3 0h1m3 0h2m3 0h1m2 0h1h2h1m3 0h2m13 0h2m34 0h2h1m15 0h2m13 0h2M311 137h2m3 0h1m9 0h2m3 0h1m2 0h1h2m13 0h2m12 0h1m50 0h1h2m1 0h2m3 0h1m5 0h1h2m1 0h2m12 0h1m14 0h1m38 0h1h2h1m8 0h1m47 0h1m21 0h2m4 0h2m4 0h2m9 0h1m2 0h1m14 0h1m15 0h2m4 0h2m4 0h2m3 0h1m5 0h1m2 0h1m21 0h2h1m3 0h2m6 0h1h2h1m2 0h1h2m13 0h2m1 0h2h1m5 0h1m2 0h1m15 0h2m13 0h2m12 0h1h2h1m3 0h2h1m11 0h1M290 139h2m4 0h2m9 0h1h2m4 0h2m10 0h2m6 0h1m9 0h2m1 0h2h1h2h1h2m7 0h2m9 0h1m8 0h1m6 0h2m16 0h2h1m3 0h2m7 0h2m3 0h1m3 0h2m1 0h2m21 0h1m47 0h1m36 0h2m45 0h1m2 0h1m2 0h1m23 0h1h2m3 0h1m2 0h1m9 0h2m1 0h2m15 0h1h2m3 0h1m8 0h1m3 0h2m1 0h2m10 0h2m7 0h2m4 0h2m7 0h2m1 0h2m3 0h1m5 0h1h2m1 0h2m34 0h2m15 0h1m2 0h1m2 0h1m3 0h2m10 0h2m15 0h1M277 141h1h2m1 0h2m6 0h1m6 0h2m16 0h2m3 0h1m12 0h2m3 0h1m5 0h1m3 0h2m1 0h2m21 0h1m26 0h1m11 0h1m11 0h1m14 0h1m23 0h1m5 0h1m87 0h2m79 0h2m13 0h2m6 0h1m2 0h1m3 0h2m4 0h2m3 0h1h2m7 0h2m3 0h1m11 0h1m5 0h1m8 0h1h2m3 0h1m5 0h1m2 0h1h2m46 0h2m3 0h1m14 0h1M278 143h2m16 0h2m1 0h2m3 0h1m3 0h2m6 0h1m2 0h1h2m4 0h2m4 0h2h1m2 0h1m3 0h2h1m9 0h2m4 0h2h1m5 0h1m5 0h1m50 0h1m132 0h2m94 0h2m12 0h1h2h1m11 0h1m5 0h1h2h1m2 0h1m14 0h1m2 0h1m8 0h1m2 0h1m2 0h1m2 0h1m12 0h2m25 0h2m12 0h1h2m6 0h1m12 0h2m13 0h2M275 145h2m3 0h1m8 0h1m12 0h2m4 0h2m1 0h2m16 0h2m1 0h2m1 0h2m13 0h2m19 0h2m9 0h1m11 0h1m3 0h2m34 0h2m190 0h2m36 0h1h2m3 0h1m8 0h1m5 0h1m18 0h2m1 0h2h1m2 0h1m5 0h1m5 0h1m3 0h2h1m2 0h1m6 0h2m13 0h2m27 0h1m3 0h2m19 0h2m15 0h1M275 147h2m3 0h1m9 0h2m10 0h2m3 0h1m6 0h2m3 0h1m24 0h2m1 0h2m3 0h1h2m6 0h1h2m9 0h1h2m4 0h2m12 0h1m189 0h2m73 0h2h1m9 0h2h1m14 0h1m6 0h2h1m8 0h1m5 0h1m2 0h1m8 0h1h2h1m2 0h1m8 0h1m15 0h2m33 0h1h2h1M280 149h1m11 0h1m9 0h2m7 0h2m6 0h1m2 0h1m2 0h1m5 0h1m2 0h1m2 0h1m9 0h2h1m6 0h2m3 0h1m9 0h2m9 0h1m3 0h2m12 0h1m6 0h2m9 0h1m206 0h1m15 0h2m19 0h2m6 0h1h2h1h2m1 0h2m1 0h2m1 0h2m1 0h2h1m11 0h1m9 0h2h1m2 0h1m2 0h1m6 0h2m3 0h1h2m3 0h1h2h1m3 0h2m25 0h2m15 0h1m21 0h2"/>
<path stroke="#00ffcc" stroke-width="3" d="M298 151.5h1m3 0h2m4 0h2m22 0h2h1m2 0h1m11 0h1h2m1 0h2m12 0h1m5 0h1m8 0h1m3 0h2h1m5 0h1m266 0h1h2m6 0h1h2m1 0h2h1m6 0h2h1h2m6 0h1m2 0h1m2 0h1h2m7 0h2h1m3 0h2m6 0h1h2m45 0h1m18 0h2m19 0h2m7 0h2M280 154.5h1m11 0h1m12 0h2m25 0h2m13 0h2m22 0h2h1m18 0h2m117 0h1m50 0h1m5 0h1m90 0h2m1 0h2m6 0h1m3 0h2m1 0h2m6 0h1h2h1m5 0h1m2 0h1m3 0h2h1h2m6 0h1h2m7 0h2m7 0h2m3 0h1h2m16 0h2m39 0h1m2 0h1m2 0h1h2m6 0h1m3 0h2m7 0h2M275 157.5h2h1m2 0h1m8 0h1m5 0h1h2m4 0h2m4 0h2m22 0h2m16 0h2m21 0h1m12 0h2h1m2 0h1m8 0h1m155 0h1m105 0h2m12 0h1m11 0h1h2m1 0h2m7 0h2m1 0h2h1m2 0h1m8 0h1m9 0h2m9 0h1m15 0h2m30 0h1m8 0h1m3 0h2m1 0h2m22 0h2M308 160.5h2m12 0h1m66 0h2m3 0h1m140 0h1m126 0h2h1m23 0h1h2m3 0h1h2m10 0h2m18 0h1m2 0h1h2m3 0h1m12 0h2m46 0h2m12 0h1m2 0h1h2h1m2 0h1m2 0h1m3 0h2M289 163.5h1m336 0h2m37 0h2m7 0h2h1h2m1 0h2m1 0h2m7 0h2m3 0h1m3 0h2m9 0h1m12 0h2m4 0h2m22 0h2m13 0h2m22 0h2h1m5 0h1m11 0h1m3 0h2h1M373 166.5h1m20 0h1m161 0h1m3 0h2m1 0h2m94 0h2h1m5 0h1m2 0h1m2 0h1m6 0h2m3 0h1m2 0h1h2m10 0h2m3 0h1h2m1 0h2m1 0h2m12 0h1m2 0h1h2m3 0h1m8 0h1h2h1h2h1h2m16 0h2m25 0h2m15 0h1m8 0h1m3 0h2M659 169.5h2m1 0h2m9 0h1m8 0h1h2h1h2m6 0h1m11 0h1m6 0h2m3 0h1m2 0h1h2h1m2 0h1h2m12 0h1h2m7 0h2m1 0h2m39 0h1m2 0h1m2 0h1m8 0h1m2 0h1m2 0h1m6 0h2M334 172.5h1m38 0h1m288 0h2m12 0h1m2 0h1m2 0h1m2 0h1m3 0h2m3 0h1m2 0h1m5 0h1m3 0h2m1 0h2m4 0h2h1h2h1m18 0h2h1h2h1m42 0h2m1 0h2m1 0h2m4 0h2h1m8 0h1h2m1 0h2h1m2 0h1M677 175.5h2h1h2m4 0h2m3 0h1m14 0h1m8 0h1m17 0h1m54 0h2m4 0h2m22 0h2m1 0h2m1 0h2M682 178.5h1m36 0h2m93 0h1m2 0h1M569 190.5h2"/>
<path stroke="#00ff99" stroke-width="2" d="M442 71h1m9 0h2m7 0h2m3 0h1h2m3 0h1M380 73h2m67 0h2m21 0h1m8 0h1m32 0h1m69 0h2M409 75h1m12 0h2m49 0h2m22 0h2m7 0h2m3 0h1m11 0h1m68 0h1M416 77h2m4 0h2m57 0h1m14 0h1m11 0h1m2 0h1m3 0h2m3 0h1m2 0h1m68 0h1m2 0h1M475 79h1m2 0h1m3 0h2m3 0h1m5 0h1m2 0h1h2h1m2 0h1h2m4 0h2m1 0h2m4 0h2h1h2h1m66 0h2m4 0h2m1 0h2M410 81h2m6 0h1m56 0h1m8 0h1m2 0h1h2h1m5 0h1m3 0h2h1m9 0h2m30 0h1m51 0h2h1M410 83h2m7 0h2m6 0h1m65 0h1m32 0h1m6 0h2m3 0h1m2 0h1m15 0h2m1 0h2m39 0h1m6 0h2M401 85h2m3 0h1m5 0h1m14 0h1m117 0h2m7 0h2m42 0h1m3 0h2m4 0h2h1m5 0h1m3 0h2m1 0h2M404 87h2m21 0h1h2m4 0h2m109 0h2m7 0h2m33 0h1m21 0h2m4 0h2h1m3 0h2m3 0h1M404 89h2m15 0h1m5 0h1m6 0h2m103 0h2m72 0h1h2m1 0h2m6 0h1M319 91h1m11 0h1m2 0h1h2m67 0h2m3 0h1m6 0h2m3 0h1m5 0h1m117 0h2m7 0h2m57 0h1h2m1 0h2h1m6 0h2h1M346 93h1m54 0h2m7 0h2h1m6 0h2h1m6 0h2m181 0h2h1m17 0h1M347 95h2h1m54 0h2m6 0h1m2 0h1m5 0h1m5 0h1m51 0h2m60 0h1m3 0h2m64 0h2M311 97h2m6 0h1m15 0h2m84 0h1m5 0h1m185 0h1h2h1m6 0h2h1m2 0h1M319 99h1m29 0h1m62 0h1m2 0h1h2m75 0h1m51 0h2m64 0h2h1h2h1m12 0h2M332 101h2m1 0h2m7 0h2m1 0h2m67 0h2m3 0h1m2 0h1m3 0h2m115 0h2m7 0h2m45 0h1m12 0h2m1 0h2m3 0h1m3 0h2m1 0h2M325 103h1m6 0h2h1m2 0h1m5 0h1m60 0h2m15 0h1m192 0h2m1 0h2m6 0h1h2m13 0h2M331 105h1m2 0h1m8 0h1m3 0h2m45 0h1m17 0h1h2m6 0h1m9 0h2m112 0h2m66 0h1h2m1 0h2h1m2 0h1m5 0h1m9 0h2M311 107h2m6 0h1m2 0h1m9 0h2h1m66 0h2h1m33 0h2m106 0h2m7 0h2m46 0h2m21 0h1m2 0h1m21 0h2m147 0h1M311 109h2m18 0h1h2m13 0h2m52 0h2m9 0h1m3 0h2m9 0h1h2m1 0h2m121 0h2m58 0h2m1 0h2m19 0h2m6 0h1m6 0h2m145 0h2m21 0h1M325 111h1m8 0h1h2m6 0h1m3 0h2m72 0h1m6 0h2m3 0h1m45 0h2m132 0h1h2m12 0h1m2 0h1h2m1 0h2h1m5 0h1m14 0h1m141 0h2M310 113h1m3 0h2m6 0h1m12 0h2m6 0h1m2 0h1h2m45 0h1m3 0h2m1 0h2m25 0h2m1 0h2m43 0h2m1 0h2m108 0h1m23 0h1m17 0h1m3 0h2m1 0h2m6 0h1m2 0h1m3 0h2m1 0h2m139 0h2m1 0h2m18 0h1M310 115h1h2m3 0h1m5 0h1h2h1h2m4 0h2h1m8 0h1m60 0h2m4 0h2h1m3 0h2h1m2 0h1m5 0h1h2m1 0h2m91 0h2h1m86 0h1m17 0h1m2 0h1m3 0h2h1m5 0h1h2h1m8 0h1m75 0h2m63 0h1m17 0h1M310 117h1m3 0h2m9 0h1h2m12 0h1m2 0h1m3 0h2m52 0h2m7 0h2m16 0h2m1 0h2m42 0h1h2m1 0h2m9 0h1m54 0h2m7 0h2m55 0h2m1 0h2m1 0h2m24 0h1h2m3 0h1h2m4 0h2h1m69 0h2m16 0h2m49 0h2m1 0h2M331 119h1h2h1m47 0h1m21 0h2m4 0h2h1m2 0h1m17 0h1m59 0h1m6 0h2m24 0h1m6 0h2m1 0h2m25 0h2h1m32 0h1m29 0h1m5 0h1h2m1 0h2m1 0h2m3 0h1h2m3 0h1m2 0h1m114 0h2m45 0h1m2 0h1M319 121h1m6 0h2m4 0h2m12 0h1h2m55 0h2m15 0h1m6 0h2m4 0h2m25 0h2m13 0h2h1h2m3 0h1h2m3 0h1m5 0h1m3 0h2m22 0h2m12 0h1h2h1m5 0h1m11 0h1m3 0h2h1h2m21 0h1h2m6 0h1m3 0h2m1 0h2m7 0h2h1h2m3 0h1m11 0h1m3 0h2h1m2 0h1h2m3 0h1m8 0h1m57 0h2m15 0h1m5 0h1m8 0h1m3 0h2m46 0h2m1 0h2m9 0h1m3 0h2M314 123h2m9 0h1m11 0h1m5 0h1m2 0h1m57 0h2m15 0h1m2 0h1m2 0h1m21 0h2h1m5 0h1m20 0h1m9 0h2h1m9 0h2m1 0h2m7 0h2m12 0h1m6 0h2h1m8 0h1m11 0h1m2 0h1m2 0h1h2h1m18 0h2m3 0h1h2h1m8 0h1h2m1 0h2m1 0h2h1m2 0h1m2 0h1h2h1m2 0h1m6 0h2h1m8 0h1m2 0h1m2 0h1m6 0h2h1m41 0h1m5 0h1m15 0h2m3 0h1m3 0h2m87 0h1M316 125h1m6 0h2m18 0h1m5 0h1m51 0h2m1 0h2m21 0h1m23 0h1m9 0h2m6 0h1m5 0h1m2 0h1m2 0h1m5 0h1m12 0h2m6 0h1m9 0h2m6 0h1m8 0h1m2 0h1m3 0h2h1m11 0h1m3 0h2h1m26 0h1m2 0h1m2 0h1m8 0h1h2m3 0h1m5 0h1h2m9 0h1h2m16 0h2m1 0h2m25 0h2m3 0h1m8 0h1m11 0h1m12 0h2m15 0h1m11 0h1m5 0h1m3 0h2m31 0h2m7 0h2m3 0h1m9 0h2h1h2M311 127h2m9 0h1m3 0h2m1 0h2m1 0h2m1 0h2m6 0h1m57 0h2m9 0h1h2m3 0h1m5 0h1m9 0h2m6 0h1m23 0h1h2m1 0h2m9 0h1h2m3 0h1m6 0h2h1m8 0h1m5 0h1m6 0h2h1m17 0h1m18 0h2m25 0h2h1m5 0h1h2h1m2 0h1h2h1h2m1 0h2h1h2m10 0h2h1m2 0h1m15 0h2h1m9 0h2m30 0h1m11 0h1m11 0h1m18 0h2m10 0h2h1m6 0h2h1h2h1m15 0h2m12 0h1m17 0h1h2h1m5 0h1h2m1 0h2m4 0h2M310 129h1m9 0h2h1m12 0h2h1m8 0h1m2 0h1m21 0h2m19 0h2h1m12 0h2h1h2m18 0h1h2m1 0h2m3 0h1m2 0h1m3 0h2h1h2m3 0h1h2m1 0h2m3 0h1m6 0h2m9 0h1m15 0h2m6 0h1h2m7 0h2m3 0h1m35 0h1m2 0h1m2 0h1m3 0h2m18 0h1h2m1 0h2m1 0h2m1 0h2m3 0h1m17 0h1h2h1m3 0h2m4 0h2m12 0h1m9 0h2h1m3 0h2m4 0h2h1h2m6 0h1m11 0h1m5 0h1m14 0h1m15 0h2m3 0h1h2m4 0h2m1 0h2h1m3 0h2m33 0h1m8 0h1m9 0h2m4 0h2m4 0h2m1 0h2m1 0h2m1 0h2m1 0h2M311 131h2m1 0h2m15 0h1m2 0h1m72 0h2m15 0h1m8 0h1h2m3 0h1m8 0h1m3 0h2m7 0h2h1h2m6 0h1m18 0h2m6 0h1m5 0h1h2m3 0h1m6 0h2m22 0h2m42 0h1m6 0h2m12 0h1m18 0h2m9 0h1h2m13 0h2h1m12 0h2h1h2m4 0h2m3 0h1h2h1m32 0h1m9 0h2m3 0h1h2m4 0h2h1h2m1 0h2m3 0h1m2 0h1m29 0h1m20 0h1m2 0h1m15 0h2h1M275 133h2m33 0h1m20 0h1m2 0h1m14 0h1m66 0h2m1 0h2m13 0h2m24 0h1m6 0h2m37 0h2m13 0h2m18 0h1m42 0h2m7 0h2m12 0h1m15 0h2m1 0h2m1 0h2m10 0h2m10 0h2m4 0h2m3 0h1m3 0h2h1h2m7 0h2m4 0h2m3 0h1m5 0h1m11 0h1m2 0h1m3 0h2m9 0h1m8 0h1m2 0h1m2 0h1m3 0h2h1h2m1 0h2m30 0h1m2 0h1m9 0h2m6 0h1m2 0h1m3 0h2m12 0h1M319 135h1m12 0h2m9 0h1m62 0h1m3 0h2m4 0h2m3 0h1m33 0h2m7 0h2m15 0h1m21 0h2h1m8 0h1m41 0h1m35 0h1m27 0h2m24 0h1m8 0h1m5 0h1m6 0h2h1m12 0h2m33 0h1h2m1 0h2m4 0h2m13 0h2m6 0h1m32 0h1m2 0h1m15 0h2h1m9 0h2m4 0h2m3 0h1M307 137h1m14 0h1h2m4 0h2m1 0h2m10 0h2h1m2 0h1m35 0h1m8 0h1m14 0h1m12 0h2m30 0h1m5 0h1m47 0h1m2 0h1m92 0h1m21 0h2h1m32 0h1m6 0h2m1 0h2m7 0h2h1m2 0h1m11 0h1m9 0h2m3 0h1m3 0h2h1m14 0h1h2m7 0h2m1 0h2m1 0h2m37 0h2m12 0h1h2m3 0h1m12 0h2m3 0h1M275 139h2m3 0h1m41 0h1m9 0h2m72 0h1m9 0h2m189 0h1m45 0h2m6 0h1m5 0h1m2 0h1h2m6 0h1m2 0h1h2h1m2 0h1m2 0h1m5 0h1m5 0h1m5 0h1m2 0h1m8 0h1m17 0h1m3 0h2m4 0h2m1 0h2m31 0h2m16 0h2h1h2m7 0h2m4 0h2M305 141h2m1 0h2h1m15 0h2m3 0h1m3 0h2m34 0h2m24 0h1m33 0h2m102 0h1m84 0h2m48 0h1h2m4 0h2m3 0h1m8 0h1m5 0h1m11 0h1m5 0h1h2h1h2m3 0h1h2m12 0h1m3 0h2m4 0h2m4 0h2m27 0h1m2 0h1m3 0h2h1m9 0h2m4 0h2m4 0h2m4 0h2m1 0h2h1h2M275 143h2m3 0h1m380 0h1m9 0h2m1 0h2m10 0h2m9 0h1m5 0h1m2 0h1m9 0h2m1 0h2m7 0h2m4 0h2m3 0h1m5 0h1m3 0h2m1 0h2h1h2m30 0h1m3 0h2m4 0h2m4 0h2h1m3 0h2m13 0h2M278 145h2m27 0h1m14 0h1m24 0h2h1m2 0h1m3 0h2m303 0h1m5 0h1m3 0h2m4 0h2m1 0h2h1h2m1 0h2m3 0h1m2 0h1m2 0h1m12 0h2m4 0h2m18 0h1m2 0h1m3 0h2h1m5 0h1m2 0h1m32 0h1m3 0h2m10 0h2h1m15 0h2m1 0h2m1 0h2M308 147h2m1 0h2m18 0h1h2m3 0h1m12 0h2m30 0h1m285 0h2h1m5 0h1m2 0h1h2h1h2h1h2m1 0h2m1 0h2m7 0h2m1 0h2m3 0h1h2m4 0h2h1m2 0h1h2m25 0h2m33 0h1m2 0h1h2m4 0h2m9 0h1m15 0h2m3 0h1M275 149h2m30 0h1m83 0h1m269 0h1m6 0h2m9 0h1m2 0h1m20 0h1h2m1 0h2h1m9 0h2m1 0h2h1m2 0h1h2m10 0h2m7 0h2m33 0h1m6 0h2h1m3 0h2m6 0h1m2 0h1m9 0h2m1 0h2m1 0h2h1"/>
<path stroke="#00ff99" stroke-width="3" d="M307 151.5h1m359 0h1m5 0h1m5 0h1h2m21 0h1m2 0h1m2 0h1m5 0h1m3 0h2m1 0h2m6 0h1h2h1m5 0h1h2m1 0h2h1m9 0h2m27 0h1m3 0h2m4 0h2h1h2m3 0h1m5 0h1m18 0h2M307 154.5h1h2m24 0h1m326 0h1m5 0h1h2m9 0h1m3 0h2m6 0h1m14 0h1m2 0h1h2m3 0h1m5 0h1m3 0h2h1m5 0h1m5 0h1m3 0h2m9 0h1m39 0h2m12 0h1m9 0h2m3 0h1M661 157.5h1m5 0h1m2 0h1h2m1 0h2m3 0h1m2 0h1m29 0h1m11 0h1m15 0h2m1 0h2h1m3 0h2m3 0h1m56 0h1m3 0h2h1m5 0h1M307 160.5h1m11 0h1m345 0h2h1m9 0h2h1h2m1 0h2m1 0h2m9 0h1m5 0h1h2m4 0h2m1 0h2m4 0h2m3 0h1h2m1 0h2m10 0h2m1 0h2h1h2m40 0h2m9 0h1h2m6 0h1m3 0h2m4 0h2M664 163.5h1m3 0h2h1m11 0h1m2 0h1m2 0h1h2m3 0h1m14 0h1h2m3 0h1m3 0h2h1m2 0h1m14 0h1m3 0h2h1m5 0h1h2h1m29 0h1m12 0h2m1 0h2m1 0h2m6 0h1m5 0h1m5 0h1m3 0h2M676 166.5h1m6 0h2m18 0h1m8 0h1m2 0h1m2 0h1h2h1m2 0h1m15 0h2m1 0h2m9 0h1m32 0h1m8 0h1m11 0h1m2 0h1h2m1 0h2h1M661 169.5h1m2 0h1m6 0h2m6 0h1h2m6 0h1m2 0h1m5 0h1m9 0h2m7 0h2m16 0h2m4 0h2m12 0h1m15 0h2m28 0h2M668 172.5h2m16 0h2m3 0h1m32 0h1m23 0h1m3 0h2M685 175.5h1m44 0h1m17 0h1m51 0h2m21 0h1M794 178.5h2m4 0h2M547 196.5h1"/>
<path stroke="#00ff66" stroke-width="2" d="M445 71h1h2m7 0h2h1m5 0h1h2m4 0h2m9 0h1M439 73h1m2 0h1m2 0h1m5 0h1m3 0h2h1m3 0h2m1 0h2h1h2m1 0h2M407 75h2m15 0h1m36 0h2m1 0h2h1m2 0h1h2h1m8 0h1m32 0h1m69 0h2h1M406 77h1h2h1m14 0h1m9 0h2m33 0h1m3 0h2m30 0h1m8 0h1m2 0h1m68 0h1h2m1 0h2M406 79h1m2 0h1m9 0h2h1m2 0h1m2 0h1m2 0h1h2m40 0h2m16 0h2m12 0h1h2h1m2 0h1m3 0h2m78 0h1M409 81h1m9 0h2m1 0h2m3 0h1m3 0h2m4 0h2m37 0h2h1h2m4 0h2m4 0h2m1 0h2m9 0h1m2 0h1m6 0h2h1h2h1h2m64 0h2m3 0h1m2 0h1m11 0h1M401 83h2m1 0h2m16 0h2m7 0h2m42 0h1m3 0h2m3 0h1m2 0h1h2m4 0h2h1m3 0h2h1m14 0h1m6 0h2m9 0h1h2m6 0h1m14 0h1m2 0h1h2m1 0h2m1 0h2m18 0h1m3 0h2m1 0h2m1 0h2m4 0h2M419 85h2m1 0h2m10 0h2m43 0h2m4 0h2h1m2 0h1m2 0h1m23 0h1m6 0h2h1m9 0h2m3 0h1m5 0h1m15 0h2m1 0h2h1m24 0h2h1m5 0h1M419 87h2m54 0h1m3 0h2m3 0h1m3 0h2h1m2 0h1m32 0h1m9 0h2m1 0h2m6 0h1m12 0h2m3 0h1m32 0h1m2 0h1h2h1m3 0h2m6 0h1M409 89h1m2 0h1m2 0h1m3 0h2m10 0h2m42 0h1m14 0h1m2 0h1m18 0h2m3 0h1m6 0h2h1m15 0h2m1 0h2m7 0h2m33 0h1m20 0h1m5 0h1m2 0h1h2m1 0h2m1 0h2M419 91h2m1 0h2h1m6 0h2m1 0h2m43 0h2m1 0h2m1 0h2m7 0h2m4 0h2h1m9 0h2m10 0h2h1m9 0h2m1 0h2h1m5 0h1m17 0h1m2 0h1m20 0h1m11 0h1h2m4 0h2m1 0h2m7 0h2M409 93h1m21 0h2m1 0h2m39 0h1m12 0h2m3 0h1h2m28 0h2m13 0h2m4 0h2m16 0h2m24 0h1m5 0h1m21 0h2h1h2m1 0h2m1 0h2M490 95h1m9 0h2m24 0h1m6 0h2m4 0h2m6 0h1m6 0h2m39 0h1m6 0h2m1 0h2m10 0h2h1h2m1 0h2M337 97h1m147 0h2m3 0h1m3 0h2m21 0h1m8 0h1m9 0h2m3 0h1m3 0h2m7 0h2m31 0h2h1m11 0h1m9 0h2m6 0h1h2h1M332 99h2m70 0h2m21 0h1m6 0h2m39 0h1m3 0h2m4 0h2m3 0h1m3 0h2m30 0h1m9 0h2h1m2 0h1m12 0h2m33 0h1m3 0h2h1m2 0h1m3 0h2m4 0h2m7 0h2h1h2m4 0h2M412 101h1m14 0h1m5 0h1h2m39 0h1h2m46 0h2h1m14 0h1m56 0h1m3 0h2m4 0h2m13 0h2M347 103h2m70 0h2m1 0h2h1m2 0h1m3 0h2m1 0h2m1 0h2m36 0h1h2m1 0h2m9 0h1m42 0h2m1 0h2m7 0h2m7 0h2m9 0h1m23 0h1m8 0h1m2 0h1m9 0h2h1m5 0h1m2 0h1h2m4 0h2m1 0h2M409 105h1m27 0h2m39 0h1h2m3 0h1m5 0h1m48 0h2m6 0h1m6 0h2m37 0h2m4 0h2h1h2m7 0h2m10 0h2h1h2M412 107h1m6 0h2m6 0h1m3 0h2m46 0h2m9 0h1m2 0h1m45 0h2h1m47 0h1m8 0h1m9 0h2m1 0h2h1m3 0h2h1h2h1h2m1 0h2M421 109h1m53 0h1h2m1 0h2m1 0h2m3 0h1m48 0h2m7 0h2m40 0h2m9 0h1m3 0h2m7 0h2h1m15 0h2h1h2m7 0h2M311 111h2m9 0h1m14 0h1m68 0h1m20 0h1m48 0h2h1m8 0h1m2 0h1m48 0h2m4 0h2m7 0h2m33 0h1m27 0h2m3 0h1m2 0h1m15 0h2m9 0h1M406 113h1m14 0h1m2 0h1m44 0h1m5 0h1m2 0h1m8 0h1m2 0h1m2 0h1m6 0h2m45 0h1m6 0h2m37 0h2m6 0h1h2m10 0h2h1m8 0h1m11 0h1m3 0h2h1m3 0h2m9 0h1M347 115h2m45 0h1m6 0h2m16 0h2m54 0h1h2h1m5 0h1h2h1h2h1m2 0h1m6 0h2m43 0h2m7 0h2m46 0h2m4 0h2m1 0h2m12 0h1m2 0h1m3 0h2m1 0h2h1m15 0h2m169 0h2M334 117h1h2m67 0h2m13 0h2h1m5 0h1m50 0h1m2 0h1m2 0h1m2 0h1h2m3 0h1h2h1m3 0h2h1m9 0h2m3 0h1m6 0h2h1m6 0h2m4 0h2h1h2m3 0h1m9 0h2m6 0h1h2h1m44 0h1m5 0h1m15 0h2h1m2 0h1m5 0h1h2m6 0h1M347 119h2m67 0h2m3 0h1m9 0h2m28 0h2m3 0h1m2 0h1m6 0h2h1m2 0h1m2 0h1h2h1h2h1m3 0h2m16 0h2m3 0h1m17 0h1m2 0h1m3 0h2h1m9 0h2m4 0h2m4 0h2h1h2m18 0h1m11 0h1h2m4 0h2h1h2m1 0h2h1m5 0h1m8 0h1h2m3 0h1m2 0h1m2 0h1m9 0h2M310 121h1h2m90 0h1m5 0h1m6 0h2m9 0h1m3 0h2m7 0h2m1 0h2m4 0h2h1m6 0h2m9 0h1m5 0h1m12 0h2m1 0h2m1 0h2m1 0h2m3 0h1h2m6 0h1h2m3 0h1m26 0h1m15 0h2h1m24 0h2m6 0h1m3 0h2h1m6 0h2h1m9 0h2m3 0h1m2 0h1m2 0h1m3 0h2m16 0h2m1 0h2m36 0h1m59 0h1m62 0h1M311 123h2m6 0h1m96 0h2m1 0h2m9 0h1h2m6 0h1m2 0h1h2m7 0h2h1m3 0h2h1h2h1m5 0h1h2m3 0h1m6 0h2m3 0h1m11 0h1m2 0h1m6 0h2h1m6 0h2m4 0h2m34 0h2m7 0h2m22 0h2h1m2 0h1m5 0h1m15 0h2m3 0h1m2 0h1m3 0h2m4 0h2m1 0h2m4 0h2m9 0h1m141 0h2M385 125h1m23 0h1m14 0h1m5 0h1h2m1 0h2m3 0h1h2h1h2m1 0h2m1 0h2m4 0h2m1 0h2m4 0h2h1m3 0h2m1 0h2m13 0h2m1 0h2m6 0h1m2 0h1h2h1m3 0h2m1 0h2m3 0h1m2 0h1h2h1m66 0h2m4 0h2m9 0h1m11 0h1m17 0h1m15 0h2m3 0h1m27 0h2m54 0h1m11 0h1m41 0h1m20 0h1M310 127h1m14 0h1m80 0h1h2m7 0h2m4 0h2m6 0h1h2m7 0h2m3 0h1h2h1m3 0h2m4 0h2m3 0h1h2m7 0h2m22 0h2h1m2 0h1h2m1 0h2h1m60 0h2m45 0h1m6 0h2m4 0h2m6 0h1m41 0h1m23 0h1m12 0h2m3 0h1m21 0h2m1 0h2h1m39 0h2m6 0h1h2m1 0h2m12 0h1m2 0h1h2h1M332 129h2m13 0h2m96 0h1m14 0h1m5 0h1h2m3 0h1m18 0h2m18 0h1m95 0h1m15 0h2m61 0h2m33 0h1m24 0h2m4 0h2m40 0h2m6 0h1m5 0h1M319 131h1m12 0h2m103 0h2m15 0h1m5 0h1m62 0h1m99 0h2m42 0h1m18 0h2m60 0h1m39 0h2m4 0h2m1 0h2m4 0h2m4 0h2m3 0h1h2m1 0h2m1 0h2m4 0h2M311 133h2m6 0h1m12 0h2m73 0h2m15 0h1m80 0h1m213 0h2m24 0h1m5 0h1m18 0h2m16 0h2m4 0h2m6 0h1h2m4 0h2m3 0h1m12 0h2M308 135h2m24 0h1m99 0h2m250 0h2m9 0h1m5 0h1m38 0h1m2 0h1h2h1h2m1 0h2h1m33 0h2m4 0h2m1 0h2m3 0h1m5 0h1m2 0h1m5 0h1h2m3 0h1m3 0h2M302 137h2m33 0h1m68 0h1h2m43 0h2m18 0h1m86 0h1m60 0h2m57 0h1m6 0h2m31 0h2h1m2 0h1m15 0h2h1m2 0h1m5 0h1h2h1m39 0h2m1 0h2m10 0h2m1 0h2h1h2m1 0h2m4 0h2m1 0h2M379 139h1m288 0h2m16 0h2m30 0h1m9 0h2m3 0h1m6 0h2h1m2 0h1h2m3 0h1m2 0h1m39 0h2m3 0h1m2 0h1m5 0h1m5 0h1m2 0h1m2 0h1m3 0h2m1 0h2M547 141h1m138 0h2m15 0h1m6 0h2m16 0h2m4 0h2m4 0h2h1m2 0h1m5 0h1h2h1m39 0h2m12 0h1m3 0h2h1m2 0h1M307 143h1m39 0h2m58 0h2m232 0h2m36 0h1m24 0h2m4 0h2m6 0h1m21 0h2h1m3 0h2h1m2 0h1m36 0h2m21 0h1h2h1M668 145h2m33 0h1m11 0h1m3 0h2h1m5 0h1m6 0h2m6 0h1m3 0h2m1 0h2m1 0h2m40 0h2h1h2m3 0h1m5 0h1m2 0h1m3 0h2M677 147h2m12 0h1m42 0h2m4 0h2h1m2 0h1h2m3 0h1h2h1m41 0h1h2m3 0h1h2m3 0h1h2h1m2 0h1h2m1 0h2m4 0h2m1 0h2M296 149h2m7 0h2m360 0h1m17 0h1m5 0h1m5 0h1m18 0h2m3 0h1m11 0h1h2m6 0h1m2 0h1m5 0h1h2m1 0h2m31 0h2m4 0h2m6 0h1h2m7 0h2h1h2h1m2 0h1m6 0h2"/>
<path stroke="#00ff66" stroke-width="3" d="M668 151.5h2m7 0h2m3 0h1m8 0h1m36 0h2m4 0h2m6 0h1m3 0h2m1 0h2m1 0h2h1m44 0h1h2m1 0h2m9 0h1h2m1 0h2m4 0h2M664 154.5h1m6 0h2m9 0h1m9 0h2m22 0h2h1h2m3 0h1m3 0h2h1m9 0h2h1m2 0h1h2m1 0h2h1m62 0h1m2 0h1M659 157.5h2m3 0h1m3 0h2m7 0h2m6 0h1h2m3 0h1m5 0h1m5 0h1m6 0h2m4 0h2m1 0h2m13 0h2h1m5 0h1m3 0h2h1m2 0h1m36 0h2m9 0h1m12 0h2m4 0h2M661 160.5h1m6 0h2h1h2m3 0h1m5 0h1m8 0h1m20 0h1m5 0h1m2 0h1m12 0h2m6 0h1m5 0h1m5 0h1m41 0h1M671 163.5h2m6 0h1m11 0h1m11 0h1h2m12 0h1m9 0h2m3 0h1m15 0h2m48 0h1M562 166.5h1m105 0h2m16 0h2m3 0h1m5 0h1m18 0h2m7 0h2m6 0h1h2m6 0h1m56 0h1h2M668 169.5h2m7 0h2m67 0h2h1M754 172.5h1m44 0h1"/>
<path stroke="#00ff33" stroke-width="2" d="M439 71h1h2m1 0h2m3 0h1m5 0h1m5 0h1M443 73h2m3 0h1m5 0h1m3 0h2m3 0h1M442 75h1m2 0h1h2m1 0h2h1m3 0h2h1m9 0h2M451 77h1m9 0h2m1 0h2h1m3 0h2h1m24 0h2m85 0h2M422 79h2m10 0h2m25 0h2m3 0h1m2 0h1m11 0h1m32 0h1m72 0h2m3 0h1M424 81h1m5 0h1m3 0h2m33 0h1h2m1 0h2m7 0h2m13 0h2h1m3 0h2m1 0h2m3 0h1m2 0h1m8 0h1m62 0h1m3 0h2m1 0h2M407 83h2m15 0h1m5 0h1m3 0h2m1 0h2m37 0h2h1m3 0h2m1 0h2m4 0h2m6 0h1m3 0h2m1 0h2m3 0h1h2m4 0h2h1h2m64 0h2m1 0h2h1m2 0h1m8 0h1M409 85h1m20 0h1m6 0h2m36 0h1h2h1m5 0h1m3 0h2m4 0h2h1m3 0h2h1h2m3 0h1m12 0h2m10 0h2h1m2 0h1h2m1 0h2h1m20 0h1m23 0h1h2m4 0h2m1 0h2m3 0h1h2M409 87h1m14 0h1m51 0h2m7 0h2h1m3 0h2m1 0h2m4 0h2h1h2m6 0h1h2m4 0h2h1m3 0h2m7 0h2m3 0h1m2 0h1h2h1m17 0h1h2m1 0h2h1h2m16 0h2m4 0h2h1h2m1 0h2m4 0h2h1m12 0h2M406 89h1m17 0h1m5 0h1m6 0h2m39 0h1h2m1 0h2h1h2h1h2m1 0h2m1 0h2h1m3 0h2h1m3 0h2h1m24 0h2m1 0h2h1m2 0h1m2 0h1m12 0h2m4 0h2h1m2 0h1m15 0h2m1 0h2m3 0h1h2h1m2 0h1m2 0h1h2m4 0h2m1 0h2M406 91h1m30 0h2m30 0h1m5 0h1h2h1m5 0h1m3 0h2m3 0h1m2 0h1m12 0h2h1m6 0h2m13 0h2m3 0h1m3 0h2h1m12 0h2h1h2m28 0h2m4 0h2h1m5 0h1m5 0h1m5 0h1m6 0h2M422 93h2h1m44 0h1m6 0h2m1 0h2m1 0h2h1h2h1m2 0h1m5 0h1m3 0h2h1m5 0h1m8 0h1h2m6 0h1m6 0h2m1 0h2h1m2 0h1m5 0h1m17 0h1h2m18 0h1m3 0h2h1h2m3 0h1h2h1h2h1h2m1 0h2m6 0h1M406 95h1m12 0h2m3 0h1m5 0h1h2m1 0h2m33 0h1m5 0h1m2 0h1m5 0h1h2m1 0h2m3 0h1h2h1m6 0h2m4 0h2m1 0h2m3 0h1m6 0h2m9 0h1h2h1m18 0h2m3 0h1h2h1h2h1h2m13 0h2m1 0h2h1h2m6 0h1m2 0h1m6 0h2h1m5 0h1M406 97h1h2h1m9 0h2m9 0h1m3 0h2m1 0h2m36 0h1h2h1h2m3 0h1m2 0h1h2m3 0h1m2 0h1m3 0h2m10 0h2m1 0h2m7 0h2m9 0h1m2 0h1h2m3 0h1m2 0h1m15 0h2h1m2 0h1m21 0h2h1h2h1h2h1h2m1 0h2m4 0h2h1M406 99h1m2 0h1m9 0h2m3 0h1m5 0h1m45 0h2m6 0h1m2 0h1h2m1 0h2m7 0h2m15 0h1m6 0h2m7 0h2m4 0h2m1 0h2m13 0h2m6 0h1h2m19 0h2m1 0h2m4 0h2m1 0h2h1m3 0h2m16 0h2M409 101h1m9 0h2m1 0h2m6 0h1h2m4 0h2m39 0h1h2m1 0h2h1h2h1m2 0h1m2 0h1h2h1m3 0h2h1h2m3 0h1h2m1 0h2m19 0h2m1 0h2m1 0h2m3 0h1m2 0h1m15 0h2h1h2h1m18 0h2h1m3 0h2h1h2m1 0h2m4 0h2m3 0h1h2m3 0h1m2 0h1h2M406 103h1h2h1m20 0h1m47 0h1m5 0h1h2h1h2m3 0h1h2m4 0h2m10 0h2m10 0h2h1m12 0h2m1 0h2m22 0h2h1m26 0h1m3 0h2m1 0h2h1m3 0h2h1m5 0h1M406 105h1m12 0h2m3 0h1m2 0h1m2 0h1m3 0h2m37 0h2h1h2m4 0h2m1 0h2m1 0h2m3 0h1h2m4 0h2m1 0h2h1m11 0h1h2m6 0h1m6 0h2m1 0h2h1m2 0h1h2m15 0h1h2m1 0h2h1h2m19 0h2h1m5 0h1m2 0h1m9 0h2m10 0h2m7 0h2M347 107h2m57 0h1m23 0h1m38 0h1m3 0h2h1h2h1m5 0h1h2h1h2m4 0h2m4 0h2m10 0h2m3 0h1m8 0h1m6 0h2m1 0h2m4 0h2h1m2 0h1m15 0h2h1h2h1m18 0h2m1 0h2m1 0h2h1h2m3 0h1m8 0h1m18 0h2M406 109h1m15 0h2h1m53 0h1m5 0h1h2m1 0h2h1m2 0h1h2m22 0h2m4 0h2h1m6 0h2m4 0h2h1h2m3 0h1m12 0h2m3 0h1h2h1m20 0h1m2 0h1h2h1m5 0h1m6 0h2h1m5 0h1m2 0h1h2h1m2 0h1h2M332 111h2m75 0h1m9 0h2m1 0h2h1m5 0h1m3 0h2m15 0h1m21 0h2m7 0h2h1h2m6 0h1h2m3 0h1h2m6 0h1h2m1 0h2m10 0h2m7 0h2m1 0h2m3 0h1m2 0h1m17 0h1h2h1m2 0h1m15 0h2m9 0h1m2 0h1m2 0h1h2m4 0h2h1h2m3 0h1m2 0h1m3 0h2m4 0h2m22 0h2M409 113h1m17 0h1m6 0h2m9 0h1m11 0h1m3 0h2m19 0h2h1h2m1 0h2m4 0h2m12 0h1h2m1 0h2m3 0h1m8 0h1m6 0h2m1 0h2m1 0h2h1m3 0h2m18 0h1m2 0h1m26 0h1h2h1h2m7 0h2m1 0h2m6 0h1h2h1m5 0h1h2m1 0h2M430 115h1m3 0h2m3 0h1m5 0h1m5 0h1m5 0h1m3 0h2m6 0h1m3 0h2m19 0h2h1m5 0h1h2m7 0h2m1 0h2h1m2 0h1m12 0h2m1 0h2m1 0h2h1m5 0h1m17 0h1m2 0h1m15 0h2m3 0h1m3 0h2m1 0h2h1h2h1m3 0h2m3 0h1m3 0h2h1h2h1m2 0h1h2m16 0h2M349 117h1m72 0h2m25 0h2m4 0h2h1h2m1 0h2m3 0h1m2 0h1m3 0h2m7 0h2m1 0h2m4 0h2m10 0h2m1 0h2h1h2m7 0h2h1h2m12 0h1h2h1m23 0h1h2m24 0h1m3 0h2h1m2 0h1m2 0h1h2m1 0h2m9 0h1m5 0h1m2 0h1m2 0h1m2 0h1m6 0h2m1 0h2m10 0h2M419 119h2m1 0h2h1m2 0h1m14 0h1h2h1m3 0h2h1m2 0h1m2 0h1h2m3 0h1h2m4 0h2m1 0h2h1m6 0h2m12 0h1m2 0h1m2 0h1m2 0h1m2 0h1h2m7 0h2h1m2 0h1h2m33 0h1m27 0h2m1 0h2m3 0h1m3 0h2m3 0h1h2m10 0h2h1m3 0h2h1m3 0h2m25 0h2h1m141 0h2M439 121h1m2 0h1m2 0h1m6 0h2h1h2h1m5 0h1h2h1m3 0h2m9 0h1m5 0h1m17 0h1m2 0h1h2m7 0h2h1h2h1m60 0h2m6 0h1h2m1 0h2m6 0h1m14 0h1m3 0h2m4 0h2m1 0h2m7 0h2M422 123h2m10 0h2m4 0h2m4 0h2h1m6 0h2m7 0h2h1h2m3 0h1h2m6 0h1m9 0h2m3 0h1h2m6 0h1h2m6 0h1h2m3 0h1h2h1m72 0h2m1 0h2m6 0h1m15 0h2m1 0h2m160 0h2m6 0h1M347 125h2m57 0h1m15 0h2m21 0h1m2 0h1m3 0h2h1m2 0h1m2 0h1m2 0h1m3 0h2m3 0h1m23 0h1m14 0h1m2 0h1h2m67 0h2h1m12 0h2m22 0h2m1 0h2m13 0h2m105 0h1m51 0h2M454 127h1h2m3 0h1m11 0h1m18 0h2m21 0h1h2m6 0h1m102 0h2m96 0h1m98 0h1M422 129h2m16 0h2m72 0h1m3 0h2m3 0h1m129 0h2m93 0h1m39 0h2m7 0h2h1m11 0h1h2h1m2 0h1m2 0h1M335 131h2m10 0h2m165 0h1m126 0h2m60 0h1m95 0h1m2 0h1m8 0h1h2m3 0h1m2 0h1M754 133h1m41 0h1m3 0h2m9 0h1m3 0h2h1m2 0h1M796 135h1m2 0h1m12 0h2h1m5 0h1M677 137h2m69 0h1m47 0h1m14 0h1m8 0h1m2 0h1M710 139h2m72 0h1m3 0h2m6 0h1m14 0h1h2m4 0h2m3 0h1M307 141h1m480 0h2m6 0h1h2h1m2 0h1m8 0h1m6 0h2m3 0h1M733 143h1m60 0h2h1m5 0h1m5 0h1m6 0h2h1h2h1m6 0h2M748 145h1m50 0h1m12 0h2h1m2 0h1m2 0h1m2 0h1M703 147h1m15 0h2m12 0h1m9 0h2m54 0h1m12 0h2m3 0h1m2 0h1m2 0h1M746 149h2h1m5 0h1m44 0h1m11 0h1m11 0h1"/>
<path stroke="#00ff33" stroke-width="3" d="M311 151.5h2m379 0h2m24 0h1m2 0h1m26 0h1m2 0h1m59 0h1m5 0h1m2 0h1m2 0h1M680 154.5h2m52 0h2m12 0h1m3 0h2m46 0h2m18 0h1M752 157.5h2M716 160.5h2m15 0h1m18 0h2M667 163.5h1m66 0h2m4 0h2h1m3 0h2h1M679 166.5h1m2 0h1M703 169.5h1m29 0h1M796 172.5h1M569 181.5h2"/>
<path stroke="#00ff00" stroke-width="2" d="M458 71h2M440 73h2m4 0h2m4 0h2m6 0h1M439 75h1m3 0h2m3 0h1m9 0h2h1m2 0h1M440 77h2h1m2 0h1m3 0h2m7 0h2m7 0h2M407 79h2m48 0h1h2m4 0h2m4 0h2h1m111 0h2h1M406 81h1m59 0h1m5 0h1m8 0h1M406 83h1m2 0h1m56 0h1m2 0h1h2m1 0h2m6 0h1m15 0h2m6 0h1m2 0h1h2m3 0h1h2m39 0h1m27 0h2h1M407 85h2m15 0h1m44 0h1h2m1 0h2m7 0h2m7 0h2m4 0h2h1m6 0h2m1 0h2m1 0h2m4 0h2h1m2 0h1m32 0h1h2h1h2h1m6 0h2m13 0h2h1h2m18 0h1M406 87h1h2m13 0h2m7 0h2m4 0h2m30 0h1m8 0h1m3 0h2m12 0h1h2h1m5 0h1h2h1h2m6 0h1m3 0h2h1m11 0h1m20 0h1h2h1m24 0h2h1m3 0h2h1m17 0h1M422 89h2m45 0h1m3 0h2m1 0h2m21 0h1m3 0h2m4 0h2m4 0h2m3 0h1h2h1m11 0h1m11 0h1m8 0h1m2 0h1h2h1m3 0h2m1 0h2m15 0h1m3 0h2m4 0h2m1 0h2m3 0h1h2M430 91h1m39 0h2m1 0h2m12 0h1m2 0h1h2m4 0h2h1m3 0h2h1h2h1m8 0h1m2 0h1h2m12 0h1m20 0h1m5 0h1h2m1 0h2m1 0h2m13 0h2h1h2m3 0h1h2h1m3 0h2m4 0h2M406 93h1m23 0h1m6 0h2m34 0h2m3 0h1m12 0h2m6 0h1m3 0h2m4 0h2h1h2m6 0h1h2h1m11 0h1m6 0h2h1m11 0h1h2h1h2h1m5 0h1h2m13 0h2m1 0h2m7 0h2m12 0h1M409 95h1m12 0h2m13 0h2m31 0h2m1 0h2m1 0h2m4 0h2m3 0h1m3 0h2m6 0h1m2 0h1m2 0h1h2m3 0h1m6 0h2m1 0h2h1m18 0h2h1m14 0h1h2m24 0h1m5 0h1h2m1 0h2m1 0h2m3 0h1M422 97h2h1m44 0h1m3 0h2m7 0h2m7 0h2m6 0h1m2 0h1h2h1h2h1h2h1m6 0h2h1h2m10 0h2m7 0h2m13 0h2m1 0h2h1m3 0h2m16 0h2h1m18 0h2h1M422 99h2m13 0h2m30 0h1m8 0h1m3 0h2m12 0h1m5 0h1m5 0h1h2m1 0h2m1 0h2m1 0h2h1m2 0h1m11 0h1m8 0h1m2 0h1m8 0h1m2 0h1h2m1 0h2m3 0h1h2m13 0h2m6 0h1m11 0h1m5 0h1M406 101h1m62 0h1m3 0h2m13 0h2m1 0h2m6 0h1m6 0h2m9 0h1h2m1 0h2h1m11 0h1m2 0h1m3 0h2m12 0h1m2 0h1h2h1m6 0h2m13 0h2h1m5 0h1m11 0h1M469 103h1m3 0h2m7 0h2m7 0h2m3 0h1h2h1m2 0h1m5 0h1h2h1m3 0h2h1h2h1h2m12 0h1m2 0h1m2 0h1m2 0h1m2 0h1m9 0h2h1h2h1h2m4 0h2m13 0h2m1 0h2m3 0h1h2m10 0h2m13 0h2M422 105h2m27 0h1m9 0h2m1 0h2m3 0h1m11 0h1m5 0h1m8 0h1h2h1m2 0h1m5 0h1h2m1 0h2m10 0h2m9 0h1m8 0h1m12 0h2m9 0h1h2m19 0h2h1m3 0h2m6 0h1h2m3 0h1m5 0h1M409 107h1m12 0h2h1m9 0h2m21 0h1m8 0h1m3 0h2m10 0h2m7 0h2m3 0h1m2 0h1m2 0h1h2m3 0h1h2h1m9 0h2m1 0h2m9 0h1m2 0h1m17 0h1m12 0h2m13 0h2m6 0h1m6 0h2m3 0h1h2m9 0h1M409 109h1m9 0h2m9 0h1m3 0h2m13 0h2h1m9 0h2m3 0h1h2h1m3 0h2m16 0h2m3 0h1h2m1 0h2h1h2m3 0h1h2m1 0h2m3 0h1m2 0h1m17 0h1m5 0h1m12 0h2h1m2 0h1h2m4 0h2m13 0h2m4 0h2m4 0h2m1 0h2m4 0h2m16 0h2M407 111h2m31 0h2m3 0h1m3 0h2m6 0h1h2m1 0h2m1 0h2m1 0h2h1h2m3 0h1m12 0h2m1 0h2m3 0h1h2m3 0h1h2h1m9 0h2h1h2m6 0h1m8 0h1m2 0h1m3 0h2m3 0h1m9 0h2m1 0h2m4 0h2m1 0h2m16 0h2m1 0h2m1 0h2m1 0h2m1 0h2m4 0h2m13 0h2m4 0h2M407 113h2m10 0h2m18 0h1m2 0h1h2m4 0h2h1m3 0h2m1 0h2m3 0h1m2 0h1m5 0h1h2m6 0h1m9 0h2m3 0h1h2h1m2 0h1h2h1h2m7 0h2m1 0h2m1 0h2h1h2m9 0h1m2 0h1m3 0h2h1m11 0h1m3 0h2h1h2m1 0h2m16 0h2h1h2m1 0h2m12 0h1m5 0h1m12 0h2m1 0h2M406 115h1m2 0h1m14 0h1m15 0h2m6 0h1h2m3 0h1h2m1 0h2m6 0h1h2m3 0h1m9 0h2m7 0h2m6 0h1m5 0h1h2h1h2h1m6 0h2m1 0h2h1m11 0h1m2 0h1m3 0h2h1m12 0h2h1h2m1 0h2m1 0h2m1 0h2m15 0h1h2m1 0h2m3 0h1m8 0h1m2 0h1m12 0h2m4 0h2m15 0h1M406 117h1m2 0h1m14 0h1m9 0h2m3 0h1h2h1h2h1m2 0h1m2 0h1h2h1m8 0h1h2m4 0h2m25 0h2h1m11 0h1m3 0h2m6 0h1m20 0h1m14 0h1h2m7 0h2m13 0h2h1h2m1 0h2m4 0h2m6 0h1m2 0h1h2h1m15 0h2m1 0h2m1 0h2M406 119h1h2h1m20 0h1m3 0h2m3 0h1h2m4 0h2h1m3 0h2m1 0h2m10 0h2m3 0h1m18 0h2m4 0h2m4 0h2m1 0h2m3 0h1m3 0h2m4 0h2m33 0h1h2m3 0h1m21 0h2h1m6 0h2m1 0h2m22 0h2m4 0h2M406 121h1h2m10 0h2m1 0h2h1m5 0h1m15 0h2m19 0h2m3 0h1h2m24 0h1m6 0h2m6 0h1h2m39 0h1m12 0h2m36 0h1m18 0h2M347 123h2m60 0h1m35 0h1m140 0h1M407 125h2m10 0h2m76 0h2m7 0h2m112 0h2M409 127h1m389 0h1M796 129h1m3 0h2m21 0h1M796 131h1m3 0h2m21 0h1M799 133h1M799 137h1h2m15 0h1M748 139h1M746 141h2h1m51 0h2m18 0h1M799 143h1h2m21 0h1M800 145h2m16 0h2M748 147h1m51 0h2M796 149h1m3 0h2"/>
<path stroke="#00ff00" stroke-width="3" d="M721 157.5h1m11 0h1M751 160.5h1"/>
<path stroke="#33ff00" stroke-width="2" d="M440 75h2m10 0h2h1M448 77h1m3 0h2h1h2h1m5 0h1M445 79h1m3 0h2h1m15 0h2M407 81h2m52 0h2m1 0h2m1 0h2m115 0h2M461 83h2m9 0h1m50 0h1m83 0h1M466 85h1m5 0h1m8 0h1m23 0h1m5 0h1m2 0h1h2m75 0h1M430 87h1m30 0h2m7 0h2h1h2m6 0h1m33 0h2M407 89h2m52 0h2m3 0h1m3 0h2h1m8 0h1m15 0h2m6 0h1m5 0h1m2 0h1m3 0h2m87 0h1M407 91h2m63 0h1m8 0h1m32 0h1h2m6 0h1m83 0h1M407 93h2m52 0h2m3 0h1m3 0h2h1m24 0h2m6 0h1h2m6 0h1h2M407 95h2m52 0h2m9 0h1m24 0h2m9 0h1m5 0h1h2m3 0h1m35 0h1m50 0h1M461 97h2m7 0h2h1m8 0h1m15 0h2m15 0h1m8 0h1m32 0h1m2 0h1m9 0h2m33 0h1M407 99h2m52 0h2m1 0h2h1h2m1 0h2m1 0h2m6 0h1m15 0h2h1m3 0h2h1h2m3 0h1m2 0h1m6 0h2m39 0h1m23 0h1m20 0h1M407 101h2m57 0h1m3 0h2m9 0h1m15 0h2m6 0h1m5 0h1m3 0h2m3 0h1m36 0h2m31 0h2m15 0h1M449 103h2m6 0h1m3 0h2m3 0h1m3 0h2h1m8 0h1m21 0h2h1h2m15 0h1m32 0h1m29 0h1m3 0h2m4 0h2m9 0h1M407 105h2m40 0h2m7 0h2m3 0h1m2 0h1h2m1 0h2h1m18 0h2m13 0h2m3 0h1m3 0h2m3 0h1h2h1m32 0h1m5 0h1m21 0h2h1m20 0h1M407 107h2m30 0h1m3 0h2h1m3 0h2h1m2 0h1h2m4 0h2m1 0h2m1 0h2m3 0h1m8 0h1m15 0h2m6 0h1h2m6 0h1h2m1 0h2h1m2 0h1m33 0h2h1h2h1m23 0h1m20 0h1M407 109h2m33 0h1h2h1m2 0h1m5 0h1h2h1h2h1m2 0h1h2m4 0h2h1m8 0h1m17 0h1m5 0h1h2m3 0h1m3 0h2m4 0h2h1m11 0h1m50 0h1m17 0h1m2 0h1M439 111h1m2 0h1h2m1 0h2h1m6 0h2m6 0h1m2 0h1m5 0h1m8 0h1m24 0h2m3 0h1m8 0h1h2h1m35 0h1m26 0h1m5 0h1m11 0h1m2 0h1M422 113h2m6 0h1m9 0h2m4 0h2m4 0h2h1m9 0h2m1 0h2m1 0h2m39 0h1m2 0h1m5 0h1m36 0h2h1m9 0h2m21 0h1m12 0h2h1M422 115h2m18 0h1h2m1 0h2m4 0h2m6 0h1m2 0h1h2m4 0h2m9 0h1m15 0h2m15 0h1m41 0h1m5 0h1m29 0h1m36 0h2M430 117h1m15 0h2m12 0h1m6 0h2m3 0h1m32 0h1m50 0h1m35 0h1m6 0h2m19 0h2m1 0h2M460 119h1m53 0h1m77 0h1m14 0h1M448 121h1m11 0h1m125 0h1M406 123h1h2M823 133h1M800 139h2"/>
<path stroke="#66ff00" stroke-width="2" d="M439 77h1m3 0h2m1 0h2m12 0h1M439 79h1h2h1h2m3 0h1m5 0h1h2m6 0h1M449 81h2h1m5 0h1m5 0h1M449 83h2h1m11 0h1h2m1 0h2M451 85h1m5 0h1m3 0h2h1h2m1 0h2M451 87h1m5 0h1m5 0h1m2 0h1m47 0h1M455 89h2m7 0h2m1 0h2M451 91h1m5 0h1m3 0h2h1h2h1h2M457 93h1m9 0h2m12 0h1m125 0h1M451 95h1m5 0h1m5 0h1h2h1h2m12 0h1M458 97h2m3 0h1h2h1h2M449 99h2h1m20 0h1M449 101h2m6 0h1h2m1 0h2h1h2m1 0h2m3 0h1m41 0h1M451 103h1h2m1 0h2m1 0h2m3 0h1h2m1 0h2m45 0h1M442 105h1m2 0h1m6 0h2m1 0h2h1m56 0h1M440 107h2h1m3 0h2h1m3 0h2m4 0h2m3 0h1M439 109h1h2m4 0h2m4 0h2m60 0h1m41 0h1M452 111h2h1m5 0h1m53 0h1m41 0h1M448 113h1m11 0h1M407 115h2M407 117h2m105 0h1M800 135h2"/>
<path stroke="#99ff00" stroke-width="2" d="M446 79h2m4 0h2m6 0h1M439 81h1m3 0h2h1m6 0h2m1 0h2m1 0h2h1M445 83h1m9 0h2h1h2M446 85h2m1 0h2m4 0h2m1 0h2h1M440 87h2m3 0h1m3 0h2m7 0h2m4 0h2m1 0h2M449 89h2h1m5 0h1h2h1m2 0h1M443 91h2m4 0h2m4 0h2m1 0h2M445 93h1m3 0h2h1h2h1h2m6 0h1h2M449 95h2m4 0h2m1 0h2M449 97h2h1m3 0h2h1M442 99h1m9 0h2m1 0h2h1h2m3 0h1M442 101h1m8 0h1h2m1 0h2m3 0h1M439 103h1h2m3 0h1m2 0h1m5 0h1m5 0h1M440 105h2m1 0h2m1 0h2h1m11 0h1M460 107h1"/>
<path stroke="#ccff00" stroke-width="2" d="M440 81h2h1m3 0h2h1m5 0h1M439 83h1m2 0h1h2m1 0h2m4 0h2M439 85h1h2m3 0h1m2 0h1m5 0h1M439 87h1m2 0h1h2m1 0h2h1m3 0h2h1h2m3 0h1M439 89h1h2h1m2 0h1h2m4 0h2h1M439 91h1h2h1m2 0h1m2 0h1m3 0h2h1M439 93h1h2h1m5 0h1m9 0h2h1M439 95h1h2h1m2 0h1h2h1m3 0h2h1M439 97h1m2 0h1h2h1h2h1m3 0h2h1m5 0h1M439 99h1m3 0h2h1m8 0h1m5 0h1M443 101h2h1h2h1m5 0h1M442 103h1h2m1 0h2M439 105h1m14 0h1"/>
<path stroke="#ffff00" stroke-width="2" d="M440 83h2m6 0h1m5 0h1m5 0h1M442 85h1h2m7 0h2M443 89h2m3 0h1M446 91h2m12 0h1M443 93h2m1 0h2M443 95h2m15 0h1M440 99h2m4 0h2h1M439 101h1h2"/>
<path stroke="#ffcc00" stroke-width="2" d="M440 97h2"/>
</g>
<path d="M210.5 61V221M829.5 61V221M204 61.5H836M201 220.5H839M211.5 62V71M211.5 211V220M217.5 62V67M217.5 215V220M224.5 62V67M224.5 215V220M230.5 62V67M230.5 215V220M237.5 62V67M237.5 215V220M244.5 62V67M244.5 215V220M250.5 62V67M250.5 215V220M257.5 62V67M257.5 215V220M263.5 62V67M263.5 215V220M270.5 62V71M270.5 211V220M277.5 62V67M277.5 215V220M283.5 62V67M283.5 215V220M290.5 62V67M290.5 215V220M296.5 62V67M296.5 215V220M303.5 62V67M303.5 215V220M310.5 62V67M310.5 215V220M316.5 62V67M316.5 215V220M323.5 62V67M323.5 215V220M329.5 62V71M329.5 211V220M336.5 62V67M336.5 215V220M342.5 62V67M342.5 215V220M349.5 62V67M349.5 215V220M356.5 62V67M356.5 215V220M362.5 62V67M362.5 215V220M369.5 62V67M369.5 215V220M375.5 62V67M375.5 215V220M382.5 62V67M382.5 215V220M389.5 62V71M389.5 211V220M395.5 62V67M395.5 215V220M402.5 62V67M402.5 215V220M408.5 62V67M408.5 215V220M415.5 62V67M415.5 215V220M422.5 62V67M422.5 215V220M428.5 62V67M428.5 215V220M435.5 62V67M435.5 215V220M441.5 62V67M441.5 215V220M448.5 62V71M448.5 211V220M455.5 62V67M455.5 215V220M461.5 62V67M461.5 215V220M468.5 62V67M468.5 215V220M474.5 62V67M474.5 215V220M481.5 62V67M481.5 215V220M488.5 62V67M488.5 215V220M494.5 62V67M494.5 215V220M501.5 62V67M501.5 215V220M507.5 62V71M507.5 211V220M514.5 62V67M514.5 215V220M521.5 62V67M521.5 215V220M527.5 62V67M527.5 215V220M534.5 62V67M534.5 215V220M540.5 62V67M540.5 215V220M547.5 62V67M547.5 215V220M554.5 62V67M554.5 215V220M560.5 62V67M560.5 215V220M567.5 62V71M567.5 211V220M573.5 62V67M573.5 215V220M580.5 62V67M580.5 215V220M587.5 62V67M587.5 215V220M593.5 62V67M593.5 215V220M600.5 62V67M600.5 215V220M606.5 62V67M606.5 215V220M613.5 62V67M613.5 215V220M620.5 62V67M620.5 215V220M626.5 62V71M626.5 211V220M633.5 62V67M633.5 215V220M639.5 62V67M639.5 215V220M646.5 62V67M646.5 215V220M653.5 62V67M653.5 215V220M659.5 62V67M659.5 215V220M666.5 62V67M666.5 215V220M672.5 62V67M672.5 215V220M679.5 62V67M679.5 215V220M686.5 62V71M686.5 211V220M692.5 62V67M692.5 215V220M699.5 62V67M699.5 215V220M705.5 62V67M705.5 215V220M712.5 62V67M712.5 215V220M718.5 62V67M718.5 215V220M725.5 62V67M725.5 215V220M732.5 62V67M732.5 215V220M738.5 62V67M738.5 215V220M745.5 62V71M745.5 211V220M751.5 62V67M751.5 215V220M758.5 62V67M758.5 215V220M765.5 62V67M765.5 215V220M771.5 62V67M771.5 215V220M778.5 62V67M778.5 215V220M784.5 62V67M784.5 215V220M791.5 62V67M791.5 215V220M798.5 62V67M798.5 215V220M804.5 62V71M804.5 211V220M811.5 62V67M811.5 215V220M817.5 62V67M817.5 215V220M824.5 62V67M824.5 215V220M204 199.5H210M830 199.5H836M204 178.5H210M830 178.5H836M204 166.5H210M830 166.5H836M204 157.5H210M830 157.5H836M201 150.5H210M830 150.5H839M204 130.5H210M830 130.5H836M204 109.5H210M830 109.5H836M204 97.5H210M830 97.5H836M204 88.5H210M830 88.5H836M201 81.5H210M830 81.5H839M204 61.5H210M830 61.5H836" stroke="#fff" stroke-width="1" fill="none" shape-rendering="crispEdges"/>
<defs><linearGradient id="cb1" x1="0" y1="1" x2="0" y2="0">
<stop offset="0.0" stop-color="#8000ff"/>
<stop offset="0.2" stop-color="#0000ff"/>
<stop offset="0.4" stop-color="#00ffff"/>
<stop offset="0.6" stop-color="#00ff00"/>
<stop offset="0.8" stop-color="#ffff00"/>
<stop offset="1.0" stop-color="#ff0000"/>
</linearGradient></defs>
<rect x="850.5" y="77.5" width="32" height="127" fill="url(#cb1)" stroke="#fff" stroke-width="1" shape-rendering="crispEdges"/>
<path d="M878 191.5H882M878 179.5H882M878 171.5H882M878 166.5H882M875 162.5H882M878 149.5H882M878 136.5H882M878 129.5H882M878 123.5H882M875 119.5H882M878 107.5H882M878 94.5H882M878 86.5H882M878 81.5H882" stroke="#fff" stroke-width="1" fill="none" shape-rendering="crispEdges"/>
<g shape-rendering="crispEdges">
<linearGradient id="g1" gradientUnits="userSpaceOnUse" x1="275" x2="526" y1="0" y2="0">
<stop offset="0.0000" stop-color="#00ff3c"/>
<stop offset="0.0161" stop-color="#00ff3c"/>
<stop offset="0.0323" stop-color="#00ff3c"/>
<stop offset="0.0484" stop-color="#00ff3b"/>
<stop offset="0.0645" stop-color="#00ff3b"/>
<stop offset="0.0806" stop-color="#00ff3b"/>
<stop offset="0.0968" stop-color="#00ff3b"/>
<stop offset="0.1129" stop-color="#00ff3a"/>
<stop offset="0.1290" stop-color="#00ff3a"/>
<stop offset="0.1452" stop-color="#00ff3a"/>
<stop offset="0.1613" stop-color="#00ff3a"/>
<stop offset="0.1774" stop-color="#00ff3a"/>
<stop offset="0.1935" stop-color="#00ff39"/>
<stop offset="0.2097" stop-color="#00ff39"/>
<stop offset="0.2258" stop-color="#00ff39"/>
<stop offset="0.2419" stop-color="#00ff39"/>
<stop offset="0.2581" stop-color="#00ff39"/>
<stop offset="0.2742" stop-color="#00ff38"/>
<stop offset="0.2903" stop-color="#00ff38"/>
<stop offset="0.3065" stop-color="#00ff38"/>
<stop offset="0.3226" stop-color="#00ff38"/>
<stop offset="0.3387" stop-color="#00ff38"/>
<stop offset="0.3548" stop-color="#00ff37"/>
<stop offset="0.3710" stop-color="#00ff37"/>
<stop offset="0.3871" stop-color="#00ff37"/>
<stop offset="0.4032" stop-color="#00ff37"/>
<stop offset="0.4194" stop-color="#00ff37"/>
<stop offset="0.4355" stop-color="#00ff36"/>
<stop offset="0.4516" stop-color="#00ff36"/>
<stop offset="0.4677" stop-color="#00ff36"/>
<stop offset="0.4839" stop-color="#00ff36"/>
<stop offset="0.4980" stop-color="#00ff36"/>
<stop offset="0.5000" stop-color="#00ff36"/>
<stop offset="0.5161" stop-color="#00ff36"/>
<stop offset="0.5323" stop-color="#00ff36"/>
<stop offset="0.5484" stop-color="#00ff36"/>
<stop offset="0.5645" stop-color="#00ff36"/>
<stop offset="0.5806" stop-color="#00ff36"/>
<stop offset="0.5968" stop-color="#00ff36"/>
<stop offset="0.6129" stop-color="#00ff36"/>
<stop offset="0.6290" stop-color="#00ff36"/>
<stop offset="0.6452" stop-color="#00ff36"/>
<stop offset="0.6613" stop-color="#00ff36"/>
<stop offset="0.6774" stop-color="#00ff36"/>
<stop offset="0.6935" stop-color="#00ff36"/>
<stop offset="0.7097" stop-color="#00ff36"/>
<stop offset="0.7258" stop-color="#00ff36"/>
<stop offset="0.7419" stop-color="#00ff36"/>
<stop offset="0.7581" stop-color="#00ff36"/>
<stop offset="0.7742" stop-color="#00ff36"/>
<stop offset="0.7903" stop-color="#00ff36"/>
<stop offset="0.8065" stop-color="#00ff36"/>
<stop offset="0.8226" stop-color="#00ff36"/>
<stop offset="0.8387" stop-color="#00ff36"/>
<stop offset="0.8548" stop-color="#00ff36"/>
<stop offset="0.8710" stop-color="#00ff36"/>
<stop offset="0.8871" stop-color="#00ff36"/>
<stop offset="0.9032" stop-color="#00ff36"/>
<stop offset="0.9194" stop-color="#00ff36"/>
<stop offset="0.9355" stop-color="#00ff36"/>
<stop offset="0.9516" stop-color="#00ff36"/>
<stop offset="0.9677" stop-color="#00ff36"/>
<stop offset="0.9839" stop-color="#00ff36"/>
<stop offset="1.0000" stop-color="#00ff36"/>
</linearGradient>
<rect x="275" y="256.00" width="251" height="17.14" fill="url(#g1)"/>
<linearGradient id="g2" gradientUnits="userSpaceOnUse" x1="533" x2="548" y1="0" y2="0">
<stop offset="0.0000" stop-color="#00ff3c"/>
<stop offset="0.2000" stop-color="#5cff00"/>
<stop offset="0.3333" stop-color="#ddff00"/>
<stop offset="0.5667" stop-color="#ff4000"/>
<stop offset="0.6667" stop-color="#ff4000"/>
<stop offset="0.7333" stop-color="#00ff26"/>
<stop offset="1.0000" stop-color="#00ff26"/>
</linearGradient>
<rect x="533" y="256.00" width="15" height="17.14" fill="url(#g2)"/>
<linearGradient id="g3" gradientUnits="userSpaceOnUse" x1="554" x2="570" y1="0" y2="0">
<stop offset="0.0000" stop-color="#00ff3c"/>
<stop offset="0.2500" stop-color="#00ff3c"/>
<stop offset="0.3125" stop-color="#8fff00"/>
<stop offset="0.5000" stop-color="#ff8c00"/>
<stop offset="0.5625" stop-color="#ff4000"/>
<stop offset="0.7500" stop-color="#c1ff00"/>
<stop offset="1.0000" stop-color="#00ff3c"/>
</linearGradient>
<rect x="554" y="256.00" width="16" height="17.14" fill="url(#g3)"/>
<linearGradient id="g4" gradientUnits="userSpaceOnUse" x1="584" x2="806" y1="0" y2="0">
<stop offset="0.0000" stop-color="#00ff40"/>
<stop offset="0.0182" stop-color="#00ff42"/>
<stop offset="0.0364" stop-color="#00ff44"/>
<stop offset="0.0545" stop-color="#00ff47"/>
<stop offset="0.0727" stop-color="#00ff49"/>
<stop offset="0.0909" stop-color="#00ff4b"/>
<stop offset="0.1091" stop-color="#00ff4e"/>
<stop offset="0.1273" stop-color="#00ff50"/>
<stop offset="0.1455" stop-color="#00ff52"/>
<stop offset="0.1636" stop-color="#00ff55"/>
<stop offset="0.1818" stop-color="#00ff57"/>
<stop offset="0.2000" stop-color="#00ff59"/>
<stop offset="0.2182" stop-color="#00ff5c"/>
<stop offset="0.2364" stop-color="#00ff5e"/>
<stop offset="0.2545" stop-color="#00ff60"/>
<stop offset="0.2727" stop-color="#00ff63"/>
<stop offset="0.2909" stop-color="#00ff65"/>
<stop offset="0.2973" stop-color="#00ff66"/>
<stop offset="0.3091" stop-color="#00ff69"/>
<stop offset="0.3273" stop-color="#00ff6d"/>
<stop offset="0.3455" stop-color="#00ff71"/>
<stop offset="0.3636" stop-color="#00ff75"/>
<stop offset="0.3818" stop-color="#00ff79"/>
<stop offset="0.4000" stop-color="#00ff7d"/>
<stop offset="0.4182" stop-color="#00ff81"/>
<stop offset="0.4364" stop-color="#00ff85"/>
<stop offset="0.4545" stop-color="#00ff8a"/>
<stop offset="0.4727" stop-color="#00ff8e"/>
<stop offset="0.4909" stop-color="#00ff92"/>
<stop offset="0.5091" stop-color="#00ff96"/>
<stop offset="0.5225" stop-color="#00ff99"/>
<stop offset="0.5273" stop-color="#00ff9a"/>
<stop offset="0.5455" stop-color="#00ff9e"/>
<stop offset="0.5636" stop-color="#00ffa3"/>
<stop offset="0.5818" stop-color="#00ffa7"/>
<stop offset="0.6000" stop-color="#00ffab"/>
<stop offset="0.6182" stop-color="#00ffb0"/>
<stop offset="0.6364" stop-color="#00ffb4"/>
<stop offset="0.6545" stop-color="#00ffb8"/>
<stop offset="0.6727" stop-color="#00ffbc"/>
<stop offset="0.6909" stop-color="#00ffc1"/>
<stop offset="0.7091" stop-color="#00ffc5"/>
<stop offset="0.7273" stop-color="#00ffc9"/>
<stop offset="0.7455" stop-color="#00ffce"/>
<stop offset="0.7636" stop-color="#00ffd2"/>
<stop offset="0.7818" stop-color="#00ffd6"/>
<stop offset="0.7928" stop-color="#00ffd9"/>
<stop offset="0.8000" stop-color="#00ffda"/>
<stop offset="0.8182" stop-color="#00ffde"/>
<stop offset="0.8364" stop-color="#00ffe1"/>
<stop offset="0.8545" stop-color="#00ffe4"/>
<stop offset="0.8727" stop-color="#00ffe8"/>
<stop offset="0.8909" stop-color="#00ffeb"/>
<stop offset="0.9091" stop-color="#00ffef"/>
<stop offset="0.9273" stop-color="#00fff2"/>
<stop offset="0.9455" stop-color="#00fff6"/>
<stop offset="0.9636" stop-color="#00fff9"/>
<stop offset="0.9818" stop-color="#00fffc"/>
<stop offset="0.9955" stop-color="#00ffff"/>
<stop offset="1.0000" stop-color="#00ffff"/>
</linearGradient>
<rect x="584" y="256.00" width="222" height="17.14" fill="url(#g4)"/>
<linearGradient id="g5" gradientUnits="userSpaceOnUse" x1="275" x2="526" y1="0" y2="0">
<stop offset="0.0000" stop-color="#00ff46"/>
<stop offset="0.0161" stop-color="#00ff46"/>
<stop offset="0.0323" stop-color="#00ff46"/>
<stop offset="0.0484" stop-color="#00ff46"/>
<stop offset="0.0645" stop-color="#00ff45"/>
<stop offset="0.0806" stop-color="#00ff45"/>
<stop offset="0.0968" stop-color="#00ff45"/>
<stop offset="0.1129" stop-color="#00ff45"/>
<stop offset="0.1290" stop-color="#00ff44"/>
<stop offset="0.1452" stop-color="#00ff44"/>
<stop offset="0.1613" stop-color="#00ff44"/>
<stop offset="0.1774" stop-color="#00ff44"/>
<stop offset="0.1935" stop-color="#00ff44"/>
<stop offset="0.2097" stop-color="#00ff43"/>
<stop offset="0.2258" stop-color="#00ff43"/>
<stop offset="0.2419" stop-color="#00ff43"/>
<stop offset="0.2581" stop-color="#00ff43"/>
<stop offset="0.2742" stop-color="#00ff43"/>
<stop offset="0.2903" stop-color="#00ff42"/>
<stop offset="0.3065" stop-color="#00ff42"/>
<stop offset="0.3226" stop-color="#00ff42"/>
<stop offset="0.3387" stop-color="#00ff42"/>
<stop offset="0.3548" stop-color="#00ff42"/>
<stop offset="0.3710" stop-color="#00ff41"/>
<stop offset="0.3871" stop-color="#00ff41"/>
<stop offset="0.4032" stop-color="#00ff41"/>
<stop offset="0.4194" stop-color="#00ff41"/>
<stop offset="0.4355" stop-color="#00ff41"/>
<stop offset="0.4516" stop-color="#00ff40"/>
<stop offset="0.4677" stop-color="#00ff40"/>
<stop offset="0.4839" stop-color="#00ff40"/>
<stop offset="0.4980" stop-color="#00ff40"/>
<stop offset="0.5000" stop-color="#00ff40"/>
<stop offset="0.5161" stop-color="#00ff40"/>
<stop offset="0.5323" stop-color="#00ff40"/>
<stop offset="0.5484" stop-color="#00ff40"/>
<stop offset="0.5645" stop-color="#00ff40"/>
<stop offset="0.5806" stop-color="#00ff40"/>
<stop offset="0.5968" stop-color="#00ff40"/>
<stop offset="0.6129" stop-color="#00ff40"/>
<stop offset="0.6290" stop-color="#00ff40"/>
<stop offset="0.6452" stop-color="#00ff40"/>
<stop offset="0.6613" stop-color="#00ff40"/>
<stop offset="0.6774" stop-color="#00ff40"/>
<stop offset="0.6935" stop-color="#00ff40"/>
<stop offset="0.7097" stop-color="#00ff40"/>
<stop offset="0.7258" stop-color="#00ff40"/>
<stop offset="0.7419" stop-color="#00ff40"/>
<stop offset="0.7581" stop-color="#00ff40"/>
<stop offset="0.7742" stop-color="#00ff40"/>
<stop offset="0.7903" stop-color="#00ff40"/>
<stop offset="0.8065" stop-color="#00ff40"/>
<stop offset="0.8226" stop-color="#00ff40"/>
<stop offset="0.8387" stop-color="#00ff40"/>
<stop offset="0.8548" stop-color="#00ff40"/>
<stop offset="0.8710" stop-color="#00ff40"/>
<stop offset="0.8871" stop-color="#00ff40"/>
<stop offset="0.9032" stop-color="#00ff40"/>
<stop offset="0.9194" stop-color="#00ff40"/>
<stop offset="0.9355" stop-color="#00ff40"/>
<stop offset="0.9516" stop-color="#00ff40"/>
<stop offset="0.9677" stop-color="#00ff40"/>
<stop offset="0.9839" stop-color="#00ff40"/>
<stop offset="1.0000" stop-color="#00ff40"/>
</linearGradient>
<rect x="275" y="273.14" width="251" height="17.64" fill="url(#g5)"/>
<linearGradient id="g6" gradientUnits="userSpaceOnUse" x1="533" x2="548" y1="0" y2="0">
<stop offset="0.0000" stop-color="#00ff46"/>
<stop offset="0.2000" stop-color="#23ff00"/>
<stop offset="0.3333" stop-color="#7cff00"/>
<stop offset="0.5667" stop-color="#ffe600"/>
<stop offset="0.6667" stop-color="#ffe600"/>
<stop offset="0.7333" stop-color="#00ff33"/>
<stop offset="1.0000" stop-color="#00ff33"/>
</linearGradient>
<rect x="533" y="273.14" width="15" height="17.64" fill="url(#g6)"/>
<linearGradient id="g7" gradientUnits="userSpaceOnUse" x1="554" x2="570" y1="0" y2="0">
<stop offset="0.0000" stop-color="#00ff46"/>
<stop offset="0.2500" stop-color="#00ff46"/>
<stop offset="0.3125" stop-color="#46ff00"/>
<stop offset="0.5000" stop-color="#e4ff00"/>
<stop offset="0.5625" stop-color="#ffe600"/>
<stop offset="0.7500" stop-color="#69ff00"/>
<stop offset="1.0000" stop-color="#00ff46"/>
</linearGradient>
<rect x="554" y="273.14" width="16" height="17.64" fill="url(#g7)"/>
<linearGradient id="g8" gradientUnits="userSpaceOnUse" x1="584" x2="806" y1="0" y2="0">
<stop offset="0.0000" stop-color="#00ff33"/>
<stop offset="0.0182" stop-color="#00ff35"/>
<stop offset="0.0364" stop-color="#00ff38"/>
<stop offset="0.0545" stop-color="#00ff3a"/>
<stop offset="0.0727" stop-color="#00ff3c"/>
<stop offset="0.0909" stop-color="#00ff3f"/>
<stop offset="0.1091" stop-color="#00ff41"/>
<stop offset="0.1273" stop-color="#00ff43"/>
<stop offset="0.1455" stop-color="#00ff46"/>
<stop offset="0.1636" stop-color="#00ff48"/>
<stop offset="0.1818" stop-color="#00ff4a"/>
<stop offset="0.2000" stop-color="#00ff4d"/>
<stop offset="0.2182" stop-color="#00ff4f"/>
<stop offset="0.2364" stop-color="#00ff51"/>
<stop offset="0.2545" stop-color="#00ff54"/>
<stop offset="0.2727" stop-color="#00ff56"/>
<stop offset="0.2909" stop-color="#00ff58"/>
<stop offset="0.2973" stop-color="#00ff59"/>
<stop offset="0.3091" stop-color="#00ff5e"/>
<stop offset="0.3273" stop-color="#00ff65"/>
<stop offset="0.3455" stop-color="#00ff6c"/>
<stop offset="0.3636" stop-color="#00ff74"/>
<stop offset="0.3818" stop-color="#00ff7b"/>
<stop offset="0.4000" stop-color="#00ff82"/>
<stop offset="0.4182" stop-color="#00ff89"/>
<stop offset="0.4364" stop-color="#00ff90"/>
<stop offset="0.4545" stop-color="#00ff98"/>
<stop offset="0.4727" stop-color="#00ff9f"/>
<stop offset="0.4909" stop-color="#00ffa6"/>
<stop offset="0.5091" stop-color="#00ffad"/>
<stop offset="0.5225" stop-color="#00ffb2"/>
<stop offset="0.5273" stop-color="#00ffb4"/>
<stop offset="0.5455" stop-color="#00ffb9"/>
<stop offset="0.5636" stop-color="#00ffbe"/>
<stop offset="0.5818" stop-color="#00ffc3"/>
<stop offset="0.6000" stop-color="#00ffc8"/>
<stop offset="0.6182" stop-color="#00ffce"/>
<stop offset="0.6364" stop-color="#00ffd3"/>
<stop offset="0.6545" stop-color="#00ffd8"/>
<stop offset="0.6727" stop-color="#00ffdd"/>
<stop offset="0.6909" stop-color="#00ffe2"/>
<stop offset="0.7027" stop-color="#00ffe6"/>
<stop offset="0.7091" stop-color="#00ffe6"/>
<stop offset="0.7273" stop-color="#00ffe6"/>
<stop offset="0.7455" stop-color="#00ffe6"/>
<stop offset="0.7636" stop-color="#00ffe6"/>
<stop offset="0.7818" stop-color="#00ffe6"/>
<stop offset="0.8000" stop-color="#00ffe6"/>
<stop offset="0.8182" stop-color="#00ffe6"/>
<stop offset="0.8364" stop-color="#00ffe6"/>
<stop offset="0.8545" stop-color="#00ffe6"/>
<stop offset="0.8727" stop-color="#00ffe6"/>
<stop offset="0.8909" stop-color="#00ffe6"/>
<stop offset="0.9091" stop-color="#00ffe6"/>
<stop offset="0.9273" stop-color="#00ffe6"/>
<stop offset="0.9455" stop-color="#00ffe6"/>
<stop offset="0.9636" stop-color="#00ffe6"/>
<stop offset="0.9818" stop-color="#00ffe6"/>
<stop offset="0.9955" stop-color="#00ffe6"/>
<stop offset="1.0000" stop-color="#00ffe6"/>
</linearGradient>
<rect x="584" y="273.14" width="222" height="17.64" fill="url(#g8)"/>
<linearGradient id="g9" gradientUnits="userSpaceOnUse" x1="275" x2="526" y1="0" y2="0">
<stop offset="0.0000" stop-color="#00ff55"/>
<stop offset="0.0161" stop-color="#00ff55"/>
<stop offset="0.0323" stop-color="#00ff55"/>
<stop offset="0.0484" stop-color="#00ff55"/>
<stop offset="0.0645" stop-color="#00ff55"/>
<stop offset="0.0806" stop-color="#00ff54"/>
<stop offset="0.0968" stop-color="#00ff54"/>
<stop offset="0.1129" stop-color="#00ff54"/>
<stop offset="0.1290" stop-color="#00ff54"/>
<stop offset="0.1452" stop-color="#00ff54"/>
<stop offset="0.1613" stop-color="#00ff53"/>
<stop offset="0.1774" stop-color="#00ff53"/>
<stop offset="0.1935" stop-color="#00ff53"/>
<stop offset="0.2097" stop-color="#00ff53"/>
<stop offset="0.2258" stop-color="#00ff53"/>
<stop offset="0.2419" stop-color="#00ff52"/>
<stop offset="0.2581" stop-color="#00ff52"/>
<stop offset="0.2742" stop-color="#00ff52"/>
<stop offset="0.2903" stop-color="#00ff52"/>
<stop offset="0.3065" stop-color="#00ff52"/>
<stop offset="0.3226" stop-color="#00ff51"/>
<stop offset="0.3387" stop-color="#00ff51"/>
<stop offset="0.3548" stop-color="#00ff51"/>
<stop offset="0.3710" stop-color="#00ff51"/>
<stop offset="0.3871" stop-color="#00ff50"/>
<stop offset="0.4032" stop-color="#00ff50"/>
<stop offset="0.4194" stop-color="#00ff50"/>
<stop offset="0.4355" stop-color="#00ff50"/>
<stop offset="0.4516" stop-color="#00ff50"/>
<stop offset="0.4677" stop-color="#00ff4f"/>
<stop offset="0.4839" stop-color="#00ff4f"/>
<stop offset="0.4980" stop-color="#00ff4f"/>
<stop offset="0.5000" stop-color="#00ff4f"/>
<stop offset="0.5161" stop-color="#00ff4f"/>
<stop offset="0.5323" stop-color="#00ff4f"/>
<stop offset="0.5484" stop-color="#00ff4f"/>
<stop offset="0.5645" stop-color="#00ff4f"/>
<stop offset="0.5806" stop-color="#00ff4f"/>
<stop offset="0.5968" stop-color="#00ff4f"/>
<stop offset="0.6129" stop-color="#00ff4f"/>
<stop offset="0.6290" stop-color="#00ff4f"/>
<stop offset="0.6452" stop-color="#00ff4f"/>
<stop offset="0.6613" stop-color="#00ff4f"/>
<stop offset="0.6774" stop-color="#00ff4f"/>
<stop offset="0.6935" stop-color="#00ff4f"/>
<stop offset="0.7097" stop-color="#00ff4f"/>
<stop offset="0.7258" stop-color="#00ff4f"/>
<stop offset="0.7419" stop-color="#00ff4f"/>
<stop offset="0.7581" stop-color="#00ff4f"/>
<stop offset="0.7742" stop-color="#00ff4f"/>
<stop offset="0.7903" stop-color="#00ff4f"/>
<stop offset="0.8065" stop-color="#00ff4f"/>
<stop offset="0.8226" stop-color="#00ff4f"/>
<stop offset="0.8387" stop-color="#00ff4f"/>
<stop offset="0.8548" stop-color="#00ff4f"/>
<stop offset="0.8710" stop-color="#00ff4f"/>
<stop offset="0.8871" stop-color="#00ff4f"/>
<stop offset="0.9032" stop-color="#00ff4f"/>
<stop offset="0.9194" stop-color="#00ff4f"/>
<stop offset="0.9355" stop-color="#00ff4f"/>
<stop offset="0.9516" stop-color="#00ff4f"/>
<stop offset="0.9677" stop-color="#00ff4f"/>
<stop offset="0.9839" stop-color="#00ff4f"/>
<stop offset="1.0000" stop-color="#00ff4f"/>
</linearGradient>
<rect x="275" y="290.77" width="251" height="17.64" fill="url(#g9)"/>
<linearGradient id="g10" gradientUnits="userSpaceOnUse" x1="533" x2="548" y1="0" y2="0">
<stop offset="0.0000" stop-color="#00ff55"/>
<stop offset="0.2000" stop-color="#00ff16"/>
<stop offset="0.3333" stop-color="#21ff00"/>
<stop offset="0.5667" stop-color="#7fff00"/>
<stop offset="0.6667" stop-color="#7fff00"/>
<stop offset="0.7333" stop-color="#00ff40"/>
<stop offset="1.0000" stop-color="#00ff40"/>
</linearGradient>
<rect x="533" y="290.77" width="15" height="17.64" fill="url(#g10)"/>
<linearGradient id="g11" gradientUnits="userSpaceOnUse" x1="554" x2="570" y1="0" y2="0">
<stop offset="0.0000" stop-color="#00ff55"/>
<stop offset="0.2500" stop-color="#00ff55"/>
<stop offset="0.3125" stop-color="#00ff00"/>
<stop offset="0.5000" stop-color="#60ff00"/>
<stop offset="0.5625" stop-color="#7fff00"/>
<stop offset="0.7500" stop-color="#15ff00"/>
<stop offset="1.0000" stop-color="#00ff55"/>
</linearGradient>
<rect x="554" y="290.77" width="16" height="17.64" fill="url(#g11)"/>
<linearGradient id="g12" gradientUnits="userSpaceOnUse" x1="584" x2="806" y1="0" y2="0">
<stop offset="0.0000" stop-color="#00ff33"/>
<stop offset="0.0182" stop-color="#00ff36"/>
<stop offset="0.0364" stop-color="#00ff39"/>
<stop offset="0.0545" stop-color="#00ff3c"/>
<stop offset="0.0727" stop-color="#00ff3f"/>
<stop offset="0.0909" stop-color="#00ff43"/>
<stop offset="0.1091" stop-color="#00ff46"/>
<stop offset="0.1273" stop-color="#00ff49"/>
<stop offset="0.1455" stop-color="#00ff4c"/>
<stop offset="0.1636" stop-color="#00ff4f"/>
<stop offset="0.1818" stop-color="#00ff52"/>
<stop offset="0.2000" stop-color="#00ff55"/>
<stop offset="0.2182" stop-color="#00ff58"/>
<stop offset="0.2364" stop-color="#00ff5c"/>
<stop offset="0.2545" stop-color="#00ff5f"/>
<stop offset="0.2727" stop-color="#00ff62"/>
<stop offset="0.2909" stop-color="#00ff65"/>
<stop offset="0.2973" stop-color="#00ff66"/>
<stop offset="0.3091" stop-color="#00ff6e"/>
<stop offset="0.3273" stop-color="#00ff7b"/>
<stop offset="0.3455" stop-color="#00ff88"/>
<stop offset="0.3636" stop-color="#00ff95"/>
<stop offset="0.3818" stop-color="#00ffa2"/>
<stop offset="0.4000" stop-color="#00ffaf"/>
<stop offset="0.4182" stop-color="#00ffbc"/>
<stop offset="0.4364" stop-color="#00ffc8"/>
<stop offset="0.4545" stop-color="#00ffd5"/>
<stop offset="0.4727" stop-color="#00ffe2"/>
<stop offset="0.4775" stop-color="#00ffe6"/>
<stop offset="0.4909" stop-color="#00ffe8"/>
<stop offset="0.5091" stop-color="#00ffeb"/>
<stop offset="0.5273" stop-color="#00ffef"/>
<stop offset="0.5455" stop-color="#00fff2"/>
<stop offset="0.5636" stop-color="#00fff6"/>
<stop offset="0.5818" stop-color="#00fff9"/>
<stop offset="0.6000" stop-color="#00fffd"/>
<stop offset="0.6126" stop-color="#00ffff"/>
<stop offset="0.6182" stop-color="#00fffe"/>
<stop offset="0.6364" stop-color="#00fffc"/>
<stop offset="0.6545" stop-color="#00fff9"/>
<stop offset="0.6727" stop-color="#00fff6"/>
<stop offset="0.6909" stop-color="#00fff4"/>
<stop offset="0.7091" stop-color="#00fff1"/>
<stop offset="0.7273" stop-color="#00ffef"/>
<stop offset="0.7455" stop-color="#00ffec"/>
<stop offset="0.7636" stop-color="#00ffea"/>
<stop offset="0.7818" stop-color="#00ffe7"/>
<stop offset="0.7928" stop-color="#00ffe6"/>
<stop offset="0.8000" stop-color="#00ffe4"/>
<stop offset="0.8182" stop-color="#00ffdf"/>
<stop offset="0.8364" stop-color="#00ffdb"/>
<stop offset="0.8545" stop-color="#00ffd6"/>
<stop offset="0.8727" stop-color="#00ffd1"/>
<stop offset="0.8909" stop-color="#00ffcd"/>
<stop offset="0.9091" stop-color="#00ffc8"/>
<stop offset="0.9273" stop-color="#00ffc4"/>
<stop offset="0.9455" stop-color="#00ffbf"/>
<stop offset="0.9636" stop-color="#00ffbb"/>
<stop offset="0.9818" stop-color="#00ffb6"/>
<stop offset="0.9955" stop-color="#00ffb2"/>
<stop offset="1.0000" stop-color="#00ffb2"/>
</linearGradient>
<rect x="584" y="290.77" width="222" height="17.64" fill="url(#g12)"/>
<linearGradient id="g13" gradientUnits="userSpaceOnUse" x1="275" x2="526" y1="0" y2="0">
<stop offset="0.0000" stop-color="#00ff66"/>
<stop offset="0.0161" stop-color="#00ff66"/>
<stop offset="0.0323" stop-color="#00ff66"/>
<stop offset="0.0484" stop-color="#00ff65"/>
<stop offset="0.0645" stop-color="#00ff65"/>
<stop offset="0.0806" stop-color="#00ff65"/>
<stop offset="0.0968" stop-color="#00ff65"/>
<stop offset="0.1129" stop-color="#00ff65"/>
<stop offset="0.1290" stop-color="#00ff64"/>
<stop offset="0.1452" stop-color="#00ff64"/>
<stop offset="0.1613" stop-color="#00ff64"/>
<stop offset="0.1774" stop-color="#00ff64"/>
<stop offset="0.1935" stop-color="#00ff64"/>
<stop offset="0.2097" stop-color="#00ff63"/>
<stop offset="0.2258" stop-color="#00ff63"/>
<stop offset="0.2419" stop-color="#00ff63"/>
<stop offset="0.2581" stop-color="#00ff63"/>
<stop offset="0.2742" stop-color="#00ff62"/>
<stop offset="0.2903" stop-color="#00ff62"/>
<stop offset="0.3065" stop-color="#00ff62"/>
<stop offset="0.3226" stop-color="#00ff62"/>
<stop offset="0.3387" stop-color="#00ff62"/>
<stop offset="0.3548" stop-color="#00ff61"/>
<stop offset="0.3710" stop-color="#00ff61"/>
<stop offset="0.3871" stop-color="#00ff61"/>
<stop offset="0.4032" stop-color="#00ff61"/>
<stop offset="0.4194" stop-color="#00ff61"/>
<stop offset="0.4355" stop-color="#00ff60"/>
<stop offset="0.4516" stop-color="#00ff60"/>
<stop offset="0.4677" stop-color="#00ff60"/>
<stop offset="0.4839" stop-color="#00ff60"/>
<stop offset="0.4980" stop-color="#00ff60"/>
<stop offset="0.5000" stop-color="#00ff60"/>
<stop offset="0.5161" stop-color="#00ff60"/>
<stop offset="0.5323" stop-color="#00ff60"/>
<stop offset="0.5484" stop-color="#00ff60"/>
<stop offset="0.5645" stop-color="#00ff60"/>
<stop offset="0.5806" stop-color="#00ff60"/>
<stop offset="0.5968" stop-color="#00ff60"/>
<stop offset="0.6129" stop-color="#00ff60"/>
<stop offset="0.6290" stop-color="#00ff60"/>
<stop offset="0.6452" stop-color="#00ff60"/>
<stop offset="0.6613" stop-color="#00ff60"/>
<stop offset="0.6774" stop-color="#00ff60"/>
<stop offset="0.6935" stop-color="#00ff60"/>
<stop offset="0.7097" stop-color="#00ff60"/>
<stop offset="0.7258" stop-color="#00ff60"/>
<stop offset="0.7419" stop-color="#00ff60"/>
<stop offset="0.7581" stop-color="#00ff60"/>
<stop offset="0.7742" stop-color="#00ff60"/>
<stop offset="0.7903" stop-color="#00ff60"/>
<stop offset="0.8065" stop-color="#00ff60"/>
<stop offset="0.8226" stop-color="#00ff60"/>
<stop offset="0.8387" stop-color="#00ff60"/>
<stop offset="0.8548" stop-color="#00ff60"/>
<stop offset="0.8710" stop-color="#00ff60"/>
<stop offset="0.8871" stop-color="#00ff60"/>
<stop offset="0.9032" stop-color="#00ff60"/>
<stop offset="0.9194" stop-color="#00ff60"/>
<stop offset="0.9355" stop-color="#00ff60"/>
<stop offset="0.9516" stop-color="#00ff60"/>
<stop offset="0.9677" stop-color="#00ff60"/>
<stop offset="0.9839" stop-color="#00ff60"/>
<stop offset="1.0000" stop-color="#00ff60"/>
</linearGradient>
<rect x="275" y="308.41" width="251" height="17.64" fill="url(#g13)"/>
<linearGradient id="g14" gradientUnits="userSpaceOnUse" x1="533" x2="548" y1="0" y2="0">
<stop offset="0.0000" stop-color="#00ff66"/>
<stop offset="0.2000" stop-color="#00ff40"/>
<stop offset="0.3333" stop-color="#00ff1f"/>
<stop offset="0.5667" stop-color="#1aff00"/>
<stop offset="0.6667" stop-color="#1aff00"/>
<stop offset="0.7333" stop-color="#00ff4c"/>
<stop offset="1.0000" stop-color="#00ff4c"/>
</linearGradient>
<rect x="533" y="308.41" width="15" height="17.64" fill="url(#g14)"/>
<linearGradient id="g15" gradientUnits="userSpaceOnUse" x1="554" x2="570" y1="0" y2="0">
<stop offset="0.0000" stop-color="#00ff66"/>
<stop offset="0.2500" stop-color="#00ff66"/>
<stop offset="0.3125" stop-color="#00ff33"/>
<stop offset="0.5000" stop-color="#06ff00"/>
<stop offset="0.5625" stop-color="#1aff00"/>
<stop offset="0.7500" stop-color="#00ff26"/>
<stop offset="1.0000" stop-color="#00ff66"/>
</linearGradient>
<rect x="554" y="308.41" width="16" height="17.64" fill="url(#g15)"/>
<linearGradient id="g16" gradientUnits="userSpaceOnUse" x1="584" x2="806" y1="0" y2="0">
<stop offset="0.0000" stop-color="#00ff33"/>
<stop offset="0.0182" stop-color="#00ff36"/>
<stop offset="0.0364" stop-color="#00ff39"/>
<stop offset="0.0545" stop-color="#00ff3b"/>
<stop offset="0.0727" stop-color="#00ff3e"/>
<stop offset="0.0909" stop-color="#00ff41"/>
<stop offset="0.1091" stop-color="#00ff44"/>
<stop offset="0.1273" stop-color="#00ff46"/>
<stop offset="0.1455" stop-color="#00ff49"/>
<stop offset="0.1636" stop-color="#00ff4c"/>
<stop offset="0.1818" stop-color="#00ff4f"/>
<stop offset="0.2000" stop-color="#00ff51"/>
<stop offset="0.2182" stop-color="#00ff54"/>
<stop offset="0.2364" stop-color="#00ff57"/>
<stop offset="0.2523" stop-color="#00ff59"/>
<stop offset="0.2545" stop-color="#00ff5b"/>
<stop offset="0.2727" stop-color="#00ff69"/>
<stop offset="0.2909" stop-color="#00ff76"/>
<stop offset="0.3091" stop-color="#00ff84"/>
<stop offset="0.3273" stop-color="#00ff92"/>
<stop offset="0.3455" stop-color="#00ffa0"/>
<stop offset="0.3636" stop-color="#00ffad"/>
<stop offset="0.3818" stop-color="#00ffbb"/>
<stop offset="0.3874" stop-color="#00ffbf"/>
<stop offset="0.4000" stop-color="#00ffcb"/>
<stop offset="0.4182" stop-color="#00ffdc"/>
<stop offset="0.4364" stop-color="#00ffec"/>
<stop offset="0.4545" stop-color="#00fffd"/>
<stop offset="0.4727" stop-color="#00f0ff"/>
<stop offset="0.4775" stop-color="#00ecff"/>
<stop offset="0.4909" stop-color="#00ebff"/>
<stop offset="0.5091" stop-color="#00eaff"/>
<stop offset="0.5273" stop-color="#00e9ff"/>
<stop offset="0.5455" stop-color="#00e8ff"/>
<stop offset="0.5636" stop-color="#00e7ff"/>
<stop offset="0.5818" stop-color="#00e6ff"/>
<stop offset="0.5901" stop-color="#00e5ff"/>
<stop offset="0.6000" stop-color="#00e8ff"/>
<stop offset="0.6182" stop-color="#00ecff"/>
<stop offset="0.6364" stop-color="#00f0ff"/>
<stop offset="0.6545" stop-color="#00f4ff"/>
<stop offset="0.6727" stop-color="#00f8ff"/>
<stop offset="0.6909" stop-color="#00fcff"/>
<stop offset="0.7027" stop-color="#00ffff"/>
<stop offset="0.7091" stop-color="#00fffd"/>
<stop offset="0.7273" stop-color="#00fff6"/>
<stop offset="0.7455" stop-color="#00ffef"/>
<stop offset="0.7636" stop-color="#00ffe8"/>
<stop offset="0.7818" stop-color="#00ffe1"/>
<stop offset="0.8000" stop-color="#00ffda"/>
<stop offset="0.8182" stop-color="#00ffd3"/>
<stop offset="0.8364" stop-color="#00ffcd"/>
<stop offset="0.8378" stop-color="#00ffcc"/>
<stop offset="0.8545" stop-color="#00ffc4"/>
<stop offset="0.8727" stop-color="#00ffbb"/>
<stop offset="0.8909" stop-color="#00ffb2"/>
<stop offset="0.9091" stop-color="#00ffa9"/>
<stop offset="0.9273" stop-color="#00ffa1"/>
<stop offset="0.9455" stop-color="#00ff98"/>
<stop offset="0.9636" stop-color="#00ff8f"/>
<stop offset="0.9818" stop-color="#00ff86"/>
<stop offset="0.9955" stop-color="#00ff80"/>
<stop offset="1.0000" stop-color="#00ff80"/>
</linearGradient>
<rect x="584" y="308.41" width="222" height="17.64" fill="url(#g16)"/>
<linearGradient id="g17" gradientUnits="userSpaceOnUse" x1="275" x2="526" y1="0" y2="0">
<stop offset="0.0000" stop-color="#00ff78"/>
<stop offset="0.0161" stop-color="#00ff78"/>
<stop offset="0.0323" stop-color="#00ff77"/>
<stop offset="0.0484" stop-color="#00ff77"/>
<stop offset="0.0645" stop-color="#00ff77"/>
<stop offset="0.0806" stop-color="#00ff77"/>
<stop offset="0.0968" stop-color="#00ff77"/>
<stop offset="0.1129" stop-color="#00ff76"/>
<stop offset="0.1290" stop-color="#00ff76"/>
<stop offset="0.1452" stop-color="#00ff76"/>
<stop offset="0.1613" stop-color="#00ff76"/>
<stop offset="0.1774" stop-color="#00ff76"/>
<stop offset="0.1935" stop-color="#00ff75"/>
<stop offset="0.2097" stop-color="#00ff75"/>
<stop offset="0.2258" stop-color="#00ff75"/>
<stop offset="0.2419" stop-color="#00ff75"/>
<stop offset="0.2581" stop-color="#00ff75"/>
<stop offset="0.2742" stop-color="#00ff74"/>
<stop offset="0.2903" stop-color="#00ff74"/>
<stop offset="0.3065" stop-color="#00ff74"/>
<stop offset="0.3226" stop-color="#00ff74"/>
<stop offset="0.3387" stop-color="#00ff74"/>
<stop offset="0.3548" stop-color="#00ff73"/>
<stop offset="0.3710" stop-color="#00ff73"/>
<stop offset="0.3871" stop-color="#00ff73"/>
<stop offset="0.4032" stop-color="#00ff73"/>
<stop offset="0.4194" stop-color="#00ff72"/>
<stop offset="0.4355" stop-color="#00ff72"/>
<stop offset="0.4516" stop-color="#00ff72"/>
<stop offset="0.4677" stop-color="#00ff72"/>
<stop offset="0.4839" stop-color="#00ff72"/>
<stop offset="0.4980" stop-color="#00ff71"/>
<stop offset="0.5000" stop-color="#00ff71"/>
<stop offset="0.5161" stop-color="#00ff71"/>
<stop offset="0.5323" stop-color="#00ff71"/>
<stop offset="0.5484" stop-color="#00ff71"/>
<stop offset="0.5645" stop-color="#00ff71"/>
<stop offset="0.5806" stop-color="#00ff71"/>
<stop offset="0.5968" stop-color="#00ff71"/>
<stop offset="0.6129" stop-color="#00ff71"/>
<stop offset="0.6290" stop-color="#00ff71"/>
<stop offset="0.6452" stop-color="#00ff71"/>
<stop offset="0.6613" stop-color="#00ff71"/>
<stop offset="0.6774" stop-color="#00ff71"/>
<stop offset="0.6935" stop-color="#00ff71"/>
<stop offset="0.7097" stop-color="#00ff71"/>
<stop offset="0.7258" stop-color="#00ff71"/>
<stop offset="0.7419" stop-color="#00ff71"/>
<stop offset="0.7581" stop-color="#00ff71"/>
<stop offset="0.7742" stop-color="#00ff71"/>
<stop offset="0.7903" stop-color="#00ff71"/>
<stop offset="0.8065" stop-color="#00ff71"/>
<stop offset="0.8226" stop-color="#00ff71"/>
<stop offset="0.8387" stop-color="#00ff71"/>
<stop offset="0.8548" stop-color="#00ff71"/>
<stop offset="0.8710" stop-color="#00ff71"/>
<stop offset="0.8871" stop-color="#00ff71"/>
<stop offset="0.9032" stop-color="#00ff71"/>
<stop offset="0.9194" stop-color="#00ff71"/>
<stop offset="0.9355" stop-color="#00ff71"/>
<stop offset="0.9516" stop-color="#00ff71"/>
<stop offset="0.9677" stop-color="#00ff71"/>
<stop offset="0.9839" stop-color="#00ff71"/>
<stop offset="1.0000" stop-color="#00ff71"/>
</linearGradient>
<rect x="275" y="326.05" width="251" height="17.64" fill="url(#g17)"/>
<linearGradient id="g18" gradientUnits="userSpaceOnUse" x1="533" x2="548" y1="0" y2="0">
<stop offset="0.0000" stop-color="#00ff78"/>
<stop offset="0.2000" stop-color="#00ff86"/>
<stop offset="0.3333" stop-color="#00ff91"/>
<stop offset="0.5667" stop-color="#00ffa6"/>
<stop offset="0.6667" stop-color="#00ffa6"/>
<stop offset="0.7333" stop-color="#00ff80"/>
<stop offset="1.0000" stop-color="#00ff80"/>
</linearGradient>
<rect x="533" y="326.05" width="15" height="17.64" fill="url(#g18)"/>
<linearGradient id="g19" gradientUnits="userSpaceOnUse" x1="554" x2="570" y1="0" y2="0">
<stop offset="0.0000" stop-color="#00ff78"/>
<stop offset="0.2500" stop-color="#00ff78"/>
<stop offset="0.3125" stop-color="#00ff8a"/>
<stop offset="0.5000" stop-color="#00ff9f"/>
<stop offset="0.5625" stop-color="#00ffa6"/>
<stop offset="0.7500" stop-color="#00ff8f"/>
<stop offset="1.0000" stop-color="#00ff78"/>
</linearGradient>
<rect x="554" y="326.05" width="16" height="17.64" fill="url(#g19)"/>
<linearGradient id="g20" gradientUnits="userSpaceOnUse" x1="584" x2="806" y1="0" y2="0">
<stop offset="0.0000" stop-color="#00ff40"/>
<stop offset="0.0182" stop-color="#00ff43"/>
<stop offset="0.0364" stop-color="#00ff45"/>
<stop offset="0.0545" stop-color="#00ff48"/>
<stop offset="0.0727" stop-color="#00ff4b"/>
<stop offset="0.0909" stop-color="#00ff4e"/>
<stop offset="0.1091" stop-color="#00ff50"/>
<stop offset="0.1273" stop-color="#00ff53"/>
<stop offset="0.1455" stop-color="#00ff56"/>
<stop offset="0.1636" stop-color="#00ff59"/>
<stop offset="0.1818" stop-color="#00ff5b"/>
<stop offset="0.2000" stop-color="#00ff5e"/>
<stop offset="0.2182" stop-color="#00ff61"/>
<stop offset="0.2364" stop-color="#00ff64"/>
<stop offset="0.2523" stop-color="#00ff66"/>
<stop offset="0.2545" stop-color="#00ff68"/>
<stop offset="0.2727" stop-color="#00ff79"/>
<stop offset="0.2909" stop-color="#00ff89"/>
<stop offset="0.3091" stop-color="#00ff99"/>
<stop offset="0.3273" stop-color="#00ffaa"/>
<stop offset="0.3455" stop-color="#00ffba"/>
<stop offset="0.3636" stop-color="#00ffcb"/>
<stop offset="0.3649" stop-color="#00ffcc"/>
<stop offset="0.3818" stop-color="#00ffda"/>
<stop offset="0.4000" stop-color="#00ffea"/>
<stop offset="0.4182" stop-color="#00fff9"/>
<stop offset="0.4364" stop-color="#00f5ff"/>
<stop offset="0.4545" stop-color="#00e6ff"/>
<stop offset="0.4727" stop-color="#00d6ff"/>
<stop offset="0.4775" stop-color="#00d2ff"/>
<stop offset="0.4909" stop-color="#00d4ff"/>
<stop offset="0.5091" stop-color="#00d6ff"/>
<stop offset="0.5273" stop-color="#00d8ff"/>
<stop offset="0.5455" stop-color="#00daff"/>
<stop offset="0.5636" stop-color="#00dcff"/>
<stop offset="0.5818" stop-color="#00deff"/>
<stop offset="0.5901" stop-color="#00dfff"/>
<stop offset="0.6000" stop-color="#00e3ff"/>
<stop offset="0.6182" stop-color="#00eaff"/>
<stop offset="0.6364" stop-color="#00f1ff"/>
<stop offset="0.6545" stop-color="#00f9ff"/>
<stop offset="0.6727" stop-color="#00fffe"/>
<stop offset="0.6909" stop-color="#00fff7"/>
<stop offset="0.7027" stop-color="#00fff2"/>
<stop offset="0.7091" stop-color="#00ffee"/>
<stop offset="0.7273" stop-color="#00ffe2"/>
<stop offset="0.7455" stop-color="#00ffd6"/>
<stop offset="0.7636" stop-color="#00ffca"/>
<stop offset="0.7818" stop-color="#00ffbe"/>
<stop offset="0.8000" stop-color="#00ffb2"/>
<stop offset="0.8182" stop-color="#00ffa6"/>
<stop offset="0.8364" stop-color="#00ff9a"/>
<stop offset="0.8378" stop-color="#00ff99"/>
<stop offset="0.8545" stop-color="#00ff8d"/>
<stop offset="0.8727" stop-color="#00ff80"/>
<stop offset="0.8909" stop-color="#00ff72"/>
<stop offset="0.9091" stop-color="#00ff65"/>
<stop offset="0.9273" stop-color="#00ff58"/>
<stop offset="0.9455" stop-color="#00ff4b"/>
<stop offset="0.9636" stop-color="#00ff3d"/>
<stop offset="0.9818" stop-color="#00ff30"/>
<stop offset="0.9955" stop-color="#00ff26"/>
<stop offset="1.0000" stop-color="#00ff26"/>
</linearGradient>
<rect x="584" y="326.05" width="222" height="17.64" fill="url(#g20)"/>
<linearGradient id="g21" gradientUnits="userSpaceOnUse" x1="275" x2="526" y1="0" y2="0">
<stop offset="0.0000" stop-color="#00ff87"/>
<stop offset="0.0161" stop-color="#00ff87"/>
<stop offset="0.0323" stop-color="#00ff87"/>
<stop offset="0.0484" stop-color="#00ff87"/>
<stop offset="0.0645" stop-color="#00ff86"/>
<stop offset="0.0806" stop-color="#00ff86"/>
<stop offset="0.0968" stop-color="#00ff86"/>
<stop offset="0.1129" stop-color="#00ff86"/>
<stop offset="0.1290" stop-color="#00ff85"/>
<stop offset="0.1452" stop-color="#00ff85"/>
<stop offset="0.1613" stop-color="#00ff85"/>
<stop offset="0.1774" stop-color="#00ff85"/>
<stop offset="0.1935" stop-color="#00ff85"/>
<stop offset="0.2097" stop-color="#00ff84"/>
<stop offset="0.2258" stop-color="#00ff84"/>
<stop offset="0.2419" stop-color="#00ff84"/>
<stop offset="0.2581" stop-color="#00ff84"/>
<stop offset="0.2742" stop-color="#00ff84"/>
<stop offset="0.2903" stop-color="#00ff83"/>
<stop offset="0.3065" stop-color="#00ff83"/>
<stop offset="0.3226" stop-color="#00ff83"/>
<stop offset="0.3387" stop-color="#00ff83"/>
<stop offset="0.3548" stop-color="#00ff83"/>
<stop offset="0.3710" stop-color="#00ff82"/>
<stop offset="0.3871" stop-color="#00ff82"/>
<stop offset="0.4032" stop-color="#00ff82"/>
<stop offset="0.4194" stop-color="#00ff82"/>
<stop offset="0.4355" stop-color="#00ff82"/>
<stop offset="0.4516" stop-color="#00ff81"/>
<stop offset="0.4677" stop-color="#00ff81"/>
<stop offset="0.4839" stop-color="#00ff81"/>
<stop offset="0.4980" stop-color="#00ff81"/>
<stop offset="0.5000" stop-color="#00ff81"/>
<stop offset="0.5161" stop-color="#00ff81"/>
<stop offset="0.5323" stop-color="#00ff81"/>
<stop offset="0.5484" stop-color="#00ff81"/>
<stop offset="0.5645" stop-color="#00ff81"/>
<stop offset="0.5806" stop-color="#00ff81"/>
<stop offset="0.5968" stop-color="#00ff81"/>
<stop offset="0.6129" stop-color="#00ff81"/>
<stop offset="0.6290" stop-color="#00ff81"/>
<stop offset="0.6452" stop-color="#00ff81"/>
<stop offset="0.6613" stop-color="#00ff81"/>
<stop offset="0.6774" stop-color="#00ff81"/>
<stop offset="0.6935" stop-color="#00ff81"/>
<stop offset="0.7097" stop-color="#00ff81"/>
<stop offset="0.7258" stop-color="#00ff81"/>
<stop offset="0.7419" stop-color="#00ff81"/>
<stop offset="0.7581" stop-color="#00ff81"/>
<stop offset="0.7742" stop-color="#00ff81"/>
<stop offset="0.7903" stop-color="#00ff81"/>
<stop offset="0.8065" stop-color="#00ff81"/>
<stop offset="0.8226" stop-color="#00ff81"/>
<stop offset="0.8387" stop-color="#00ff81"/>
<stop offset="0.8548" stop-color="#00ff81"/>
<stop offset="0.8710" stop-color="#00ff81"/>
<stop offset="0.8871" stop-color="#00ff81"/>
<stop offset="0.9032" stop-color="#00ff81"/>
<stop offset="0.9194" stop-color="#00ff81"/>
<stop offset="0.9355" stop-color="#00ff81"/>
<stop offset="0.9516" stop-color="#00ff81"/>
<stop offset="0.9677" stop-color="#00ff81"/>
<stop offset="0.9839" stop-color="#00ff81"/>
<stop offset="1.0000" stop-color="#00ff81"/>
</linearGradient>
<rect x="275" y="343.68" width="251" height="17.64" fill="url(#g21)"/>
<linearGradient id="g22" gradientUnits="userSpaceOnUse" x1="533" x2="548" y1="0" y2="0">
<stop offset="0.0000" stop-color="#00ff87"/>
<stop offset="0.2000" stop-color="#00ffc6"/>
<stop offset="0.3333" stop-color="#00fffb"/>
<stop offset="0.5667" stop-color="#00a6ff"/>
<stop offset="0.6667" stop-color="#00a6ff"/>
<stop offset="0.7333" stop-color="#00ffcc"/>
<stop offset="1.0000" stop-color="#00ffcc"/>
</linearGradient>
<rect x="533" y="343.68" width="15" height="17.64" fill="url(#g22)"/>
<linearGradient id="g23" gradientUnits="userSpaceOnUse" x1="554" x2="570" y1="0" y2="0">
<stop offset="0.0000" stop-color="#00ff87"/>
<stop offset="0.2500" stop-color="#00ff87"/>
<stop offset="0.3125" stop-color="#00ffdb"/>
<stop offset="0.5000" stop-color="#00c5ff"/>
<stop offset="0.5625" stop-color="#00a6ff"/>
<stop offset="0.7500" stop-color="#00fff0"/>
<stop offset="1.0000" stop-color="#00ff87"/>
</linearGradient>
<rect x="554" y="343.68" width="16" height="17.64" fill="url(#g23)"/>
<linearGradient id="g24" gradientUnits="userSpaceOnUse" x1="584" x2="806" y1="0" y2="0">
<stop offset="0.0000" stop-color="#00ff4c"/>
<stop offset="0.0182" stop-color="#00ff4f"/>
<stop offset="0.0364" stop-color="#00ff52"/>
<stop offset="0.0545" stop-color="#00ff55"/>
<stop offset="0.0727" stop-color="#00ff58"/>
<stop offset="0.0909" stop-color="#00ff5a"/>
<stop offset="0.1091" stop-color="#00ff5d"/>
<stop offset="0.1273" stop-color="#00ff60"/>
<stop offset="0.1455" stop-color="#00ff63"/>
<stop offset="0.1636" stop-color="#00ff65"/>
<stop offset="0.1818" stop-color="#00ff68"/>
<stop offset="0.2000" stop-color="#00ff6b"/>
<stop offset="0.2182" stop-color="#00ff6e"/>
<stop offset="0.2364" stop-color="#00ff70"/>
<stop offset="0.2523" stop-color="#00ff73"/>
<stop offset="0.2545" stop-color="#00ff75"/>
<stop offset="0.2727" stop-color="#00ff85"/>
<stop offset="0.2909" stop-color="#00ff96"/>
<stop offset="0.3091" stop-color="#00ffa6"/>
<stop offset="0.3273" stop-color="#00ffb7"/>
<stop offset="0.3455" stop-color="#00ffc7"/>
<stop offset="0.3636" stop-color="#00ffd8"/>
<stop offset="0.3649" stop-color="#00ffd9"/>
<stop offset="0.3818" stop-color="#00ffe4"/>
<stop offset="0.4000" stop-color="#00fff1"/>
<stop offset="0.4182" stop-color="#00fffd"/>
<stop offset="0.4364" stop-color="#00f5ff"/>
<stop offset="0.4545" stop-color="#00e8ff"/>
<stop offset="0.4727" stop-color="#00dcff"/>
<stop offset="0.4775" stop-color="#00d9ff"/>
<stop offset="0.4909" stop-color="#00ddff"/>
<stop offset="0.5091" stop-color="#00e3ff"/>
<stop offset="0.5273" stop-color="#00eaff"/>
<stop offset="0.5455" stop-color="#00f0ff"/>
<stop offset="0.5636" stop-color="#00f6ff"/>
<stop offset="0.5818" stop-color="#00fcff"/>
<stop offset="0.5901" stop-color="#00ffff"/>
<stop offset="0.6000" stop-color="#00fffb"/>
<stop offset="0.6182" stop-color="#00fff2"/>
<stop offset="0.6364" stop-color="#00ffea"/>
<stop offset="0.6545" stop-color="#00ffe2"/>
<stop offset="0.6727" stop-color="#00ffda"/>
<stop offset="0.6909" stop-color="#00ffd1"/>
<stop offset="0.7027" stop-color="#00ffcc"/>
<stop offset="0.7091" stop-color="#00ffc7"/>
<stop offset="0.7273" stop-color="#00ffb9"/>
<stop offset="0.7455" stop-color="#00ffac"/>
<stop offset="0.7636" stop-color="#00ff9e"/>
<stop offset="0.7818" stop-color="#00ff90"/>
<stop offset="0.8000" stop-color="#00ff83"/>
<stop offset="0.8182" stop-color="#00ff75"/>
<stop offset="0.8364" stop-color="#00ff67"/>
<stop offset="0.8378" stop-color="#00ff66"/>
<stop offset="0.8545" stop-color="#00ff5b"/>
<stop offset="0.8727" stop-color="#00ff4f"/>
<stop offset="0.8909" stop-color="#00ff44"/>
<stop offset="0.9091" stop-color="#00ff38"/>
<stop offset="0.9273" stop-color="#00ff2c"/>
<stop offset="0.9455" stop-color="#00ff20"/>
<stop offset="0.9636" stop-color="#00ff15"/>
<stop offset="0.9818" stop-color="#00ff09"/>
<stop offset="0.9955" stop-color="#00ff00"/>
<stop offset="1.0000" stop-color="#00ff00"/>
</linearGradient>
<rect x="584" y="343.68" width="222" height="17.64" fill="url(#g24)"/>
<linearGradient id="g25" gradientUnits="userSpaceOnUse" x1="275" x2="526" y1="0" y2="0">
<stop offset="0.0000" stop-color="#00ff96"/>
<stop offset="0.0161" stop-color="#00ff96"/>
<stop offset="0.0323" stop-color="#00ff96"/>
<stop offset="0.0484" stop-color="#00ff96"/>
<stop offset="0.0645" stop-color="#00ff96"/>
<stop offset="0.0806" stop-color="#00ff95"/>
<stop offset="0.0968" stop-color="#00ff95"/>
<stop offset="0.1129" stop-color="#00ff95"/>
<stop offset="0.1290" stop-color="#00ff95"/>
<stop offset="0.1452" stop-color="#00ff95"/>
<stop offset="0.1613" stop-color="#00ff94"/>
<stop offset="0.1774" stop-color="#00ff94"/>
<stop offset="0.1935" stop-color="#00ff94"/>
<stop offset="0.2097" stop-color="#00ff94"/>
<stop offset="0.2258" stop-color="#00ff94"/>
<stop offset="0.2419" stop-color="#00ff93"/>
<stop offset="0.2581" stop-color="#00ff93"/>
<stop offset="0.2742" stop-color="#00ff93"/>
<stop offset="0.2903" stop-color="#00ff93"/>
<stop offset="0.3065" stop-color="#00ff93"/>
<stop offset="0.3226" stop-color="#00ff92"/>
<stop offset="0.3387" stop-color="#00ff92"/>
<stop offset="0.3548" stop-color="#00ff92"/>
<stop offset="0.3710" stop-color="#00ff92"/>
<stop offset="0.3871" stop-color="#00ff91"/>
<stop offset="0.4032" stop-color="#00ff91"/>
<stop offset="0.4194" stop-color="#00ff91"/>
<stop offset="0.4355" stop-color="#00ff91"/>
<stop offset="0.4516" stop-color="#00ff91"/>
<stop offset="0.4677" stop-color="#00ff90"/>
<stop offset="0.4839" stop-color="#00ff90"/>
<stop offset="0.4980" stop-color="#00ff90"/>
<stop offset="0.5000" stop-color="#00ff90"/>
<stop offset="0.5161" stop-color="#00ff91"/>
<stop offset="0.5323" stop-color="#00ff91"/>
<stop offset="0.5484" stop-color="#00ff91"/>
<stop offset="0.5645" stop-color="#00ff92"/>
<stop offset="0.5806" stop-color="#00ff92"/>
<stop offset="0.5968" stop-color="#00ff93"/>
<stop offset="0.6129" stop-color="#00ff93"/>
<stop offset="0.6290" stop-color="#00ff93"/>
<stop offset="0.6452" stop-color="#00ff94"/>
<stop offset="0.6613" stop-color="#00ff94"/>
<stop offset="0.6774" stop-color="#00ff95"/>
<stop offset="0.6935" stop-color="#00ff95"/>
<stop offset="0.7097" stop-color="#00ff95"/>
<stop offset="0.7258" stop-color="#00ff96"/>
<stop offset="0.7419" stop-color="#00ff96"/>
<stop offset="0.7581" stop-color="#00ff97"/>
<stop offset="0.7742" stop-color="#00ff97"/>
<stop offset="0.7903" stop-color="#00ff97"/>
<stop offset="0.8065" stop-color="#00ff98"/>
<stop offset="0.8226" stop-color="#00ff98"/>
<stop offset="0.8387" stop-color="#00ff99"/>
<stop offset="0.8548" stop-color="#00ff99"/>
<stop offset="0.8710" stop-color="#00ff9a"/>
<stop offset="0.8871" stop-color="#00ff9a"/>
<stop offset="0.9032" stop-color="#00ff9a"/>
<stop offset="0.9194" stop-color="#00ff9b"/>
<stop offset="0.9355" stop-color="#00ff9b"/>
<stop offset="0.9516" stop-color="#00ff9c"/>
<stop offset="0.9677" stop-color="#00ff9c"/>
<stop offset="0.9839" stop-color="#00ff9c"/>
<stop offset="1.0000" stop-color="#00ff9d"/>
</linearGradient>
<rect x="275" y="361.32" width="251" height="17.64" fill="url(#g25)"/>
<linearGradient id="g26" gradientUnits="userSpaceOnUse" x1="533" x2="548" y1="0" y2="0">
<stop offset="0.0000" stop-color="#00ff96"/>
<stop offset="0.2000" stop-color="#00fffb"/>
<stop offset="0.3333" stop-color="#00aeff"/>
<stop offset="0.5667" stop-color="#0019ff"/>
<stop offset="0.6667" stop-color="#0019ff"/>
<stop offset="0.7333" stop-color="#00ffe6"/>
<stop offset="1.0000" stop-color="#00ffe6"/>
</linearGradient>
<rect x="533" y="361.32" width="15" height="17.64" fill="url(#g26)"/>
<linearGradient id="g27" gradientUnits="userSpaceOnUse" x1="554" x2="570" y1="0" y2="0">
<stop offset="0.0000" stop-color="#00ff96"/>
<stop offset="0.2500" stop-color="#00ff96"/>
<stop offset="0.3125" stop-color="#00e2ff"/>
<stop offset="0.5000" stop-color="#004cff"/>
<stop offset="0.5625" stop-color="#0019ff"/>
<stop offset="0.7500" stop-color="#00c1ff"/>
<stop offset="1.0000" stop-color="#00ff96"/>
</linearGradient>
<rect x="554" y="361.32" width="16" height="17.64" fill="url(#g27)"/>
<linearGradient id="g28" gradientUnits="userSpaceOnUse" x1="584" x2="806" y1="0" y2="0">
<stop offset="0.0000" stop-color="#00ff66"/>
<stop offset="0.0182" stop-color="#00ff69"/>
<stop offset="0.0364" stop-color="#00ff6c"/>
<stop offset="0.0545" stop-color="#00ff6e"/>
<stop offset="0.0727" stop-color="#00ff71"/>
<stop offset="0.0909" stop-color="#00ff74"/>
<stop offset="0.1091" stop-color="#00ff77"/>
<stop offset="0.1273" stop-color="#00ff79"/>
<stop offset="0.1455" stop-color="#00ff7c"/>
<stop offset="0.1636" stop-color="#00ff7f"/>
<stop offset="0.1818" stop-color="#00ff82"/>
<stop offset="0.2000" stop-color="#00ff84"/>
<stop offset="0.2182" stop-color="#00ff87"/>
<stop offset="0.2364" stop-color="#00ff8a"/>
<stop offset="0.2523" stop-color="#00ff8c"/>
<stop offset="0.2545" stop-color="#00ff8e"/>
<stop offset="0.2727" stop-color="#00ff9a"/>
<stop offset="0.2909" stop-color="#00ffa7"/>
<stop offset="0.3091" stop-color="#00ffb3"/>
<stop offset="0.3273" stop-color="#00ffbf"/>
<stop offset="0.3455" stop-color="#00ffcc"/>
<stop offset="0.3636" stop-color="#00ffd8"/>
<stop offset="0.3649" stop-color="#00ffd9"/>
<stop offset="0.3818" stop-color="#00ffdf"/>
<stop offset="0.4000" stop-color="#00ffe5"/>
<stop offset="0.4182" stop-color="#00ffeb"/>
<stop offset="0.4364" stop-color="#00fff1"/>
<stop offset="0.4545" stop-color="#00fff7"/>
<stop offset="0.4727" stop-color="#00fffd"/>
<stop offset="0.4775" stop-color="#00ffff"/>
<stop offset="0.4909" stop-color="#00fff9"/>
<stop offset="0.5091" stop-color="#00fff1"/>
<stop offset="0.5273" stop-color="#00ffe8"/>
<stop offset="0.5455" stop-color="#00ffe0"/>
<stop offset="0.5636" stop-color="#00ffd8"/>
<stop offset="0.5818" stop-color="#00ffd0"/>
<stop offset="0.5901" stop-color="#00ffcc"/>
<stop offset="0.6000" stop-color="#00ffc6"/>
<stop offset="0.6182" stop-color="#00ffbc"/>
<stop offset="0.6364" stop-color="#00ffb2"/>
<stop offset="0.6545" stop-color="#00ffa8"/>
<stop offset="0.6727" stop-color="#00ff9d"/>
<stop offset="0.6909" stop-color="#00ff93"/>
<stop offset="0.7027" stop-color="#00ff8c"/>
<stop offset="0.7091" stop-color="#00ff89"/>
<stop offset="0.7273" stop-color="#00ff7e"/>
<stop offset="0.7455" stop-color="#00ff74"/>
<stop offset="0.7636" stop-color="#00ff6a"/>
<stop offset="0.7818" stop-color="#00ff5f"/>
<stop offset="0.8000" stop-color="#00ff55"/>
<stop offset="0.8182" stop-color="#00ff4b"/>
<stop offset="0.8364" stop-color="#00ff41"/>
<stop offset="0.8378" stop-color="#00ff40"/>
<stop offset="0.8545" stop-color="#00ff39"/>
<stop offset="0.8727" stop-color="#00ff32"/>
<stop offset="0.8909" stop-color="#00ff2a"/>
<stop offset="0.9091" stop-color="#00ff23"/>
<stop offset="0.9273" stop-color="#00ff1c"/>
<stop offset="0.9455" stop-color="#00ff14"/>
<stop offset="0.9636" stop-color="#00ff0d"/>
<stop offset="0.9818" stop-color="#00ff06"/>
<stop offset="0.9955" stop-color="#00ff00"/>
<stop offset="1.0000" stop-color="#00ff00"/>
</linearGradient>
<rect x="584" y="361.32" width="222" height="17.64" fill="url(#g28)"/>
<linearGradient id="g29" gradientUnits="userSpaceOnUse" x1="275" x2="526" y1="0" y2="0">
<stop offset="0.0000" stop-color="#00ff9f"/>
<stop offset="0.0161" stop-color="#00ff9f"/>
<stop offset="0.0323" stop-color="#00ff9f"/>
<stop offset="0.0484" stop-color="#00ff9f"/>
<stop offset="0.0645" stop-color="#00ff9f"/>
<stop offset="0.0806" stop-color="#00ff9e"/>
<stop offset="0.0968" stop-color="#00ff9e"/>
<stop offset="0.1129" stop-color="#00ff9e"/>
<stop offset="0.1290" stop-color="#00ff9e"/>
<stop offset="0.1452" stop-color="#00ff9e"/>
<stop offset="0.1613" stop-color="#00ff9d"/>
<stop offset="0.1774" stop-color="#00ff9d"/>
<stop offset="0.1935" stop-color="#00ff9d"/>
<stop offset="0.2097" stop-color="#00ff9d"/>
<stop offset="0.2258" stop-color="#00ff9c"/>
<stop offset="0.2419" stop-color="#00ff9c"/>
<stop offset="0.2581" stop-color="#00ff9c"/>
<stop offset="0.2742" stop-color="#00ff9c"/>
<stop offset="0.2903" stop-color="#00ff9c"/>
<stop offset="0.3065" stop-color="#00ff9b"/>
<stop offset="0.3226" stop-color="#00ff9b"/>
<stop offset="0.3387" stop-color="#00ff9b"/>
<stop offset="0.3548" stop-color="#00ff9b"/>
<stop offset="0.3710" stop-color="#00ff9b"/>
<stop offset="0.3871" stop-color="#00ff9a"/>
<stop offset="0.4032" stop-color="#00ff9a"/>
<stop offset="0.4194" stop-color="#00ff9a"/>
<stop offset="0.4355" stop-color="#00ff9a"/>
<stop offset="0.4516" stop-color="#00ff9a"/>
<stop offset="0.4677" stop-color="#00ff99"/>
<stop offset="0.4839" stop-color="#00ff99"/>
<stop offset="0.4980" stop-color="#00ff99"/>
<stop offset="0.5000" stop-color="#00ff99"/>
<stop offset="0.5161" stop-color="#00ff99"/>
<stop offset="0.5323" stop-color="#00ff9a"/>
<stop offset="0.5484" stop-color="#00ff9a"/>
<stop offset="0.5645" stop-color="#00ff9b"/>
<stop offset="0.5806" stop-color="#00ff9b"/>
<stop offset="0.5968" stop-color="#00ff9c"/>
<stop offset="0.6129" stop-color="#00ff9c"/>
<stop offset="0.6290" stop-color="#00ff9c"/>
<stop offset="0.6452" stop-color="#00ff9d"/>
<stop offset="0.6613" stop-color="#00ff9d"/>
<stop offset="0.6774" stop-color="#00ff9e"/>
<stop offset="0.6935" stop-color="#00ff9e"/>
<stop offset="0.7097" stop-color="#00ff9e"/>
<stop offset="0.7258" stop-color="#00ff9f"/>
<stop offset="0.7419" stop-color="#00ff9f"/>
<stop offset="0.7581" stop-color="#00ffa0"/>
<stop offset="0.7742" stop-color="#00ffa0"/>
<stop offset="0.7903" stop-color="#00ffa0"/>
<stop offset="0.8065" stop-color="#00ffa1"/>
<stop offset="0.8226" stop-color="#00ffa1"/>
<stop offset="0.8387" stop-color="#00ffa2"/>
<stop offset="0.8548" stop-color="#00ffa2"/>
<stop offset="0.8710" stop-color="#00ffa2"/>
<stop offset="0.8871" stop-color="#00ffa3"/>
<stop offset="0.9032" stop-color="#00ffa3"/>
<stop offset="0.9194" stop-color="#00ffa4"/>
<stop offset="0.9355" stop-color="#00ffa4"/>
<stop offset="0.9516" stop-color="#00ffa5"/>
<stop offset="0.9677" stop-color="#00ffa5"/>
<stop offset="0.9839" stop-color="#00ffa5"/>
<stop offset="1.0000" stop-color="#00ffa6"/>
</linearGradient>
<rect x="275" y="378.95" width="251" height="17.64" fill="url(#g29)"/>
<linearGradient id="g30" gradientUnits="userSpaceOnUse" x1="533" x2="548" y1="0" y2="0">
<stop offset="0.0000" stop-color="#00ff9f"/>
<stop offset="0.2000" stop-color="#00e6ff"/>
<stop offset="0.3333" stop-color="#0080ff"/>
<stop offset="0.5667" stop-color="#1a00ff"/>
<stop offset="0.6667" stop-color="#1a00ff"/>
<stop offset="0.7333" stop-color="#00fff2"/>
<stop offset="1.0000" stop-color="#00fff2"/>
</linearGradient>
<rect x="533" y="378.95" width="15" height="17.64" fill="url(#g30)"/>
<linearGradient id="g31" gradientUnits="userSpaceOnUse" x1="554" x2="570" y1="0" y2="0">
<stop offset="0.0000" stop-color="#00ff9f"/>
<stop offset="0.2500" stop-color="#00ff9f"/>
<stop offset="0.3125" stop-color="#00beff"/>
<stop offset="0.5000" stop-color="#0009ff"/>
<stop offset="0.5625" stop-color="#1a00ff"/>
<stop offset="0.7500" stop-color="#0096ff"/>
<stop offset="1.0000" stop-color="#00ff9f"/>
</linearGradient>
<rect x="554" y="378.95" width="16" height="17.64" fill="url(#g31)"/>
<linearGradient id="g32" gradientUnits="userSpaceOnUse" x1="584" x2="806" y1="0" y2="0">
<stop offset="0.0000" stop-color="#00ff80"/>
<stop offset="0.0182" stop-color="#00ff82"/>
<stop offset="0.0364" stop-color="#00ff85"/>
<stop offset="0.0545" stop-color="#00ff88"/>
<stop offset="0.0727" stop-color="#00ff8b"/>
<stop offset="0.0909" stop-color="#00ff8d"/>
<stop offset="0.1091" stop-color="#00ff90"/>
<stop offset="0.1273" stop-color="#00ff93"/>
<stop offset="0.1455" stop-color="#00ff96"/>
<stop offset="0.1636" stop-color="#00ff98"/>
<stop offset="0.1818" stop-color="#00ff9b"/>
<stop offset="0.2000" stop-color="#00ff9e"/>
<stop offset="0.2182" stop-color="#00ffa1"/>
<stop offset="0.2364" stop-color="#00ffa3"/>
<stop offset="0.2523" stop-color="#00ffa6"/>
<stop offset="0.2545" stop-color="#00ffa6"/>
<stop offset="0.2727" stop-color="#00ffac"/>
<stop offset="0.2909" stop-color="#00ffb1"/>
<stop offset="0.3091" stop-color="#00ffb6"/>
<stop offset="0.3273" stop-color="#00ffbb"/>
<stop offset="0.3455" stop-color="#00ffc0"/>
<stop offset="0.3636" stop-color="#00ffc5"/>
<stop offset="0.3818" stop-color="#00ffca"/>
<stop offset="0.3874" stop-color="#00ffcc"/>
<stop offset="0.4000" stop-color="#00ffcb"/>
<stop offset="0.4182" stop-color="#00ffc9"/>
<stop offset="0.4364" stop-color="#00ffc7"/>
<stop offset="0.4545" stop-color="#00ffc6"/>
<stop offset="0.4727" stop-color="#00ffc4"/>
<stop offset="0.4909" stop-color="#00ffc2"/>
<stop offset="0.5091" stop-color="#00ffc1"/>
<stop offset="0.5225" stop-color="#00ffbf"/>
<stop offset="0.5273" stop-color="#00ffbd"/>
<stop offset="0.5455" stop-color="#00ffb4"/>
<stop offset="0.5636" stop-color="#00ffac"/>
<stop offset="0.5818" stop-color="#00ffa3"/>
<stop offset="0.6000" stop-color="#00ff9b"/>
<stop offset="0.6182" stop-color="#00ff92"/>
<stop offset="0.6364" stop-color="#00ff8a"/>
<stop offset="0.6545" stop-color="#00ff81"/>
<stop offset="0.6577" stop-color="#00ff80"/>
<stop offset="0.6727" stop-color="#00ff77"/>
<stop offset="0.6909" stop-color="#00ff6d"/>
<stop offset="0.7091" stop-color="#00ff62"/>
<stop offset="0.7273" stop-color="#00ff58"/>
<stop offset="0.7455" stop-color="#00ff4e"/>
<stop offset="0.7636" stop-color="#00ff44"/>
<stop offset="0.7818" stop-color="#00ff39"/>
<stop offset="0.7928" stop-color="#00ff33"/>
<stop offset="0.8000" stop-color="#00ff31"/>
<stop offset="0.8182" stop-color="#00ff2b"/>
<stop offset="0.8364" stop-color="#00ff25"/>
<stop offset="0.8545" stop-color="#00ff20"/>
<stop offset="0.8727" stop-color="#00ff1a"/>
<stop offset="0.8909" stop-color="#00ff14"/>
<stop offset="0.9091" stop-color="#00ff0e"/>
<stop offset="0.9273" stop-color="#00ff09"/>
<stop offset="0.9455" stop-color="#00ff03"/>
<stop offset="0.9636" stop-color="#03ff00"/>
<stop offset="0.9818" stop-color="#08ff00"/>
<stop offset="0.9955" stop-color="#0dff00"/>
<stop offset="1.0000" stop-color="#0dff00"/>
</linearGradient>
<rect x="584" y="378.95" width="222" height="17.64" fill="url(#g32)"/>
<linearGradient id="g33" gradientUnits="userSpaceOnUse" x1="275" x2="526" y1="0" y2="0">
<stop offset="0.0000" stop-color="#00ffa6"/>
<stop offset="0.0161" stop-color="#00ffa6"/>
<stop offset="0.0323" stop-color="#00ffa5"/>
<stop offset="0.0484" stop-color="#00ffa5"/>
<stop offset="0.0645" stop-color="#00ffa5"/>
<stop offset="0.0806" stop-color="#00ffa5"/>
<stop offset="0.0968" stop-color="#00ffa5"/>
<stop offset="0.1129" stop-color="#00ffa4"/>
<stop offset="0.1290" stop-color="#00ffa4"/>
<stop offset="0.1452" stop-color="#00ffa4"/>
<stop offset="0.1613" stop-color="#00ffa4"/>
<stop offset="0.1774" stop-color="#00ffa3"/>
<stop offset="0.1935" stop-color="#00ffa3"/>
<stop offset="0.2097" stop-color="#00ffa3"/>
<stop offset="0.2258" stop-color="#00ffa3"/>
<stop offset="0.2419" stop-color="#00ffa3"/>
<stop offset="0.2581" stop-color="#00ffa2"/>
<stop offset="0.2742" stop-color="#00ffa2"/>
<stop offset="0.2903" stop-color="#00ffa2"/>
<stop offset="0.3065" stop-color="#00ffa2"/>
<stop offset="0.3226" stop-color="#00ffa2"/>
<stop offset="0.3387" stop-color="#00ffa1"/>
<stop offset="0.3548" stop-color="#00ffa1"/>
<stop offset="0.3710" stop-color="#00ffa1"/>
<stop offset="0.3871" stop-color="#00ffa1"/>
<stop offset="0.4032" stop-color="#00ffa1"/>
<stop offset="0.4194" stop-color="#00ffa0"/>
<stop offset="0.4355" stop-color="#00ffa0"/>
<stop offset="0.4516" stop-color="#00ffa0"/>
<stop offset="0.4677" stop-color="#00ffa0"/>
<stop offset="0.4839" stop-color="#00ffa0"/>
<stop offset="0.4980" stop-color="#00ff9f"/>
<stop offset="0.5000" stop-color="#00ff9f"/>
<stop offset="0.5161" stop-color="#00ffa0"/>
<stop offset="0.5323" stop-color="#00ffa0"/>
<stop offset="0.5484" stop-color="#00ffa1"/>
<stop offset="0.5645" stop-color="#00ffa1"/>
<stop offset="0.5806" stop-color="#00ffa1"/>
<stop offset="0.5968" stop-color="#00ffa2"/>
<stop offset="0.6129" stop-color="#00ffa2"/>
<stop offset="0.6290" stop-color="#00ffa3"/>
<stop offset="0.6452" stop-color="#00ffa3"/>
<stop offset="0.6613" stop-color="#00ffa4"/>
<stop offset="0.6774" stop-color="#00ffa4"/>
<stop offset="0.6935" stop-color="#00ffa4"/>
<stop offset="0.7097" stop-color="#00ffa5"/>
<stop offset="0.7258" stop-color="#00ffa5"/>
<stop offset="0.7419" stop-color="#00ffa6"/>
<stop offset="0.7581" stop-color="#00ffa6"/>
<stop offset="0.7742" stop-color="#00ffa6"/>
<stop offset="0.7903" stop-color="#00ffa7"/>
<stop offset="0.8065" stop-color="#00ffa7"/>
<stop offset="0.8226" stop-color="#00ffa8"/>
<stop offset="0.8387" stop-color="#00ffa8"/>
<stop offset="0.8548" stop-color="#00ffa8"/>
<stop offset="0.8710" stop-color="#00ffa9"/>
<stop offset="0.8871" stop-color="#00ffa9"/>
<stop offset="0.9032" stop-color="#00ffaa"/>
<stop offset="0.9194" stop-color="#00ffaa"/>
<stop offset="0.9355" stop-color="#00ffaa"/>
<stop offset="0.9516" stop-color="#00ffab"/>
<stop offset="0.9677" stop-color="#00ffab"/>
<stop offset="0.9839" stop-color="#00ffac"/>
<stop offset="1.0000" stop-color="#00ffac"/>
</linearGradient>
<rect x="275" y="396.59" width="251" height="17.64" fill="url(#g33)"/>
<linearGradient id="g34" gradientUnits="userSpaceOnUse" x1="533" x2="548" y1="0" y2="0">
<stop offset="0.0000" stop-color="#00ffa6"/>
<stop offset="0.2000" stop-color="#00deff"/>
<stop offset="0.3333" stop-color="#0076ff"/>
<stop offset="0.5667" stop-color="#2000ff"/>
<stop offset="0.6667" stop-color="#2000ff"/>
<stop offset="0.7333" stop-color="#00fff2"/>
<stop offset="1.0000" stop-color="#00fff2"/>
</linearGradient>
<rect x="533" y="396.59" width="15" height="17.64" fill="url(#g34)"/>
<linearGradient id="g35" gradientUnits="userSpaceOnUse" x1="554" x2="570" y1="0" y2="0">
<stop offset="0.0000" stop-color="#00ffa6"/>
<stop offset="0.2500" stop-color="#00ffa6"/>
<stop offset="0.3125" stop-color="#00b5ff"/>
<stop offset="0.5000" stop-color="#0100ff"/>
<stop offset="0.5625" stop-color="#2000ff"/>
<stop offset="0.7500" stop-color="#008cff"/>
<stop offset="1.0000" stop-color="#00ffa6"/>
</linearGradient>
<rect x="554" y="396.59" width="16" height="17.64" fill="url(#g35)"/>
<linearGradient id="g36" gradientUnits="userSpaceOnUse" x1="584" x2="806" y1="0" y2="0">
<stop offset="0.0000" stop-color="#00ff8c"/>
<stop offset="0.0182" stop-color="#00ff8e"/>
<stop offset="0.0364" stop-color="#00ff90"/>
<stop offset="0.0545" stop-color="#00ff92"/>
<stop offset="0.0727" stop-color="#00ff94"/>
<stop offset="0.0909" stop-color="#00ff95"/>
<stop offset="0.1091" stop-color="#00ff97"/>
<stop offset="0.1273" stop-color="#00ff99"/>
<stop offset="0.1455" stop-color="#00ff9b"/>
<stop offset="0.1636" stop-color="#00ff9d"/>
<stop offset="0.1818" stop-color="#00ff9f"/>
<stop offset="0.2000" stop-color="#00ffa0"/>
<stop offset="0.2182" stop-color="#00ffa2"/>
<stop offset="0.2364" stop-color="#00ffa4"/>
<stop offset="0.2523" stop-color="#00ffa6"/>
<stop offset="0.2545" stop-color="#00ffa6"/>
<stop offset="0.2727" stop-color="#00ffa8"/>
<stop offset="0.2909" stop-color="#00ffa9"/>
<stop offset="0.3091" stop-color="#00ffab"/>
<stop offset="0.3273" stop-color="#00ffad"/>
<stop offset="0.3455" stop-color="#00ffaf"/>
<stop offset="0.3636" stop-color="#00ffb0"/>
<stop offset="0.3818" stop-color="#00ffb2"/>
<stop offset="0.3874" stop-color="#00ffb2"/>
<stop offset="0.4000" stop-color="#00ffae"/>
<stop offset="0.4182" stop-color="#00ffa7"/>
<stop offset="0.4364" stop-color="#00ffa0"/>
<stop offset="0.4545" stop-color="#00ff99"/>
<stop offset="0.4727" stop-color="#00ff92"/>
<stop offset="0.4909" stop-color="#00ff8b"/>
<stop offset="0.5091" stop-color="#00ff85"/>
<stop offset="0.5225" stop-color="#00ff80"/>
<stop offset="0.5273" stop-color="#00ff7d"/>
<stop offset="0.5455" stop-color="#00ff75"/>
<stop offset="0.5636" stop-color="#00ff6c"/>
<stop offset="0.5818" stop-color="#00ff64"/>
<stop offset="0.6000" stop-color="#00ff5b"/>
<stop offset="0.6182" stop-color="#00ff52"/>
<stop offset="0.6364" stop-color="#00ff4a"/>
<stop offset="0.6545" stop-color="#00ff41"/>
<stop offset="0.6577" stop-color="#00ff40"/>
<stop offset="0.6727" stop-color="#00ff39"/>
<stop offset="0.6909" stop-color="#00ff30"/>
<stop offset="0.7091" stop-color="#00ff27"/>
<stop offset="0.7273" stop-color="#00ff1f"/>
<stop offset="0.7455" stop-color="#00ff16"/>
<stop offset="0.7636" stop-color="#00ff0e"/>
<stop offset="0.7818" stop-color="#00ff05"/>
<stop offset="0.7928" stop-color="#00ff00"/>
<stop offset="0.8000" stop-color="#01ff00"/>
<stop offset="0.8182" stop-color="#03ff00"/>
<stop offset="0.8364" stop-color="#05ff00"/>
<stop offset="0.8545" stop-color="#08ff00"/>
<stop offset="0.8727" stop-color="#0aff00"/>
<stop offset="0.8909" stop-color="#0cff00"/>
<stop offset="0.9091" stop-color="#0fff00"/>
<stop offset="0.9273" stop-color="#11ff00"/>
<stop offset="0.9455" stop-color="#13ff00"/>
<stop offset="0.9636" stop-color="#15ff00"/>
<stop offset="0.9818" stop-color="#18ff00"/>
<stop offset="0.9955" stop-color="#1aff00"/>
<stop offset="1.0000" stop-color="#1aff00"/>
</linearGradient>
<rect x="584" y="396.59" width="222" height="17.64" fill="url(#g36)"/>
<linearGradient id="g37" gradientUnits="userSpaceOnUse" x1="275" x2="526" y1="0" y2="0">
<stop offset="0.0000" stop-color="#00ffaa"/>
<stop offset="0.0161" stop-color="#00ffa9"/>
<stop offset="0.0323" stop-color="#00ffa9"/>
<stop offset="0.0484" stop-color="#00ffa9"/>
<stop offset="0.0645" stop-color="#00ffa9"/>
<stop offset="0.0806" stop-color="#00ffa9"/>
<stop offset="0.0968" stop-color="#00ffa8"/>
<stop offset="0.1129" stop-color="#00ffa8"/>
<stop offset="0.1290" stop-color="#00ffa8"/>
<stop offset="0.1452" stop-color="#00ffa8"/>
<stop offset="0.1613" stop-color="#00ffa8"/>
<stop offset="0.1774" stop-color="#00ffa7"/>
<stop offset="0.1935" stop-color="#00ffa7"/>
<stop offset="0.2097" stop-color="#00ffa7"/>
<stop offset="0.2258" stop-color="#00ffa7"/>
<stop offset="0.2419" stop-color="#00ffa6"/>
<stop offset="0.2581" stop-color="#00ffa6"/>
<stop offset="0.2742" stop-color="#00ffa6"/>
<stop offset="0.2903" stop-color="#00ffa6"/>
<stop offset="0.3065" stop-color="#00ffa6"/>
<stop offset="0.3226" stop-color="#00ffa5"/>
<stop offset="0.3387" stop-color="#00ffa5"/>
<stop offset="0.3548" stop-color="#00ffa5"/>
<stop offset="0.3710" stop-color="#00ffa5"/>
<stop offset="0.3871" stop-color="#00ffa5"/>
<stop offset="0.4032" stop-color="#00ffa4"/>
<stop offset="0.4194" stop-color="#00ffa4"/>
<stop offset="0.4355" stop-color="#00ffa4"/>
<stop offset="0.4516" stop-color="#00ffa4"/>
<stop offset="0.4677" stop-color="#00ffa4"/>
<stop offset="0.4839" stop-color="#00ffa3"/>
<stop offset="0.4980" stop-color="#00ffa3"/>
<stop offset="0.5000" stop-color="#00ffa3"/>
<stop offset="0.5161" stop-color="#00ffa4"/>
<stop offset="0.5323" stop-color="#00ffa4"/>
<stop offset="0.5484" stop-color="#00ffa4"/>
<stop offset="0.5645" stop-color="#00ffa5"/>
<stop offset="0.5806" stop-color="#00ffa5"/>
<stop offset="0.5968" stop-color="#00ffa6"/>
<stop offset="0.6129" stop-color="#00ffa6"/>
<stop offset="0.6290" stop-color="#00ffa7"/>
<stop offset="0.6452" stop-color="#00ffa7"/>
<stop offset="0.6613" stop-color="#00ffa7"/>
<stop offset="0.6774" stop-color="#00ffa8"/>
<stop offset="0.6935" stop-color="#00ffa8"/>
<stop offset="0.7097" stop-color="#00ffa9"/>
<stop offset="0.7258" stop-color="#00ffa9"/>
<stop offset="0.7419" stop-color="#00ffa9"/>
<stop offset="0.7581" stop-color="#00ffaa"/>
<stop offset="0.7742" stop-color="#00ffaa"/>
<stop offset="0.7903" stop-color="#00ffab"/>
<stop offset="0.8065" stop-color="#00ffab"/>
<stop offset="0.8226" stop-color="#00ffab"/>
<stop offset="0.8387" stop-color="#00ffac"/>
<stop offset="0.8548" stop-color="#00ffac"/>
<stop offset="0.8710" stop-color="#00ffad"/>
<stop offset="0.8871" stop-color="#00ffad"/>
<stop offset="0.9032" stop-color="#00ffad"/>
<stop offset="0.9194" stop-color="#00ffae"/>
<stop offset="0.9355" stop-color="#00ffae"/>
<stop offset="0.9516" stop-color="#00ffaf"/>
<stop offset="0.9677" stop-color="#00ffaf"/>
<stop offset="0.9839" stop-color="#00ffb0"/>
<stop offset="1.0000" stop-color="#00ffb0"/>
</linearGradient>
<rect x="275" y="414.23" width="251" height="17.64" fill="url(#g37)"/>
<linearGradient id="g38" gradientUnits="userSpaceOnUse" x1="533" x2="548" y1="0" y2="0">
<stop offset="0.0000" stop-color="#00ffaa"/>
<stop offset="0.2000" stop-color="#00f2ff"/>
<stop offset="0.3333" stop-color="#009fff"/>
<stop offset="0.5667" stop-color="#000dff"/>
<stop offset="0.6667" stop-color="#000dff"/>
<stop offset="0.7333" stop-color="#00ffe6"/>
<stop offset="1.0000" stop-color="#00ffe6"/>
</linearGradient>
<rect x="533" y="414.23" width="15" height="17.64" fill="url(#g38)"/>
<linearGradient id="g39" gradientUnits="userSpaceOnUse" x1="554" x2="570" y1="0" y2="0">
<stop offset="0.0000" stop-color="#00ffaa"/>
<stop offset="0.2500" stop-color="#00ffaa"/>
<stop offset="0.3125" stop-color="#00d1ff"/>
<stop offset="0.5000" stop-color="#003eff"/>
<stop offset="0.5625" stop-color="#000dff"/>
<stop offset="0.7500" stop-color="#00b1ff"/>
<stop offset="1.0000" stop-color="#00ffaa"/>
</linearGradient>
<rect x="554" y="414.23" width="16" height="17.64" fill="url(#g39)"/>
<linearGradient id="g40" gradientUnits="userSpaceOnUse" x1="584" x2="806" y1="0" y2="0">
<stop offset="0.0000" stop-color="#00ff99"/>
<stop offset="0.0182" stop-color="#00ff9a"/>
<stop offset="0.0364" stop-color="#00ff9b"/>
<stop offset="0.0545" stop-color="#00ff9c"/>
<stop offset="0.0727" stop-color="#00ff9d"/>
<stop offset="0.0909" stop-color="#00ff9e"/>
<stop offset="0.1091" stop-color="#00ff9f"/>
<stop offset="0.1273" stop-color="#00ff9f"/>
<stop offset="0.1455" stop-color="#00ffa0"/>
<stop offset="0.1636" stop-color="#00ffa1"/>
<stop offset="0.1818" stop-color="#00ffa2"/>
<stop offset="0.2000" stop-color="#00ffa3"/>
<stop offset="0.2182" stop-color="#00ffa4"/>
<stop offset="0.2364" stop-color="#00ffa5"/>
<stop offset="0.2523" stop-color="#00ffa6"/>
<stop offset="0.2545" stop-color="#00ffa5"/>
<stop offset="0.2727" stop-color="#00ffa2"/>
<stop offset="0.2909" stop-color="#00ff9e"/>
<stop offset="0.3091" stop-color="#00ff9b"/>
<stop offset="0.3273" stop-color="#00ff98"/>
<stop offset="0.3455" stop-color="#00ff94"/>
<stop offset="0.3636" stop-color="#00ff91"/>
<stop offset="0.3818" stop-color="#00ff8d"/>
<stop offset="0.3874" stop-color="#00ff8c"/>
<stop offset="0.4000" stop-color="#00ff85"/>
<stop offset="0.4182" stop-color="#00ff7b"/>
<stop offset="0.4364" stop-color="#00ff71"/>
<stop offset="0.4545" stop-color="#00ff66"/>
<stop offset="0.4727" stop-color="#00ff5c"/>
<stop offset="0.4909" stop-color="#00ff52"/>
<stop offset="0.5091" stop-color="#00ff47"/>
<stop offset="0.5225" stop-color="#00ff40"/>
<stop offset="0.5273" stop-color="#00ff3e"/>
<stop offset="0.5455" stop-color="#00ff37"/>
<stop offset="0.5636" stop-color="#00ff30"/>
<stop offset="0.5818" stop-color="#00ff29"/>
<stop offset="0.6000" stop-color="#00ff23"/>
<stop offset="0.6182" stop-color="#00ff1c"/>
<stop offset="0.6364" stop-color="#00ff15"/>
<stop offset="0.6545" stop-color="#00ff0e"/>
<stop offset="0.6577" stop-color="#00ff0d"/>
<stop offset="0.6727" stop-color="#00ff0a"/>
<stop offset="0.6909" stop-color="#00ff06"/>
<stop offset="0.7091" stop-color="#00ff03"/>
<stop offset="0.7273" stop-color="#00ff00"/>
<stop offset="0.7455" stop-color="#04ff00"/>
<stop offset="0.7636" stop-color="#07ff00"/>
<stop offset="0.7818" stop-color="#0bff00"/>
<stop offset="0.7928" stop-color="#0dff00"/>
<stop offset="0.8000" stop-color="#0dff00"/>
<stop offset="0.8182" stop-color="#0eff00"/>
<stop offset="0.8364" stop-color="#0fff00"/>
<stop offset="0.8545" stop-color="#11ff00"/>
<stop offset="0.8727" stop-color="#12ff00"/>
<stop offset="0.8909" stop-color="#13ff00"/>
<stop offset="0.9091" stop-color="#14ff00"/>
<stop offset="0.9273" stop-color="#15ff00"/>
<stop offset="0.9455" stop-color="#16ff00"/>
<stop offset="0.9636" stop-color="#17ff00"/>
<stop offset="0.9818" stop-color="#19ff00"/>
<stop offset="0.9955" stop-color="#1aff00"/>
<stop offset="1.0000" stop-color="#1aff00"/>
</linearGradient>
<rect x="584" y="414.23" width="222" height="17.64" fill="url(#g40)"/>
<linearGradient id="g41" gradientUnits="userSpaceOnUse" x1="275" x2="526" y1="0" y2="0">
<stop offset="0.0000" stop-color="#00ffa6"/>
<stop offset="0.0161" stop-color="#00ffa6"/>
<stop offset="0.0323" stop-color="#00ffa5"/>
<stop offset="0.0484" stop-color="#00ffa5"/>
<stop offset="0.0645" stop-color="#00ffa5"/>
<stop offset="0.0806" stop-color="#00ffa5"/>
<stop offset="0.0968" stop-color="#00ffa5"/>
<stop offset="0.1129" stop-color="#00ffa4"/>
<stop offset="0.1290" stop-color="#00ffa4"/>
<stop offset="0.1452" stop-color="#00ffa4"/>
<stop offset="0.1613" stop-color="#00ffa4"/>
<stop offset="0.1774" stop-color="#00ffa3"/>
<stop offset="0.1935" stop-color="#00ffa3"/>
<stop offset="0.2097" stop-color="#00ffa3"/>
<stop offset="0.2258" stop-color="#00ffa3"/>
<stop offset="0.2419" stop-color="#00ffa3"/>
<stop offset="0.2581" stop-color="#00ffa2"/>
<stop offset="0.2742" stop-color="#00ffa2"/>
<stop offset="0.2903" stop-color="#00ffa2"/>
<stop offset="0.3065" stop-color="#00ffa2"/>
<stop offset="0.3226" stop-color="#00ffa2"/>
<stop offset="0.3387" stop-color="#00ffa1"/>
<stop offset="0.3548" stop-color="#00ffa1"/>
<stop offset="0.3710" stop-color="#00ffa1"/>
<stop offset="0.3871" stop-color="#00ffa1"/>
<stop offset="0.4032" stop-color="#00ffa1"/>
<stop offset="0.4194" stop-color="#00ffa0"/>
<stop offset="0.4355" stop-color="#00ffa0"/>
<stop offset="0.4516" stop-color="#00ffa0"/>
<stop offset="0.4677" stop-color="#00ffa0"/>
<stop offset="0.4839" stop-color="#00ffa0"/>
<stop offset="0.4980" stop-color="#00ff9f"/>
<stop offset="0.5000" stop-color="#00ff9f"/>
<stop offset="0.5161" stop-color="#00ffa0"/>
<stop offset="0.5323" stop-color="#00ffa0"/>
<stop offset="0.5484" stop-color="#00ffa1"/>
<stop offset="0.5645" stop-color="#00ffa1"/>
<stop offset="0.5806" stop-color="#00ffa1"/>
<stop offset="0.5968" stop-color="#00ffa2"/>
<stop offset="0.6129" stop-color="#00ffa2"/>
<stop offset="0.6290" stop-color="#00ffa3"/>
<stop offset="0.6452" stop-color="#00ffa3"/>
<stop offset="0.6613" stop-color="#00ffa4"/>
<stop offset="0.6774" stop-color="#00ffa4"/>
<stop offset="0.6935" stop-color="#00ffa4"/>
<stop offset="0.7097" stop-color="#00ffa5"/>
<stop offset="0.7258" stop-color="#00ffa5"/>
<stop offset="0.7419" stop-color="#00ffa6"/>
<stop offset="0.7581" stop-color="#00ffa6"/>
<stop offset="0.7742" stop-color="#00ffa6"/>
<stop offset="0.7903" stop-color="#00ffa7"/>
<stop offset="0.8065" stop-color="#00ffa7"/>
<stop offset="0.8226" stop-color="#00ffa8"/>
<stop offset="0.8387" stop-color="#00ffa8"/>
<stop offset="0.8548" stop-color="#00ffa8"/>
<stop offset="0.8710" stop-color="#00ffa9"/>
<stop offset="0.8871" stop-color="#00ffa9"/>
<stop offset="0.9032" stop-color="#00ffaa"/>
<stop offset="0.9194" stop-color="#00ffaa"/>
<stop offset="0.9355" stop-color="#00ffaa"/>
<stop offset="0.9516" stop-color="#00ffab"/>
<stop offset="0.9677" stop-color="#00ffab"/>
<stop offset="0.9839" stop-color="#00ffac"/>
<stop offset="1.0000" stop-color="#00ffac"/>
</linearGradient>
<rect x="275" y="431.86" width="251" height="17.64" fill="url(#g41)"/>
<linearGradient id="g42" gradientUnits="userSpaceOnUse" x1="533" x2="548" y1="0" y2="0">
<stop offset="0.0000" stop-color="#00ffa6"/>
<stop offset="0.2000" stop-color="#00ffd7"/>
<stop offset="0.3333" stop-color="#00fcff"/>
<stop offset="0.5667" stop-color="#00b3ff"/>
<stop offset="0.6667" stop-color="#00b3ff"/>
<stop offset="0.7333" stop-color="#00ffcc"/>
<stop offset="1.0000" stop-color="#00ffcc"/>
</linearGradient>
<rect x="533" y="431.86" width="15" height="17.64" fill="url(#g42)"/>
<linearGradient id="g43" gradientUnits="userSpaceOnUse" x1="554" x2="570" y1="0" y2="0">
<stop offset="0.0000" stop-color="#00ffa6"/>
<stop offset="0.2500" stop-color="#00ffa6"/>
<stop offset="0.3125" stop-color="#00ffe8"/>
<stop offset="0.5000" stop-color="#00cbff"/>
<stop offset="0.5625" stop-color="#00b3ff"/>
<stop offset="0.7500" stop-color="#00fff9"/>
<stop offset="1.0000" stop-color="#00ffa6"/>
</linearGradient>
<rect x="554" y="431.86" width="16" height="17.64" fill="url(#g43)"/>
<linearGradient id="g44" gradientUnits="userSpaceOnUse" x1="584" x2="806" y1="0" y2="0">
<stop offset="0.0000" stop-color="#00ffa6"/>
<stop offset="0.0182" stop-color="#00ffa6"/>
<stop offset="0.0364" stop-color="#00ffa6"/>
<stop offset="0.0545" stop-color="#00ffa6"/>
<stop offset="0.0727" stop-color="#00ffa6"/>
<stop offset="0.0909" stop-color="#00ffa6"/>
<stop offset="0.1091" stop-color="#00ffa6"/>
<stop offset="0.1273" stop-color="#00ffa6"/>
<stop offset="0.1455" stop-color="#00ffa6"/>
<stop offset="0.1622" stop-color="#00ffa6"/>
<stop offset="0.1636" stop-color="#00ffa5"/>
<stop offset="0.1818" stop-color="#00ffa0"/>
<stop offset="0.2000" stop-color="#00ff9b"/>
<stop offset="0.2182" stop-color="#00ff96"/>
<stop offset="0.2364" stop-color="#00ff91"/>
<stop offset="0.2545" stop-color="#00ff8c"/>
<stop offset="0.2727" stop-color="#00ff86"/>
<stop offset="0.2909" stop-color="#00ff81"/>
<stop offset="0.2973" stop-color="#00ff80"/>
<stop offset="0.3091" stop-color="#00ff79"/>
<stop offset="0.3273" stop-color="#00ff6f"/>
<stop offset="0.3455" stop-color="#00ff64"/>
<stop offset="0.3636" stop-color="#00ff5a"/>
<stop offset="0.3818" stop-color="#00ff50"/>
<stop offset="0.4000" stop-color="#00ff45"/>
<stop offset="0.4182" stop-color="#00ff3b"/>
<stop offset="0.4324" stop-color="#00ff33"/>
<stop offset="0.4364" stop-color="#00ff32"/>
<stop offset="0.4545" stop-color="#00ff2b"/>
<stop offset="0.4727" stop-color="#00ff24"/>
<stop offset="0.4909" stop-color="#00ff1d"/>
<stop offset="0.5091" stop-color="#00ff16"/>
<stop offset="0.5273" stop-color="#00ff0f"/>
<stop offset="0.5455" stop-color="#00ff08"/>
<stop offset="0.5636" stop-color="#00ff01"/>
<stop offset="0.5676" stop-color="#00ff00"/>
<stop offset="0.5818" stop-color="#01ff00"/>
<stop offset="0.6000" stop-color="#03ff00"/>
<stop offset="0.6182" stop-color="#05ff00"/>
<stop offset="0.6364" stop-color="#06ff00"/>
<stop offset="0.6545" stop-color="#08ff00"/>
<stop offset="0.6727" stop-color="#0aff00"/>
<stop offset="0.6909" stop-color="#0cff00"/>
<stop offset="0.7027" stop-color="#0dff00"/>
<stop offset="0.7091" stop-color="#0cff00"/>
<stop offset="0.7273" stop-color="#0cff00"/>
<stop offset="0.7455" stop-color="#0bff00"/>
<stop offset="0.7636" stop-color="#0aff00"/>
<stop offset="0.7818" stop-color="#09ff00"/>
<stop offset="0.8000" stop-color="#09ff00"/>
<stop offset="0.8182" stop-color="#08ff00"/>
<stop offset="0.8364" stop-color="#07ff00"/>
<stop offset="0.8545" stop-color="#06ff00"/>
<stop offset="0.8727" stop-color="#05ff00"/>
<stop offset="0.8909" stop-color="#05ff00"/>
<stop offset="0.9091" stop-color="#04ff00"/>
<stop offset="0.9273" stop-color="#03ff00"/>
<stop offset="0.9455" stop-color="#02ff00"/>
<stop offset="0.9636" stop-color="#01ff00"/>
<stop offset="0.9818" stop-color="#01ff00"/>
<stop offset="0.9955" stop-color="#00ff00"/>
<stop offset="1.0000" stop-color="#00ff00"/>
</linearGradient>
<rect x="584" y="431.86" width="222" height="17.64" fill="url(#g44)"/>
</g>
<path d="M275 273.5H806M275 290.5H806M275 308.5H806M275 326.5H806M275 343.5H806M275 361.5H806M275 378.5H806M275 396.5H806M275 414.5H806M275 431.5H806M279.5 256V449M294.5 256V449M310.5 256V449M325.5 256V449M341.5 256V449M356.5 256V449M372.5 256V449M387.5 256V449M403.5 256V449M418.5 256V449M434.5 256V449M450.5 256V449M465.5 256V449M481.5 256V449M496.5 256V449M512.5 256V449M527.5 256V449M543.5 256V449M558.5 256V449M574.5 256V449M589.5 256V449M605.5 256V449M620.5 256V449M636.5 256V449M651.5 256V449M667.5 256V449M682.5 256V449M698.5 256V449M714.5 256V449M729.5 256V449M745.5 256V449M760.5 256V449M776.5 256V449M791.5 256V449" stroke="#000" stroke-width="1" fill="none" shape-rendering="crispEdges"/>
<path d="M210.5 255.5H829.5V449.5H210.5ZM211.5 256V265M211.5 440V449M217.5 256V262M217.5 443V449M224.5 256V262M224.5 443V449M230.5 256V262M230.5 443V449M237.5 256V262M237.5 443V449M244.5 256V262M244.5 443V449M250.5 256V262M250.5 443V449M257.5 256V262M257.5 443V449M263.5 256V262M263.5 443V449M270.5 256V265M270.5 440V449M277.5 256V262M277.5 443V449M283.5 256V262M283.5 443V449M290.5 256V262M290.5 443V449M296.5 256V262M296.5 443V449M303.5 256V262M303.5 443V449M310.5 256V262M310.5 443V449M316.5 256V262M316.5 443V449M323.5 256V262M323.5 443V449M329.5 256V265M329.5 440V449M336.5 256V262M336.5 443V449M342.5 256V262M342.5 443V449M349.5 256V262M349.5 443V449M356.5 256V262M356.5 443V449M362.5 256V262M362.5 443V449M369.5 256V262M369.5 443V449M375.5 256V262M375.5 443V449M382.5 256V262M382.5 443V449M389.5 256V265M389.5 440V449M395.5 256V262M395.5 443V449M402.5 256V262M402.5 443V449M408.5 256V262M408.5 443V449M415.5 256V262M415.5 443V449M422.5 256V262M422.5 443V449M428.5 256V262M428.5 443V449M435.5 256V262M435.5 443V449M441.5 256V262M441.5 443V449M448.5 256V265M448.5 440V449M455.5 256V262M455.5 443V449M461.5 256V262M461.5 443V449M468.5 256V262M468.5 443V449M474.5 256V262M474.5 443V449M481.5 256V262M481.5 443V449M488.5 256V262M488.5 443V449M494.5 256V262M494.5 443V449M501.5 256V262M501.5 443V449M507.5 256V265M507.5 440V449M514.5 256V262M514.5 443V449M521.5 256V262M521.5 443V449M527.5 256V262M527.5 443V449M534.5 256V262M534.5 443V449M540.5 256V262M540.5 443V449M547.5 256V262M547.5 443V449M554.5 256V262M554.5 443V449M560.5 256V262M560.5 443V449M567.5 256V265M567.5 440V449M573.5 256V262M573.5 443V449M580.5 256V262M580.5 443V449M587.5 256V262M587.5 443V449M593.5 256V262M593.5 443V449M600.5 256V262M600.5 443V449M606.5 256V262M606.5 443V449M613.5 256V262M613.5 443V449M620.5 256V262M620.5 443V449M626.5 256V265M626.5 440V449M633.5 256V262M633.5 443V449M639.5 256V262M639.5 443V449M646.5 256V262M646.5 443V449M653.5 256V262M653.5 443V449M659.5 256V262M659.5 443V449M666.5 256V262M666.5 443V449M672.5 256V262M672.5 443V449M679.5 256V262M679.5 443V449M686.5 256V265M686.5 440V449M692.5 256V262M692.5 443V449M699.5 256V262M699.5 443V449M705.5 256V262M705.5 443V449M712.5 256V262M712.5 443V449M718.5 256V262M718.5 443V449M725.5 256V262M725.5 443V449M732.5 256V262M732.5 443V449M738.5 256V262M738.5 443V449M745.5 256V265M745.5 440V449M751.5 256V262M751.5 443V449M758.5 256V262M758.5 443V449M765.5 256V262M765.5 443V449M771.5 256V262M771.5 443V449M778.5 256V262M778.5 443V449M784.5 256V262M784.5 443V449M791.5 256V262M791.5 443V449M798.5 256V262M798.5 443V449M804.5 256V265M804.5 440V449M811.5 256V262M811.5 443V449M817.5 256V262M817.5 443V449M824.5 256V262M824.5 443V449" stroke="#fff" stroke-width="1" fill="none" shape-rendering="crispEdges"/>
<defs><linearGradient id="cb2" x1="0" y1="1" x2="0" y2="0">
<stop offset="0.0" stop-color="#8000ff"/>
<stop offset="0.2" stop-color="#0000ff"/>
<stop offset="0.4" stop-color="#00ffff"/>
<stop offset="0.6" stop-color="#00ff00"/>
<stop offset="0.8" stop-color="#ffff00"/>
<stop offset="1.0" stop-color="#ff0000"/>
</linearGradient></defs>
<rect x="850.5" y="275.5" width="32" height="154" fill="url(#cb2)" stroke="#fff" stroke-width="1" shape-rendering="crispEdges"/>
<path d="M878 421.5H882M878 414.5H882M878 406.5H882M878 398.5H882M874 391.5H882M878 383.5H882M878 375.5H882M878 367.5H882M878 360.5H882M874 352.5H882M878 344.5H882M878 337.5H882M878 329.5H882M878 321.5H882M874 314.5H882M878 306.5H882M878 298.5H882M878 290.5H882M878 283.5H882" stroke="#fff" stroke-width="1" fill="none" shape-rendering="crispEdges"/>
<path d="M210.5 501V679M829.5 501V679M201 501.5H839M201 678.5H839M211.5 502V511M211.5 669V678M217.5 502V507M217.5 673V678M224.5 502V507M224.5 673V678M230.5 502V507M230.5 673V678M237.5 502V507M237.5 673V678M244.5 502V507M244.5 673V678M250.5 502V507M250.5 673V678M257.5 502V507M257.5 673V678M263.5 502V507M263.5 673V678M270.5 502V511M270.5 669V678M277.5 502V507M277.5 673V678M283.5 502V507M283.5 673V678M290.5 502V507M290.5 673V678M296.5 502V507M296.5 673V678M303.5 502V507M303.5 673V678M310.5 502V507M310.5 673V678M316.5 502V507M316.5 673V678M323.5 502V507M323.5 673V678M329.5 502V511M329.5 669V678M336.5 502V507M336.5 673V678M342.5 502V507M342.5 673V678M349.5 502V507M349.5 673V678M356.5 502V507M356.5 673V678M362.5 502V507M362.5 673V678M369.5 502V507M369.5 673V678M375.5 502V507M375.5 673V678M382.5 502V507M382.5 673V678M389.5 502V511M389.5 669V678M395.5 502V507M395.5 673V678M402.5 502V507M402.5 673V678M408.5 502V507M408.5 673V678M415.5 502V507M415.5 673V678M422.5 502V507M422.5 673V678M428.5 502V507M428.5 673V678M435.5 502V507M435.5 673V678M441.5 502V507M441.5 673V678M448.5 502V511M448.5 669V678M455.5 502V507M455.5 673V678M461.5 502V507M461.5 673V678M468.5 502V507M468.5 673V678M474.5 502V507M474.5 673V678M481.5 502V507M481.5 673V678M488.5 502V507M488.5 673V678M494.5 502V507M494.5 673V678M501.5 502V507M501.5 673V678M507.5 502V511M507.5 669V678M514.5 502V507M514.5 673V678M521.5 502V507M521.5 673V678M527.5 502V507M527.5 673V678M534.5 502V507M534.5 673V678M540.5 502V507M540.5 673V678M547.5 502V507M547.5 673V678M554.5 502V507M554.5 673V678M560.5 502V507M560.5 673V678M567.5 502V511M567.5 669V678M573.5 502V507M573.5 673V678M580.5 502V507M580.5 673V678M587.5 502V507M587.5 673V678M593.5 502V507M593.5 673V678M600.5 502V507M600.5 673V678M606.5 502V507M606.5 673V678M613.5 502V507M613.5 673V678M620.5 502V507M620.5 673V678M626.5 502V511M626.5 669V678M633.5 502V507M633.5 673V678M639.5 502V507M639.5 673V678M646.5 502V507M646.5 673V678M653.5 502V507M653.5 673V678M659.5 502V507M659.5 673V678M666.5 502V507M666.5 673V678M672.5 502V507M672.5 673V678M679.5 502V507M679.5 673V678M686.5 502V511M686.5 669V678M692.5 502V507M692.5 673V678M699.5 502V507M699.5 673V678M705.5 502V507M705.5 673V678M712.5 502V507M712.5 673V678M718.5 502V507M718.5 673V678M725.5 502V507M725.5 673V678M732.5 502V507M732.5 673V678M738.5 502V507M738.5 673V678M745.5 502V511M745.5 669V678M751.5 502V507M751.5 673V678M758.5 502V507M758.5 673V678M765.5 502V507M765.5 673V678M771.5 502V507M771.5 673V678M778.5 502V507M778.5 673V678M784.5 502V507M784.5 673V678M791.5 502V507M791.5 673V678M798.5 502V507M798.5 673V678M804.5 502V511M804.5 669V678M811.5 502V507M811.5 673V678M817.5 502V507M817.5 673V678M824.5 502V507M824.5 673V678M201 501.5H210M204 508.5H210M204 515.5H210M204 522.5H210M204 529.5H210M201 536.5H210M204 543.5H210M204 551.5H210M204 558.5H210M204 565.5H210M201 572.5H210M204 579.5H210M204 586.5H210M204 593.5H210M204 600.5H210M201 607.5H210M204 614.5H210M204 621.5H210M204 628.5H210M204 636.5H210M201 643.5H210M204 650.5H210M204 657.5H210M204 664.5H210M204 671.5H210M201 678.5H210M830 501.5H839M830 510.5H836M830 519.5H836M830 528.5H836M830 536.5H839M830 545.5H836M830 554.5H836M830 563.5H836M830 572.5H839M830 581.5H836M830 590.5H836M830 598.5H836M830 607.5H839M830 616.5H836M830 625.5H836M830 634.5H836M830 643.5H839M830 651.5H836M830 660.5H836M830 669.5H836M830 678.5H839" stroke="#fff" stroke-width="1" fill="none" shape-rendering="crispEdges"/>
<path d="M236 572.5H248M249 572.5H263M264 572.5H279M280 572.5H294M295 572.5H310M311 572.5H325M326 572.5H341M342 572.5H356M357 572.5H372M373 572.5H387M388 572.5H403M404 572.5H418M419 572.5H434M435 572.5H450M451 572.5H453M454 607.5H465M466 607.5H481M482 607.5H496M497 607.5H512M513 607.5H527M528 607.5H543M544 607.5H558M559 607.5H574M575 607.5H589M590 607.5H605M606 607.5H620M621 607.5H636M637 607.5H641M642 643.5H651M652 643.5H667M668 643.5H682M683 643.5H698M699 643.5H714M715 643.5H729M730 643.5H745M746 643.5H760M761 643.5H776M777 643.5H791M792 643.5H806M235 583.5h1M231 607.5h1M233 607.5h2" stroke="#fff" stroke-width="1" fill="none" shape-rendering="crispEdges"/>
<path d="M211 588.5H221M221 589.5H233M233 590.5H249M249 591.5H264M264 592.5H277M277 593.5H291M291 594.5H305M305 595.5H319M319 596.5H333M333 597.5H352M352 598.5H367M367 599.5H379M379 600.5H395M395 601.5H411M411 602.5H427M427 603.5H443M443 604.5H459M459 605.5H478M478 606.5H498M498 607.5H519M519 608.5H542M542 609.5H570M570 610.5H670M670 609.5H687M687 608.5H700M700 607.5H711M711 606.5H720M720 605.5H728M728 604.5H736M736 603.5H744M744 602.5H751M751 601.5H758M758 600.5H764M764 599.5H770M770 598.5H776M776 597.5H780M780 596.5H784M784 595.5H789M789 594.5H793M793 593.5H798M798 592.5H802M802 591.5H806M806 590.5H811M811 589.5H815M815 588.5H820M820 587.5H823M823 586.5H827M827 585.5H829" stroke="#00e400" stroke-width="1" fill="none" stroke-dasharray="3 1" shape-rendering="crispEdges"/>
<g opacity="0.999">
<text x="424.17" y="30.5" font-size="16.6" letter-spacing="1.475">2011/076</text>
<text x="512.24" y="30.5" font-size="16.6" letter-spacing="0.635">11:15:00.000</text>
<text x="262.84" y="51.7" font-size="16.6" letter-spacing="0.705">ELSSCIL/MEx</text>
<text x="385.34" y="51.7" font-size="16.6" letter-spacing="1.826">ELS-07</text>
<text x="460.64" y="51.7" font-size="16.6" letter-spacing="1.979">LR-Bk</text>
<text x="533.17" y="51.7" font-size="16.6" letter-spacing="2.814">(ergs/(cm**2-sr-sec-eV))</text>
<text transform="translate(851.03,59.7) scale(0.9303,1)" font-size="16.6">DEF</text>
<text x="850.84" y="258.3" font-size="16.6" letter-spacing="1.040">Deg</text>
<text transform="translate(69.3,206.36) rotate(-90)" font-size="16.6" letter-spacing="0.999">Electron Energy</text>
<text transform="translate(89.5,158.53) rotate(-90)" font-size="16.6" letter-spacing="1.433">(eV)</text>
<text transform="translate(175.01,86.1) scale(0.9241,1)" font-size="14">10</text>
<text x="189.48" y="78.9" font-size="8.3">2</text>
<text transform="translate(175.01,155.5) scale(0.9241,1)" font-size="14">10</text>
<text x="189.27" y="148.3" font-size="8.3">1</text>
<text transform="translate(175.01,225.1) scale(0.9241,1)" font-size="14">10</text>
<text x="189.58" y="217.9" font-size="8.3">0</text>
<text x="892.63" y="82.8" font-size="18" letter-spacing="-0.547">10</text>
<text x="913.45" y="73.89999999999999" font-size="11.2" letter-spacing="1.775">−3</text>
<text x="892.63" y="125" font-size="18" letter-spacing="-0.547">10</text>
<text x="913.45" y="116.1" font-size="11.2" letter-spacing="1.611">−4</text>
<text x="892.63" y="167" font-size="18" letter-spacing="-0.547">10</text>
<text x="913.45" y="158.1" font-size="11.2" letter-spacing="1.753">−5</text>
<text x="892.63" y="209.5" font-size="18" letter-spacing="-0.547">10</text>
<text x="913.45" y="200.6" font-size="11.2" letter-spacing="1.775">−6</text>
<text x="893.33" y="281" font-size="18" letter-spacing="0.171">180</text>
<text x="893.33" y="318.8" font-size="18" letter-spacing="0.197">135</text>
<text x="894.96" y="358.4" font-size="18" letter-spacing="1.325">90</text>
<text x="895.39" y="396.8" font-size="18" letter-spacing="0.947">45</text>
<text x="895.10" y="435.6" font-size="18">0</text>
<text transform="translate(196.20,238.7) scale(0.8448,1)" font-size="14" stroke="#fff" stroke-width="0.5">11:15</text>
<text x="252.63" y="238.7" font-size="14" letter-spacing="-0.130" stroke="#fff" stroke-width="0.5">11:30</text>
<text x="312.83" y="238.7" font-size="14" letter-spacing="-0.320" stroke="#fff" stroke-width="0.5">11:45</text>
<text x="369.53" y="238.7" font-size="14" letter-spacing="0.620" stroke="#fff" stroke-width="0.5">12:00</text>
<text x="432.03" y="238.7" font-size="14" letter-spacing="-0.645" stroke="#fff" stroke-width="0.5">12:15</text>
<text x="488.93" y="238.7" font-size="14" letter-spacing="0.545" stroke="#fff" stroke-width="0.5">12:30</text>
<text x="548.23" y="238.7" font-size="14" letter-spacing="0.555" stroke="#fff" stroke-width="0.5">12:45</text>
<text x="608.03" y="238.7" font-size="14" letter-spacing="0.545" stroke="#fff" stroke-width="0.5">13:00</text>
<text x="668.73" y="238.7" font-size="14" letter-spacing="-0.295" stroke="#fff" stroke-width="0.5">13:15</text>
<text x="726.33" y="238.7" font-size="14" letter-spacing="0.520" stroke="#fff" stroke-width="0.5">13:30</text>
<text x="785.43" y="238.7" font-size="14" letter-spacing="0.530" stroke="#fff" stroke-width="0.5">13:45</text>
<text x="117.12" y="238.7" font-size="13.6" letter-spacing="0.592">GMT(min)</text>
<text transform="translate(196.20,467.9) scale(0.8448,1)" font-size="14" stroke="#fff" stroke-width="0.5">11:15</text>
<text x="252.63" y="467.9" font-size="14" letter-spacing="-0.130" stroke="#fff" stroke-width="0.5">11:30</text>
<text x="312.83" y="467.9" font-size="14" letter-spacing="-0.320" stroke="#fff" stroke-width="0.5">11:45</text>
<text x="369.53" y="467.9" font-size="14" letter-spacing="0.620" stroke="#fff" stroke-width="0.5">12:00</text>
<text x="432.03" y="467.9" font-size="14" letter-spacing="-0.645" stroke="#fff" stroke-width="0.5">12:15</text>
<text x="488.93" y="467.9" font-size="14" letter-spacing="0.545" stroke="#fff" stroke-width="0.5">12:30</text>
<text x="548.23" y="467.9" font-size="14" letter-spacing="0.555" stroke="#fff" stroke-width="0.5">12:45</text>
<text x="608.03" y="467.9" font-size="14" letter-spacing="0.545" stroke="#fff" stroke-width="0.5">13:00</text>
<text x="668.73" y="467.9" font-size="14" letter-spacing="-0.295" stroke="#fff" stroke-width="0.5">13:15</text>
<text x="726.33" y="467.9" font-size="14" letter-spacing="0.520" stroke="#fff" stroke-width="0.5">13:30</text>
<text x="785.43" y="467.9" font-size="14" letter-spacing="0.530" stroke="#fff" stroke-width="0.5">13:45</text>
<text x="117.92" y="467.9" font-size="13.6" letter-spacing="0.563">GMT(min)</text>
<text transform="translate(196.20,697) scale(0.8448,1)" font-size="14" stroke="#fff" stroke-width="0.5">11:15</text>
<text x="252.63" y="697" font-size="14" letter-spacing="-0.130" stroke="#fff" stroke-width="0.5">11:30</text>
<text x="312.83" y="697" font-size="14" letter-spacing="-0.320" stroke="#fff" stroke-width="0.5">11:45</text>
<text x="369.53" y="697" font-size="14" letter-spacing="0.620" stroke="#fff" stroke-width="0.5">12:00</text>
<text x="432.03" y="697" font-size="14" letter-spacing="-0.645" stroke="#fff" stroke-width="0.5">12:15</text>
<text x="488.93" y="697" font-size="14" letter-spacing="0.545" stroke="#fff" stroke-width="0.5">12:30</text>
<text x="548.23" y="697" font-size="14" letter-spacing="0.555" stroke="#fff" stroke-width="0.5">12:45</text>
<text x="608.03" y="697" font-size="14" letter-spacing="0.545" stroke="#fff" stroke-width="0.5">13:00</text>
<text x="668.73" y="697" font-size="14" letter-spacing="-0.295" stroke="#fff" stroke-width="0.5">13:15</text>
<text x="726.33" y="697" font-size="14" letter-spacing="0.520" stroke="#fff" stroke-width="0.5">13:30</text>
<text x="785.43" y="697" font-size="14" letter-spacing="0.530" stroke="#fff" stroke-width="0.5">13:45</text>
<text x="116.72" y="697" font-size="13.6" letter-spacing="0.849">GMT(min)</text>
<text x="73.49" y="269.0" font-size="13.5" letter-spacing="-0.152">ELS-11</text>
<text x="125.99" y="269.0" font-size="13.5" letter-spacing="0.668">Pitch</text>
<text x="167.17" y="269.0" font-size="13.5" letter-spacing="0.425">Angle</text>
<text x="69.89" y="286.7" font-size="13.5" letter-spacing="0.701">ELS-10</text>
<text x="125.99" y="286.7" font-size="13.5" letter-spacing="0.668">Pitch</text>
<text x="167.17" y="286.7" font-size="13.5" letter-spacing="0.425">Angle</text>
<text x="66.49" y="304.3" font-size="13.5" letter-spacing="1.404">ELS-09</text>
<text x="125.99" y="304.3" font-size="13.5" letter-spacing="0.668">Pitch</text>
<text x="167.17" y="304.3" font-size="13.5" letter-spacing="0.425">Angle</text>
<text x="66.49" y="321.9" font-size="13.5" letter-spacing="1.393">ELS-08</text>
<text x="125.99" y="321.9" font-size="13.5" letter-spacing="0.668">Pitch</text>
<text x="167.17" y="321.9" font-size="13.5" letter-spacing="0.425">Angle</text>
<text x="66.49" y="339.6" font-size="13.5" letter-spacing="1.412">ELS-07</text>
<text x="125.99" y="339.6" font-size="13.5" letter-spacing="0.668">Pitch</text>
<text x="167.17" y="339.6" font-size="13.5" letter-spacing="0.425">Angle</text>
<text x="66.49" y="357.2" font-size="13.5" letter-spacing="1.394">ELS-06</text>
<text x="125.99" y="357.2" font-size="13.5" letter-spacing="0.668">Pitch</text>
<text x="167.17" y="357.2" font-size="13.5" letter-spacing="0.425">Angle</text>
<text x="66.49" y="374.8" font-size="13.5" letter-spacing="1.389">ELS-05</text>
<text x="125.99" y="374.8" font-size="13.5" letter-spacing="0.668">Pitch</text>
<text x="167.17" y="374.8" font-size="13.5" letter-spacing="0.425">Angle</text>
<text x="66.49" y="392.5" font-size="13.5" letter-spacing="1.355">ELS-04</text>
<text x="125.99" y="392.5" font-size="13.5" letter-spacing="0.668">Pitch</text>
<text x="167.17" y="392.5" font-size="13.5" letter-spacing="0.425">Angle</text>
<text x="66.49" y="410.1" font-size="13.5" letter-spacing="1.394">ELS-03</text>
<text x="125.99" y="410.1" font-size="13.5" letter-spacing="0.668">Pitch</text>
<text x="167.17" y="410.1" font-size="13.5" letter-spacing="0.425">Angle</text>
<text x="66.49" y="427.7" font-size="13.5" letter-spacing="1.412">ELS-02</text>
<text x="125.99" y="427.7" font-size="13.5" letter-spacing="0.668">Pitch</text>
<text x="167.17" y="427.7" font-size="13.5" letter-spacing="0.425">Angle</text>
<text x="69.89" y="445.4" font-size="13.5" letter-spacing="0.568">ELS-01</text>
<text x="125.99" y="445.4" font-size="13.5" letter-spacing="0.668">Pitch</text>
<text x="167.17" y="445.4" font-size="13.5" letter-spacing="0.425">Angle</text>
<text x="211.15" y="491.8" font-size="16.6" letter-spacing="1.471">SAF_BXuT/Data Quality (L)</text>
<text x="529.64" y="491.8" font-size="16.6" letter-spacing="1.152" fill="#00e000">MEXORBMC/SPF X, Spacecraft (R)</text>
<text x="186.97" y="505.9" font-size="14.2">4</text>
<text x="186.76" y="541.3" font-size="14.2">3</text>
<text x="186.59" y="576.7" font-size="14.2">2</text>
<text x="186.22" y="612.1" font-size="14.2">1</text>
<text x="186.75" y="647.5" font-size="14.2">0</text>
<text transform="translate(180.41,682.9) scale(0.8448,1)" font-size="14.2">−1</text>
<text x="844.83" y="505.5" font-size="14" letter-spacing="0.730">1.0e+04</text>
<text x="845.99" y="540.9" font-size="14" letter-spacing="1.172">6.0e+03</text>
<text x="845.60" y="576.3" font-size="14" letter-spacing="1.237">2.0e+03</text>
<text x="846.31" y="611.7" font-size="14" letter-spacing="1.262">−2.0e+03</text>
<text x="846.31" y="647.1" font-size="14" letter-spacing="1.262">−6.0e+03</text>
<text x="846.31" y="682.5" font-size="14" letter-spacing="0.776">−1.0e+04</text>
<text transform="translate(70,663.06) rotate(-90)" font-size="16.6" letter-spacing="1.129">Raw Data Quality</text>
<text transform="translate(89.5,614.03) rotate(-90)" font-size="16.6" letter-spacing="1.224">(Raw)</text>
<text transform="translate(969.7,503.66) rotate(90)" font-size="16.6" letter-spacing="1.033">Component Distance</text>
<text transform="translate(950.3,569.27) rotate(90)" font-size="16.6" letter-spacing="2.692">(km)</text>
</g>
</g></svg></body></html>
